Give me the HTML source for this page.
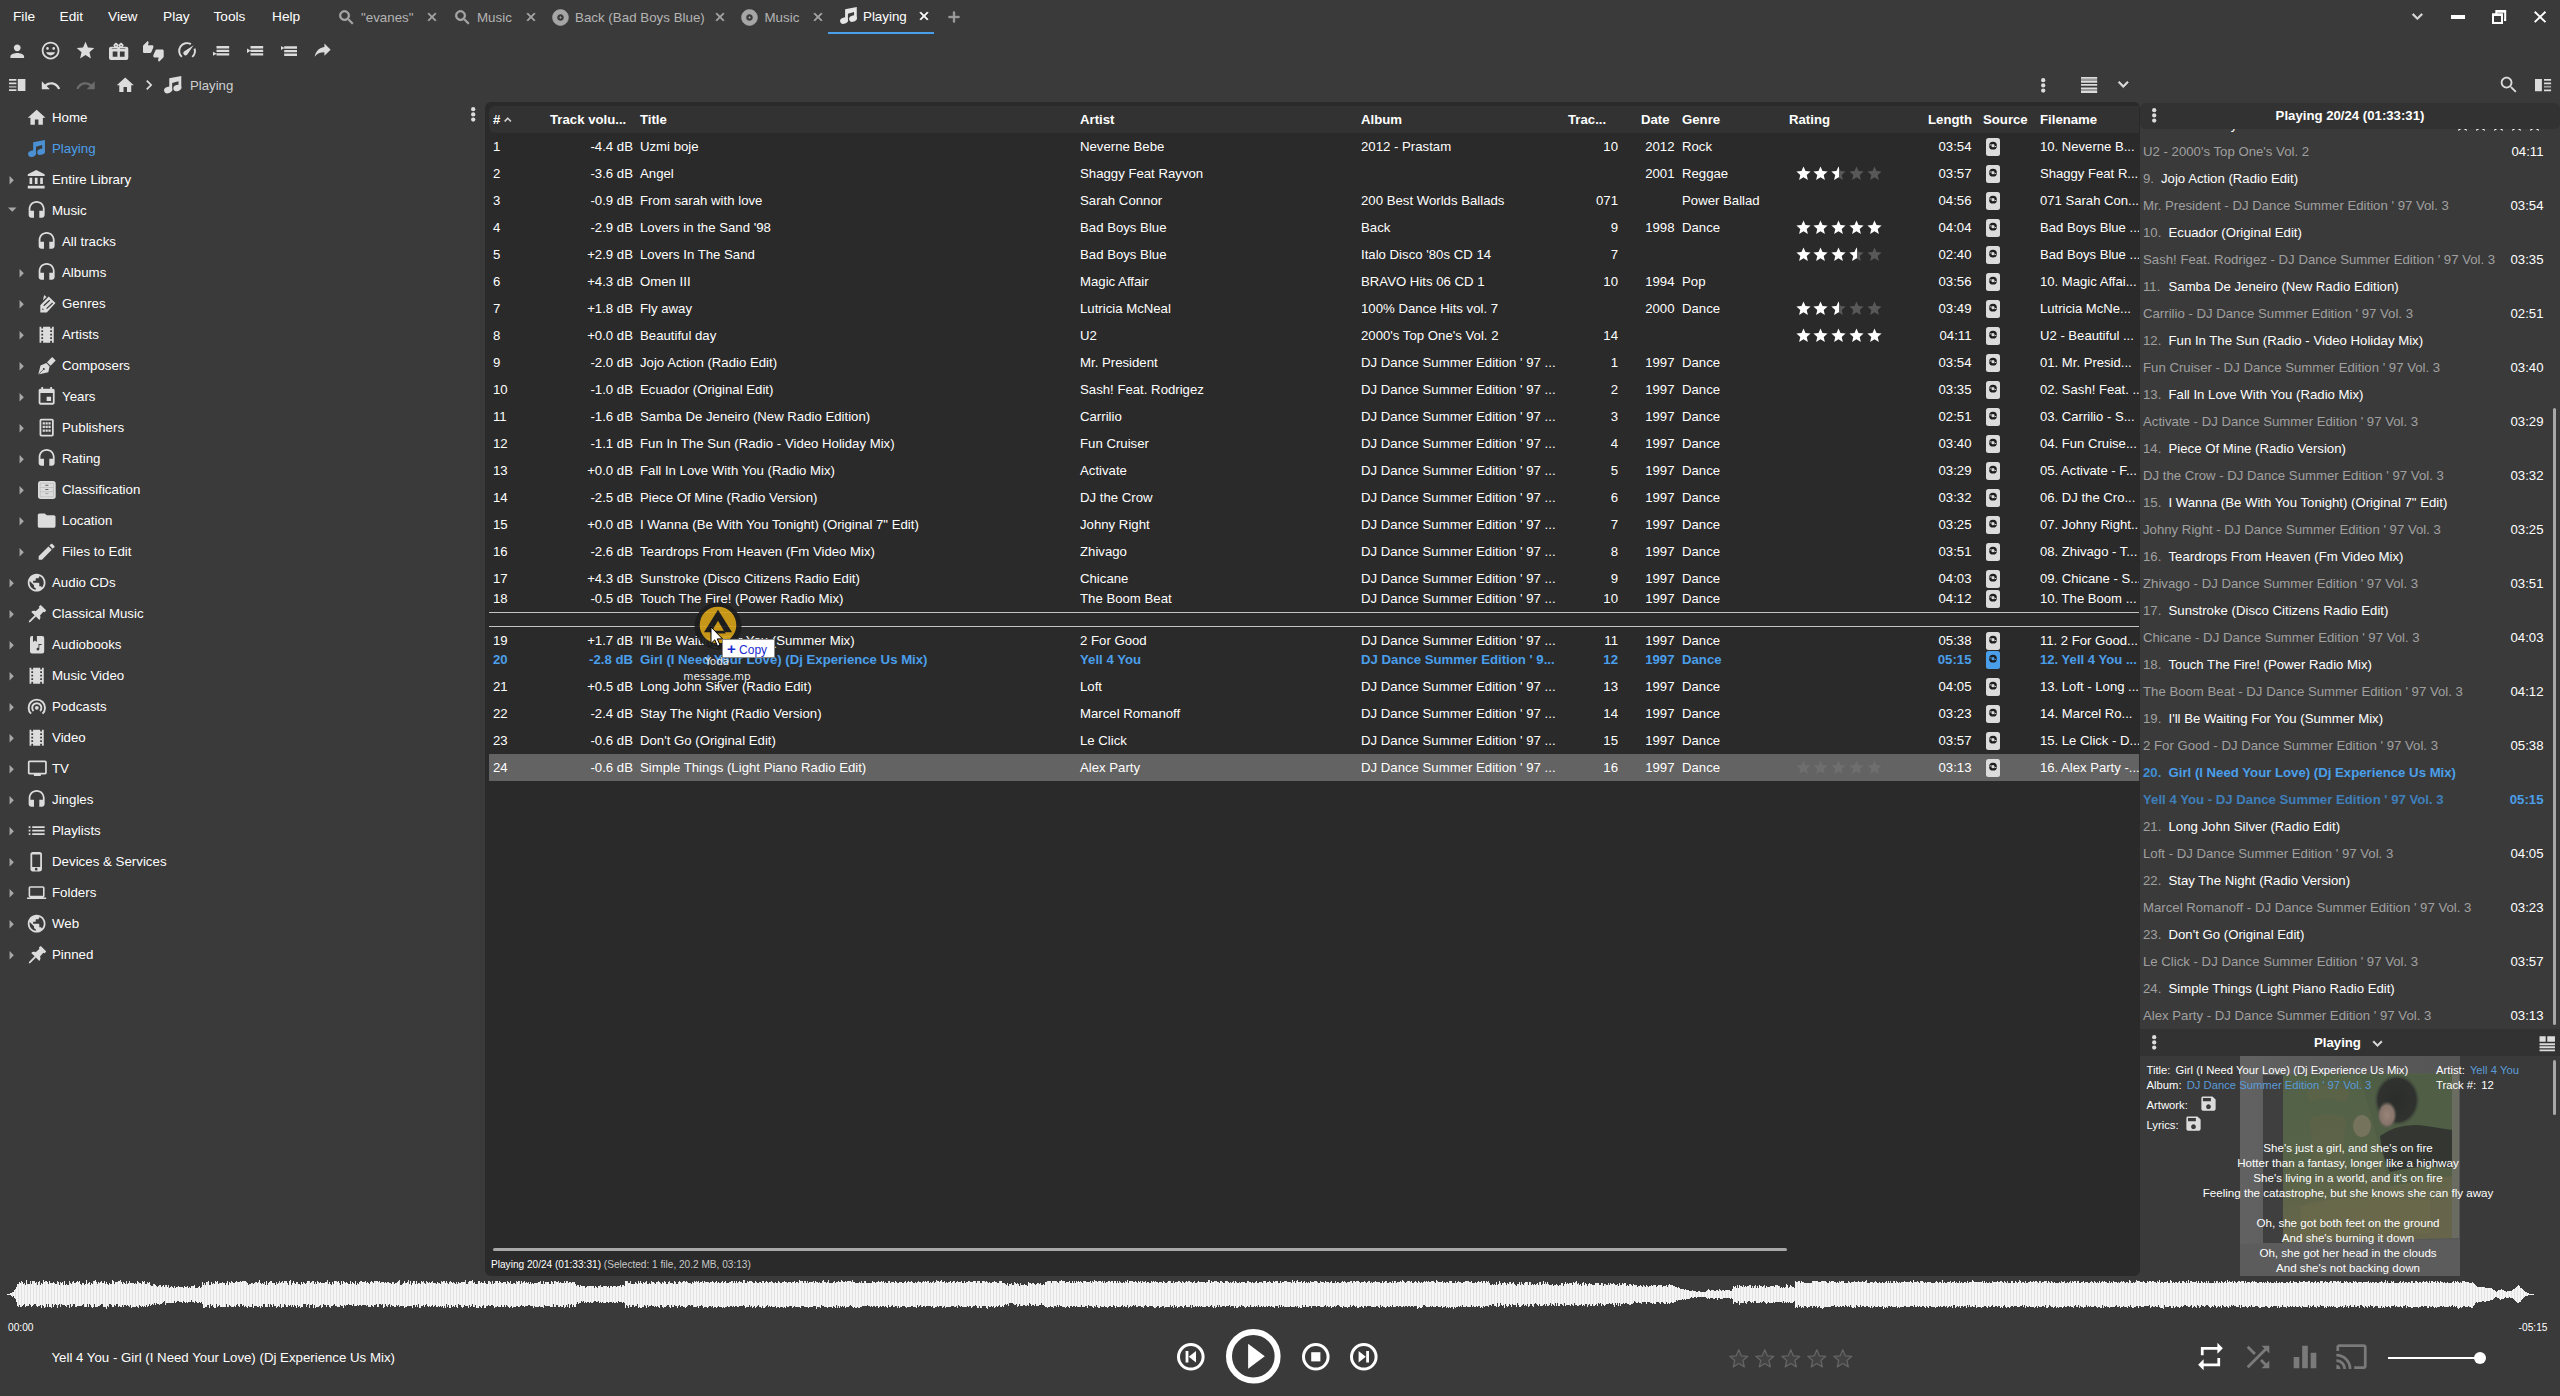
<!DOCTYPE html>
<html lang="en"><head><meta charset="utf-8"><title>MediaMonkey - Playing</title><style>
html,body{margin:0;padding:0;background:#3a3a3a;}
body{width:2560px;height:1396px;position:relative;overflow:hidden;font-family:"Liberation Sans",sans-serif;font-size:13.200px;color:#fff;}
.t{position:absolute;white-space:nowrap;}
.b{position:absolute;}
.i{position:absolute;display:block;overflow:visible;}
.menu{font-size:13.700px;color:#fff}
.tab{font-size:13.350px}
.side{font-size:13.300px}
.hd{font-weight:bold;font-size:13.200px;color:#fff}
.row{font-size:13.200px}
.act{font-weight:bold}
.rp{font-size:13.200px}
.rp.b{font-weight:bold}
.status{font-size:10.100px}
.det{font-size:11.250px}
.lyr{font-size:11.600px}
.time{font-size:10.200px}
.now{font-size:13.250px}
.ghost{font-family:"DejaVu Sans",sans-serif;font-size:10.500px;color:#e8e8e8}
.copy{font-size:12px;color:#1a2bd0}
</style></head><body>
<div class="t menu" style="left:13px;top:6.800000000000001px;height:20px;line-height:20px;">File</div>
<div class="t menu" style="left:59.5px;top:6.800000000000001px;height:20px;line-height:20px;">Edit</div>
<div class="t menu" style="left:108px;top:6.800000000000001px;height:20px;line-height:20px;">View</div>
<div class="t menu" style="left:163px;top:6.800000000000001px;height:20px;line-height:20px;">Play</div>
<div class="t menu" style="left:213.5px;top:6.800000000000001px;height:20px;line-height:20px;">Tools</div>
<div class="t menu" style="left:272px;top:6.800000000000001px;height:20px;line-height:20px;">Help</div>
<svg class="i" style="left:336.50px;top:7.50px;color:#a6a6a6;" width="19.00" height="19.00" viewBox="0 0 24 24" fill="currentColor"><path stroke="currentColor" stroke-width="0.9" d="M15.5 14h-.79l-.28-.27C15.41 12.59 16 11.11 16 9.5 16 5.91 13.09 3 9.5 3S3 5.91 3 9.5 5.91 16 9.5 16c1.61 0 3.09-.59 4.23-1.57l.27.28v.79l5 4.99L20.49 19l-4.99-5zm-6 0C7.01 14 5 11.99 5 9.5S7.01 5 9.5 5 14 7.01 14 9.5 11.99 14 9.5 14z" /></svg>
<div class="t tab" style="left:361px;top:7.5px;height:20px;line-height:20px;color:#b4b4b4">"evanes"</div>
<svg class="i" style="left:424.50px;top:10.00px;color:#a6a6a6;" width="14.00" height="14.00" viewBox="0 0 24 24" fill="currentColor"><path stroke="currentColor" stroke-width="1.3" d="M19 6.41L17.59 5 12 10.59 6.41 5 5 6.41 10.59 12 5 17.59 6.41 19 12 13.41 17.59 19 19 17.59 13.41 12z" /></svg>
<svg class="i" style="left:452.50px;top:7.50px;color:#a6a6a6;" width="19.00" height="19.00" viewBox="0 0 24 24" fill="currentColor"><path stroke="currentColor" stroke-width="0.9" d="M15.5 14h-.79l-.28-.27C15.41 12.59 16 11.11 16 9.5 16 5.91 13.09 3 9.5 3S3 5.91 3 9.5 5.91 16 9.5 16c1.61 0 3.09-.59 4.23-1.57l.27.28v.79l5 4.99L20.49 19l-4.99-5zm-6 0C7.01 14 5 11.99 5 9.5S7.01 5 9.5 5 14 7.01 14 9.5 11.99 14 9.5 14z" /></svg>
<div class="t tab" style="left:477px;top:7.5px;height:20px;line-height:20px;color:#b4b4b4">Music</div>
<svg class="i" style="left:523.50px;top:10.00px;color:#a6a6a6;" width="14.00" height="14.00" viewBox="0 0 24 24" fill="currentColor"><path stroke="currentColor" stroke-width="1.3" d="M19 6.41L17.59 5 12 10.59 6.41 5 5 6.41 10.59 12 5 17.59 6.41 19 12 13.41 17.59 19 19 17.59 13.41 12z" /></svg>
<svg class="i" style="left:551.00px;top:8.00px;color:#a6a6a6;" width="19.00" height="19.00" viewBox="0 0 24 24" fill="currentColor"><path stroke="currentColor" stroke-width="0.8" d="M12 2C6.480 2 2 6.480 2 12s4.480 10 10 10 10-4.480 10-10S17.520 2 12 2zm0 14.500c-2.490 0-4.500-2.010-4.500-4.500S9.510 7.500 12 7.500s4.500 2.010 4.500 4.500-2.010 4.500-4.500 4.500zm0-5.500c-.55 0-1 .45-1 1s.45 1 1 1 1-.45 1-1-.45-1-1-1z" /></svg>
<div class="t tab" style="left:575px;top:7.5px;height:20px;line-height:20px;color:#b4b4b4">Back (Bad Boys Blue)</div>
<svg class="i" style="left:713.00px;top:10.00px;color:#a6a6a6;" width="14.00" height="14.00" viewBox="0 0 24 24" fill="currentColor"><path stroke="currentColor" stroke-width="1.3" d="M19 6.41L17.59 5 12 10.59 6.41 5 5 6.41 10.59 12 5 17.59 6.41 19 12 13.41 17.59 19 19 17.59 13.41 12z" /></svg>
<svg class="i" style="left:740.00px;top:8.00px;color:#a6a6a6;" width="19.00" height="19.00" viewBox="0 0 24 24" fill="currentColor"><path stroke="currentColor" stroke-width="0.8" d="M12 2C6.480 2 2 6.480 2 12s4.480 10 10 10 10-4.480 10-10S17.520 2 12 2zm0 14.500c-2.490 0-4.500-2.010-4.500-4.500S9.510 7.500 12 7.500s4.500 2.010 4.500 4.500-2.010 4.500-4.500 4.500zm0-5.500c-.55 0-1 .45-1 1s.45 1 1 1 1-.45 1-1-.45-1-1-1z" /></svg>
<div class="t tab" style="left:764.5px;top:7.5px;height:20px;line-height:20px;color:#b4b4b4">Music</div>
<svg class="i" style="left:810.50px;top:10.00px;color:#a6a6a6;" width="14.00" height="14.00" viewBox="0 0 24 24" fill="currentColor"><path stroke="currentColor" stroke-width="1.3" d="M19 6.41L17.59 5 12 10.59 6.41 5 5 6.41 10.59 12 5 17.59 6.41 19 12 13.41 17.59 19 19 17.59 13.41 12z" /></svg>
<svg class="i" style="left:840.00px;top:6.60px;color:#e6e6e6" width="16.88" height="16.88" viewBox="0 0 17.4 17.4" fill="currentColor"><path d="M5.270 2.370L17.300 0V12.300H14.500V5.200L8.170 6.900V14.200H5.270Z"/><ellipse cx="4.200" cy="14" rx="4.200" ry="3.200" transform="rotate(-20 4.200 14)"/><ellipse cx="13.400" cy="12" rx="4.100" ry="3.100" transform="rotate(-20 13.400 12)"/></svg>
<div class="t tab" style="left:863px;top:6.5px;height:20px;line-height:20px;color:#fff">Playing</div>
<svg class="i" style="left:917.00px;top:9.00px;color:#fff;" width="14.00" height="14.00" viewBox="0 0 24 24" fill="currentColor"><path stroke="currentColor" stroke-width="1.3" d="M19 6.41L17.59 5 12 10.59 6.41 5 5 6.41 10.59 12 5 17.59 6.41 19 12 13.41 17.59 19 19 17.59 13.41 12z" /></svg>
<svg class="i" style="left:944.50px;top:8.00px;color:#a6a6a6;" width="18.00" height="18.00" viewBox="0 0 24 24" fill="currentColor"><path stroke="currentColor" stroke-width="0.9" d="M19 13h-6v6h-2v-6H5v-2h6V5h2v6h6v2z" /></svg>
<div class="b" style="left:828px;top:32px;width:106px;height:2px;background:#4a9fea"></div>
<svg class="i" style="left:2406.60px;top:5.80px;color:#dcdcdc;" width="20.80" height="20.80" viewBox="0 0 24 24" fill="currentColor"><path stroke="currentColor" stroke-width="0.7" d="M16.59 8.59L12 13.17 7.41 8.59 6 10l6 6 6-6z" /></svg>
<div class="b" style="left:2450.9px;top:14.7px;width:14.3px;height:4.5px;background:#fff"></div>
<svg class="i" style="left:2492.00px;top:10.00px;color:#fff" width="14.20" height="14.00" viewBox="0 0 14.2 14" fill="currentColor"><path fill-rule="evenodd" d="M0 3.300h11v10.700H0zM2 6v6h7V6zM3.300 0h10.900v11.100H12v-2h.200V2.700H5.300v.600h-2z"/></svg>
<svg class="i" style="left:2534.00px;top:11.10px;color:#fff" width="12.20" height="11.80" viewBox="0 0 12.2 11.8" fill="currentColor"><path d="M0.700 0.700L11.500 11.100M11.500 0.700L0.700 11.100" stroke="currentColor" stroke-width="1.900" fill="none"/></svg>
<svg class="i" style="left:6.75px;top:40.75px;color:#dcdcdc;" width="20.50" height="20.50" viewBox="0 0 24 24" fill="currentColor"><path d="M12 12c2.21 0 4-1.79 4-4s-1.79-4-4-4-4 1.79-4 4 1.79 4 4 4zm0 2c-2.67 0-8 1.34-8 4v2h16v-2c0-2.66-5.33-4-8-4z" /></svg>
<svg class="i" style="left:40.40px;top:40.40px;color:#dcdcdc;" width="21.20" height="21.20" viewBox="0 0 24 24" fill="currentColor"><path d="M11.99 2C6.47 2 2 6.48 2 12s4.47 10 9.99 10C17.52 22 22 17.52 22 12S17.52 2 11.99 2zM12 20c-4.42 0-8-3.58-8-8s3.58-8 8-8 8 3.58 8 8-3.58 8-8 8zm3.5-9c.83 0 1.5-.67 1.5-1.5S16.330 8 15.5 8 14 8.670 14 9.5s.67 1.5 1.5 1.5zm-7 0c.83 0 1.5-.67 1.5-1.5S9.330 8 8.5 8 7 8.670 7 9.5 7.670 11 8.500 11zm3.500 6.500c2.330 0 4.310-1.460 5.110-3.500H6.890c.8 2.040 2.780 3.500 5.110 3.500z" /></svg>
<svg class="i" style="left:74.80px;top:40.10px;color:#dcdcdc;" width="21.00" height="21.00" viewBox="0 0 24 24" fill="currentColor"><path d="M12 17.27L18.18 21l-1.64-7.03L22 9.24l-7.19-.61L12 2 9.19 8.63 2 9.24l5.46 4.73L5.82 21z" /></svg>
<svg class="i" style="left:109.40px;top:41.90px;color:#dcdcdc" width="19.30" height="18.00" viewBox="0 0 19.3 18" fill="currentColor"><path fill-rule="evenodd" d="M2 4.700h15.300a2 2 0 0 1 2 2v9.300a2 2 0 0 1-2 2H2a2 2 0 0 1-2-2V6.700a2 2 0 0 1 2-2zM2.700 6.400v.7h5.500v-.7zM10.900 6.400v.7h5.500v-.7zM3.700 9.400v5.400h4.700V9.400zM10.900 9.400v5.400h4.700V9.400z"/><path fill-rule="evenodd" d="M7 .6l1.200 1a2.300 2.300 0 1 1-2.400 0zM7 2.900a.65.65 0 1 0 0 1.300a.65.65 0 1 0 0-1.300zM12.100 .6l1.200 1a2.300 2.300 0 1 1-2.400 0zM12.100 2.900a.65.65 0 1 0 0 1.300a.65.65 0 1 0 0-1.300z"/></svg>
<svg class="i" style="left:142.65px;top:40.65px;color:#dcdcdc;" width="20.70" height="20.70" viewBox="0 0 24 24" fill="currentColor"><path d="M12 6c0-.55-.45-1-1-1H5.820l.66-3.180.02-.23c0-.31-.13-.59-.33-.8L5.380 0 .44 4.940C.17 5.210 0 5.590 0 6v6.500c0 .83.67 1.500 1.500 1.500h6.750c.62 0 1.150-.38 1.380-.91l2.260-5.290c.07-.17.11-.36.11-.55V6zm10.500 4h-6.750c-.62 0-1.150.38-1.380.91l-2.260 5.290c-.07.17-.11.36-.11.55V18c0 .55.45 1 1 1h5.180l-.66 3.180-.02.24c0 .31.13.59.33.8l.79.78 4.940-4.940c.27-.27.44-.65.44-1.060v-6.500c0-.83-.67-1.500-1.500-1.500z" /></svg>
<svg class="i" style="left:178.10px;top:42.20px;color:#dcdcdc;" width="18.00" height="18.00" viewBox="0 0 18 18" fill="currentColor"><g transform="translate(9,9)"><path d="M-5.200 5.900A7.900 7.900 0 0 1 3.900 -6.900M7.550 -2.400A7.900 7.900 0 0 1 5.200 5.900" fill="none" stroke="currentColor" stroke-width="1.900"/><path d="M6.600 -5.700L0.500 3.300A2.300 2.300 0 0 1 -3.300 0.700Z"/></g></svg>
<svg class="i" style="left:212.80px;top:46.30px;color:#dcdcdc" width="16.20" height="9.70" viewBox="0 0 16.2 9.7" fill="currentColor"><path d="M3.500 0h12.700v2.400H3.500zM3.500 3.700h12.700v2.300H3.500zM3.500 7.200h12.700v2.400H3.500zM0 5.700L3.700 7.700L0 9.700z"/></svg>
<svg class="i" style="left:246.90px;top:46.30px;color:#dcdcdc" width="16.20" height="9.70" viewBox="0 0 16.2 9.7" fill="currentColor"><path d="M3.500 0h12.700v2.400H3.500zM3.500 3.700h12.700v2.300H3.500zM3.500 7.200h12.700v2.400H3.500zM0 2.600L3.700 4.750L0 6.900z"/></svg>
<svg class="i" style="left:281.00px;top:46.00px;color:#dcdcdc" width="16.20" height="9.90" viewBox="0 0 16.2 9.9" fill="currentColor"><path d="M3.200 0.300h12.800v2.400H3.200zM3.200 4h12.800v2.300H3.200zM3.200 7.500h12.800v2.400H3.200zM0 0L3.500 2L0 4z"/></svg>
<svg class="i" style="left:312.35px;top:39.41px;color:#dcdcdc;" width="21.30" height="21.30" viewBox="0 0 24 24" fill="currentColor"><g transform="translate(24,0) scale(-1,1)"><path d="M10 9V5l-7 7 7 7v-4.100c5 0 8.500 1.600 11 5.100-1-5-4-10-11-11z" /></g></svg>
<svg class="i" style="left:8.80px;top:79.00px;color:#dcdcdc" width="16.40" height="12.10" viewBox="0 0 16.4 12.1" fill="currentColor"><path d="M0 0h7.400v1.800H0zM0 3.500h7.400v1.800H0zM0 10.300h7.400v1.800H0zM8.800 0h7.600v12.100H8.800z"/><path d="M0 6.900h7.400v1.800H0z" fill="#a0a0a0"/></svg>
<svg class="i" style="left:39.75px;top:74.50px;color:#dcdcdc;" width="21.50" height="21.50" viewBox="0 0 24 24" fill="currentColor"><path d="M12.5 8c-2.65 0-5.05.99-6.9 2.6L2 7v9h9l-3.62-3.62c1.39-1.16 3.16-1.88 5.12-1.88 3.54 0 6.55 2.31 7.6 5.5l2.37-.78C21.08 11.03 17.15 8 12.5 8z" /></svg>
<svg class="i" style="left:74.55px;top:74.50px;color:#6c6c6c;" width="21.50" height="21.50" viewBox="0 0 24 24" fill="currentColor"><path d="M18.4 10.6C16.55 8.99 14.15 8 11.5 8c-4.65 0-8.58 3.03-9.96 7.22L3.9 16c1.05-3.19 4.05-5.5 7.6-5.5 1.95 0 3.73.72 5.12 1.88L13 16h9V7l-3.6 3.6z" /></svg>
<svg class="i" style="left:114.75px;top:74.65px;color:#dcdcdc;" width="20.50" height="20.50" viewBox="0 0 24 24" fill="currentColor"><path d="M10 20v-6h4v6h5v-8h3L12 3 2 12h3v8z" /></svg>
<svg class="i" style="left:139.30px;top:75.15px;color:#dcdcdc;" width="20.00" height="20.00" viewBox="0 0 24 24" fill="currentColor"><path d="M10 6L8.59 7.41 13.17 12l-4.58 4.59L10 18l6-6z" /></svg>
<svg class="i" style="left:163.80px;top:75.80px;color:#dcdcdc" width="17.40" height="17.40" viewBox="0 0 17.4 17.4" fill="currentColor"><path d="M5.270 2.370L17.300 0V12.300H14.500V5.200L8.170 6.900V14.200H5.270Z"/><ellipse cx="4.200" cy="14" rx="4.200" ry="3.200" transform="rotate(-20 4.200 14)"/><ellipse cx="13.400" cy="12" rx="4.100" ry="3.100" transform="rotate(-20 13.400 12)"/></svg>
<div class="t " style="left:190px;top:75.5px;height:20px;line-height:20px;color:#cfcfcf">Playing</div>
<svg class="i" style="left:2040.80px;top:77.80px;color:#dcdcdc" width="4.40" height="14.80" viewBox="0 0 4.4 14.8" fill="currentColor"><circle cx="2.200" cy="2.200" r="2.150"/><circle cx="2.200" cy="7.400" r="2.150"/><circle cx="2.200" cy="12.600" r="2.150"/></svg>
<svg class="i" style="left:2081.00px;top:76.90px;color:#dcdcdc" width="16.20" height="16.00" viewBox="0 0 16.2 16" fill="currentColor"><path d="M0 1.800h16.200v2.200H0zM0 12h16.200v2.200H0z" fill="#999"/><path d="M0 0h16.200v1.800H0zM0 4h16.200v1.700H0zM0 7.100h16.200v1.750H0zM0 10.400h16.200v1.650H0zM0 14h16.200v2H0z"/></svg>
<svg class="i" style="left:2112.70px;top:73.80px;color:#dcdcdc;" width="20.60" height="20.60" viewBox="0 0 24 24" fill="currentColor"><path stroke="currentColor" stroke-width="0.7" d="M16.59 8.59L12 13.17 7.41 8.59 6 10l6 6 6-6z" /></svg>
<svg class="i" style="left:2497.85px;top:73.85px;color:#dcdcdc;" width="21.70" height="21.70" viewBox="0 0 24 24" fill="currentColor"><path d="M15.5 14h-.79l-.28-.27C15.41 12.59 16 11.11 16 9.5 16 5.91 13.09 3 9.5 3S3 5.91 3 9.5 5.91 16 9.5 16c1.61 0 3.09-.59 4.23-1.57l.27.28v.79l5 4.99L20.49 19l-4.99-5zm-6 0C7.01 14 5 11.99 5 9.5S7.01 5 9.5 5 14 7.01 14 9.5 11.99 14 9.5 14z" /></svg>
<svg class="i" style="left:2535.00px;top:78.80px;color:#dcdcdc" width="16.10" height="12.30" viewBox="0 0 16.1 12.3" fill="currentColor"><path d="M0 0h6.900v12.300H0zM9 0h7.100v1.800H9zM9 3.600h7.100v1.700H9zM9 10.400h7.100v1.900H9z"/><path d="M9 6.800h7.100v1.800H9z" fill="#a0a0a0"/></svg>
<svg class="i" style="left:26.35px;top:106.85px;color:#dcdcdc;" width="21.30" height="21.30" viewBox="0 0 24 24" fill="currentColor"><path d="M10 20v-6h4v6h5v-8h3L12 3 2 12h3v8z" /></svg>
<div class="t side" style="left:52px;top:108.0px;height:20px;line-height:20px;color:#fff">Home</div>
<svg class="i" style="left:28.00px;top:139.80px;color:#4a90d2" width="17.05" height="17.05" viewBox="0 0 17.4 17.4" fill="currentColor"><path d="M5.270 2.370L17.300 0V12.300H14.500V5.200L8.170 6.900V14.200H5.270Z"/><ellipse cx="4.200" cy="14" rx="4.200" ry="3.200" transform="rotate(-20 4.200 14)"/><ellipse cx="13.400" cy="12" rx="4.100" ry="3.100" transform="rotate(-20 13.400 12)"/></svg>
<div class="t side" style="left:52px;top:139.0px;height:20px;line-height:20px;color:#4a9fea">Playing</div>
<svg class="i" style="left:1.15px;top:169.55px;color:#a8a8a8;" width="20.50" height="20.50" viewBox="0 0 24 24" fill="currentColor"><path d="M10 17l5-5-5-5v10z" /></svg>
<svg class="i" style="left:26.35px;top:168.85px;color:#dcdcdc;" width="21.30" height="21.30" viewBox="0 0 24 24" fill="currentColor"><path d="M4 10v7h3v-7H4zm6 0v7h3v-7h-3zM2 22h19v-3H2v3zm14-12v7h3v-7h-3zm-4.5-9L2 6v2h19V6l-9.500-5z" /></svg>
<div class="t side" style="left:52px;top:170.0px;height:20px;line-height:20px;color:#fff">Entire Library</div>
<svg class="i" style="left:1.55px;top:199.25px;color:#a8a8a8;" width="20.50" height="20.50" viewBox="0 0 24 24" fill="currentColor"><path d="M7 10l5 5 5-5z" /></svg>
<svg class="i" style="left:26.35px;top:199.85px;color:#dcdcdc;" width="21.30" height="21.30" viewBox="0 0 24 24" fill="currentColor"><path d="M12 1c-4.97 0-9 4.03-9 9v7c0 1.66 1.34 3 3 3h3v-8H5v-2c0-3.87 3.13-7 7-7s7 3.13 7 7v2h-4v8h3c1.66 0 3-1.34 3-3v-7c0-4.97-4.03-9-9-9z" /></svg>
<div class="t side" style="left:52px;top:201.0px;height:20px;line-height:20px;color:#fff">Music</div>
<svg class="i" style="left:36.35px;top:230.85px;color:#dcdcdc;" width="21.30" height="21.30" viewBox="0 0 24 24" fill="currentColor"><path d="M12 1c-4.97 0-9 4.03-9 9v7c0 1.66 1.34 3 3 3h3v-8H5v-2c0-3.87 3.13-7 7-7s7 3.13 7 7v2h-4v8h3c1.66 0 3-1.34 3-3v-7c0-4.97-4.03-9-9-9z" /></svg>
<div class="t side" style="left:62px;top:232.0px;height:20px;line-height:20px;color:#fff">All tracks</div>
<svg class="i" style="left:11.15px;top:262.55px;color:#a8a8a8;" width="20.50" height="20.50" viewBox="0 0 24 24" fill="currentColor"><path d="M10 17l5-5-5-5v10z" /></svg>
<svg class="i" style="left:36.35px;top:261.85px;color:#dcdcdc;" width="21.30" height="21.30" viewBox="0 0 24 24" fill="currentColor"><path d="M12 1c-4.97 0-9 4.03-9 9v7c0 1.66 1.34 3 3 3h3v-8H5v-2c0-3.87 3.13-7 7-7s7 3.13 7 7v2h-4v8h3c1.66 0 3-1.34 3-3v-7c0-4.97-4.03-9-9-9z" /></svg>
<div class="t side" style="left:62px;top:263.0px;height:20px;line-height:20px;color:#fff">Albums</div>
<svg class="i" style="left:11.15px;top:293.55px;color:#a8a8a8;" width="20.50" height="20.50" viewBox="0 0 24 24" fill="currentColor"><path d="M10 17l5-5-5-5v10z" /></svg>
<svg class="i" style="left:39.70px;top:295.20px;color:#dcdcdc" width="15.50" height="17.70" viewBox="0 0 15.5 17.7" fill="currentColor"><path fill-rule="evenodd" d="M8.700 1.600L15.500 8.100L6.800 17.400H0.300V10.300ZM2.900 13.500a.75.75 0 1 0 0 1.500a.75.75 0 1 0 0-1.500z"/><path d="M4.200 0L6.500 1.900L2.900 5.200Z"/><path d="M3.700 10.700L9.700 5.300M6.600 13.600L12.600 8" stroke="#3a3a3a" stroke-width="1.250" fill="none"/></svg>
<div class="t side" style="left:62px;top:294.0px;height:20px;line-height:20px;color:#fff">Genres</div>
<svg class="i" style="left:11.15px;top:324.55px;color:#a8a8a8;" width="20.50" height="20.50" viewBox="0 0 24 24" fill="currentColor"><path d="M10 17l5-5-5-5v10z" /></svg>
<svg class="i" style="left:36.35px;top:323.85px;color:#dcdcdc;" width="21.30" height="21.30" viewBox="0 0 24 24" fill="currentColor"><path d="M18 3v2h-2V3H8v2H6V3H4v18h2v-2h2v2h8v-2h2v2h2V3h-2zM8 17H6v-2h2v2zm0-4H6v-2h2v2zm0-4H6V7h2v2zm10 8h-2v-2h2v2zm0-4h-2v-2h2v2zm0-4h-2V7h2v2z" /></svg>
<div class="t side" style="left:62px;top:325.0px;height:20px;line-height:20px;color:#fff">Artists</div>
<svg class="i" style="left:11.15px;top:355.55px;color:#a8a8a8;" width="20.50" height="20.50" viewBox="0 0 24 24" fill="currentColor"><path d="M10 17l5-5-5-5v10z" /></svg>
<svg class="i" style="left:38.00px;top:357.00px;color:#dcdcdc" width="17.80" height="18.20" viewBox="0 0 17.8 18.2" fill="currentColor"><path d="M14.200 0L17.700 3.500L12.600 8.700L9 5.200Z"/><path fill-rule="evenodd" d="M8.400 6.100L11.600 9.400L10.300 15.300L0.300 17.600L2.500 8.500ZM5.800 10.900a1 1 0 1 0 0 2a1 1 0 1 0 0-2z"/><path d="M0 18.200L5.300 12.500" stroke="#3a3a3a" stroke-width="0.700" fill="none"/></svg>
<div class="t side" style="left:62px;top:356.0px;height:20px;line-height:20px;color:#fff">Composers</div>
<svg class="i" style="left:11.15px;top:386.55px;color:#a8a8a8;" width="20.50" height="20.50" viewBox="0 0 24 24" fill="currentColor"><path d="M10 17l5-5-5-5v10z" /></svg>
<svg class="i" style="left:36.35px;top:385.85px;color:#dcdcdc;" width="21.30" height="21.30" viewBox="0 0 24 24" fill="currentColor"><path d="M17 12h-5v5h5v-5zM16 1v2H8V1H6v2H5c-1.11 0-1.99.9-1.99 2L3 19c0 1.1.89 2 2 2h14c1.1 0 2-.9 2-2V5c0-1.1-.9-2-2-2h-1V1h-2zm3 18H5V8h14v11z" /></svg>
<div class="t side" style="left:62px;top:387.0px;height:20px;line-height:20px;color:#fff">Years</div>
<svg class="i" style="left:11.15px;top:417.55px;color:#a8a8a8;" width="20.50" height="20.50" viewBox="0 0 24 24" fill="currentColor"><path d="M10 17l5-5-5-5v10z" /></svg>
<svg class="i" style="left:36.35px;top:416.85px;color:#dcdcdc;" width="21.30" height="21.30" viewBox="0 0 24 24" fill="currentColor"><path d="M6 2h12a2 2 0 0 1 2 2v16a2 2 0 0 1-2 2H6a2 2 0 0 1-2-2V4a2 2 0 0 1 2-2zm0 2v16h12V4zM7.500 6h2.500v2.500H7.500zM10.750 6h2.500v2.500h-2.500zM14 6h2.500v2.500H14zM7.500 10h2.500v2.500H7.500zM10.750 10h2.500v2.500h-2.500zM14 10h2.500v2.500H14zM7.500 14h2.500v2.500H7.500zM10.750 14h2.500v2.500h-2.500zM14 14h2.500v2.500H14z" fill-rule="evenodd"/></svg>
<div class="t side" style="left:62px;top:418.0px;height:20px;line-height:20px;color:#fff">Publishers</div>
<svg class="i" style="left:11.15px;top:448.55px;color:#a8a8a8;" width="20.50" height="20.50" viewBox="0 0 24 24" fill="currentColor"><path d="M10 17l5-5-5-5v10z" /></svg>
<svg class="i" style="left:36.35px;top:447.85px;color:#dcdcdc;" width="21.30" height="21.30" viewBox="0 0 24 24" fill="currentColor"><path d="M12 1c-4.97 0-9 4.03-9 9v7c0 1.66 1.34 3 3 3h3v-8H5v-2c0-3.87 3.13-7 7-7s7 3.13 7 7v2h-4v8h3c1.66 0 3-1.34 3-3v-7c0-4.97-4.03-9-9-9z" /></svg>
<div class="t side" style="left:62px;top:449.0px;height:20px;line-height:20px;color:#fff">Rating</div>
<svg class="i" style="left:11.15px;top:479.55px;color:#a8a8a8;" width="20.50" height="20.50" viewBox="0 0 24 24" fill="currentColor"><path d="M10 17l5-5-5-5v10z" /></svg>
<svg class="i" style="left:38.10px;top:481.00px;color:#dcdcdc" width="17.70" height="18.00" viewBox="0 0 17.7 18" fill="currentColor"><rect x="0" y="0" width="17.700" height="18" rx="2.800"/><path d="M2.200 2.200h13.300v13.600H2.200zM2.200 6.500h13.300M2.200 10.800h13.300" fill="none" stroke="#bcbcbc" stroke-width="0.800"/><path d="M7.300 4.300h3.100M7.300 8.500h3.100" stroke="#555" stroke-width="0.900" fill="none"/><path d="M7.300 12.600h3.100" stroke="#999" stroke-width="0.800" fill="none"/></svg>
<div class="t side" style="left:62px;top:480.0px;height:20px;line-height:20px;color:#fff">Classification</div>
<svg class="i" style="left:11.15px;top:510.55px;color:#a8a8a8;" width="20.50" height="20.50" viewBox="0 0 24 24" fill="currentColor"><path d="M10 17l5-5-5-5v10z" /></svg>
<svg class="i" style="left:36.35px;top:509.85px;color:#dcdcdc;" width="21.30" height="21.30" viewBox="0 0 24 24" fill="currentColor"><path d="M10 4H4c-1.1 0-1.99.9-1.99 2L2 18c0 1.1.9 2 2 2h16c1.1 0 2-.9 2-2V8c0-1.1-.9-2-2-2h-8l-2-2z" /></svg>
<div class="t side" style="left:62px;top:511.0px;height:20px;line-height:20px;color:#fff">Location</div>
<svg class="i" style="left:11.15px;top:541.55px;color:#a8a8a8;" width="20.50" height="20.50" viewBox="0 0 24 24" fill="currentColor"><path d="M10 17l5-5-5-5v10z" /></svg>
<svg class="i" style="left:36.35px;top:540.85px;color:#dcdcdc;" width="21.30" height="21.30" viewBox="0 0 24 24" fill="currentColor"><path d="M3 17.25V21h3.75L17.81 9.94l-3.75-3.75L3 17.25zM20.71 7.04c.39-.39.39-1.02 0-1.41l-2.34-2.34c-.39-.39-1.02-.39-1.41 0l-1.83 1.83 3.75 3.75 1.83-1.83z" /></svg>
<div class="t side" style="left:62px;top:542.0px;height:20px;line-height:20px;color:#fff">Files to Edit</div>
<svg class="i" style="left:1.15px;top:572.55px;color:#a8a8a8;" width="20.50" height="20.50" viewBox="0 0 24 24" fill="currentColor"><path d="M10 17l5-5-5-5v10z" /></svg>
<svg class="i" style="left:26.35px;top:571.85px;color:#dcdcdc;" width="21.30" height="21.30" viewBox="0 0 24 24" fill="currentColor"><path d="M12 2C6.48 2 2 6.48 2 12s4.48 10 10 10 10-4.48 10-10S17.52 2 12 2zm-1 17.93c-3.95-.49-7-3.85-7-7.93 0-.62.08-1.21.21-1.79L9 15v1c0 1.1.9 2 2 2v1.93zm6.9-2.54c-.26-.81-1-1.39-1.9-1.39h-1v-3c0-.55-.45-1-1-1H8v-2h2c.55 0 1-.45 1-1V7h2c1.1 0 2-.9 2-2v-.41c2.93 1.19 5 4.06 5 7.41 0 2.08-.8 3.97-2.1 5.39z" /></svg>
<div class="t side" style="left:52px;top:573.0px;height:20px;line-height:20px;color:#fff">Audio CDs</div>
<svg class="i" style="left:1.15px;top:603.55px;color:#a8a8a8;" width="20.50" height="20.50" viewBox="0 0 24 24" fill="currentColor"><path d="M10 17l5-5-5-5v10z" /></svg>
<svg class="i" style="left:27.70px;top:605.20px;color:#dcdcdc" width="18.00" height="18.00" viewBox="0 0 18 18" fill="currentColor"><g transform="translate(15.2,3.000) rotate(45)"><path d="M-4 0.300a.8.800 0 0 1 .8-.8h6.400a.8.800 0 0 1 .8.800v1.400a.8.800 0 0 1-.8.800H2.700L3.100 7.600C5 8.300 5.700 9.700 5.700 11.200H0.900V19L0 20.500L-0.900 19V11.200H-5.700C-5.700 9.700-5 8.300-3.100 7.600L-2.700 2.500h-.5a.8.800 0 0 1-.8-.8Z"/></g></svg>
<div class="t side" style="left:52px;top:604.0px;height:20px;line-height:20px;color:#fff">Classical Music</div>
<svg class="i" style="left:1.15px;top:634.55px;color:#a8a8a8;" width="20.50" height="20.50" viewBox="0 0 24 24" fill="currentColor"><path d="M10 17l5-5-5-5v10z" /></svg>
<svg class="i" style="left:29.90px;top:636.10px;color:#dcdcdc" width="14.20" height="17.60" viewBox="0 0 14.2 17.6" fill="currentColor"><path fill-rule="evenodd" d="M2 0h1v6l1.950-1.400L6.900 6V0H12.200a2 2 0 0 1 2 2v13.600a2 2 0 0 1-2 2H2a2 2 0 0 1-2-2V2a2 2 0 0 1 2-2zM8.500 7.900v4a1.400 1.300 0 1 0 .85 1.100V8.900h2.300V7.900z"/></svg>
<div class="t side" style="left:52px;top:635.0px;height:20px;line-height:20px;color:#fff">Audiobooks</div>
<svg class="i" style="left:1.15px;top:665.55px;color:#a8a8a8;" width="20.50" height="20.50" viewBox="0 0 24 24" fill="currentColor"><path d="M10 17l5-5-5-5v10z" /></svg>
<svg class="i" style="left:26.35px;top:664.85px;color:#dcdcdc;" width="21.30" height="21.30" viewBox="0 0 24 24" fill="currentColor"><path d="M18 3v2h-2V3H8v2H6V3H4v18h2v-2h2v2h8v-2h2v2h2V3h-2zM8 17H6v-2h2v2zm0-4H6v-2h2v2zm0-4H6V7h2v2zm10 8h-2v-2h2v2zm0-4h-2v-2h2v2zm0-4h-2V7h2v2z" /></svg>
<div class="t side" style="left:52px;top:666.0px;height:20px;line-height:20px;color:#fff">Music Video</div>
<svg class="i" style="left:1.15px;top:696.55px;color:#a8a8a8;" width="20.50" height="20.50" viewBox="0 0 24 24" fill="currentColor"><path d="M10 17l5-5-5-5v10z" /></svg>
<svg class="i" style="left:28.20px;top:698.50px;color:#dcdcdc" width="17.60" height="16.40" viewBox="0 0 17.6 16.4" fill="currentColor"><g transform="translate(8.800,8.800)"><circle r="1.900"/><path d="M-3.250 3.250A4.600 4.600 0 1 1 3.250 3.250M-5.700 5.900A8.200 8.200 0 1 1 5.700 5.900" fill="none" stroke="currentColor" stroke-width="1.900"/></g></svg>
<div class="t side" style="left:52px;top:697.0px;height:20px;line-height:20px;color:#fff">Podcasts</div>
<svg class="i" style="left:1.15px;top:727.55px;color:#a8a8a8;" width="20.50" height="20.50" viewBox="0 0 24 24" fill="currentColor"><path d="M10 17l5-5-5-5v10z" /></svg>
<svg class="i" style="left:26.35px;top:726.85px;color:#dcdcdc;" width="21.30" height="21.30" viewBox="0 0 24 24" fill="currentColor"><path d="M18 3v2h-2V3H8v2H6V3H4v18h2v-2h2v2h8v-2h2v2h2V3h-2zM8 17H6v-2h2v2zm0-4H6v-2h2v2zm0-4H6V7h2v2zm10 8h-2v-2h2v2zm0-4h-2v-2h2v2zm0-4h-2V7h2v2z" /></svg>
<div class="t side" style="left:52px;top:728.0px;height:20px;line-height:20px;color:#fff">Video</div>
<svg class="i" style="left:1.15px;top:758.55px;color:#a8a8a8;" width="20.50" height="20.50" viewBox="0 0 24 24" fill="currentColor"><path d="M10 17l5-5-5-5v10z" /></svg>
<svg class="i" style="left:26.65px;top:758.15px;color:#dcdcdc;" width="20.70" height="20.70" viewBox="0 0 24 24" fill="currentColor"><path d="M21 3H3c-1.1 0-2 .9-2 2v12c0 1.1.9 2 2 2h5v2h8v-2h5c1.1 0 1.99-.9 1.99-2L23 5c0-1.1-.9-2-2-2zm0 14H3V5h18v12z" /></svg>
<div class="t side" style="left:52px;top:759.0px;height:20px;line-height:20px;color:#fff">TV</div>
<svg class="i" style="left:1.15px;top:789.55px;color:#a8a8a8;" width="20.50" height="20.50" viewBox="0 0 24 24" fill="currentColor"><path d="M10 17l5-5-5-5v10z" /></svg>
<svg class="i" style="left:26.35px;top:788.85px;color:#dcdcdc;" width="21.30" height="21.30" viewBox="0 0 24 24" fill="currentColor"><path d="M12 1c-4.97 0-9 4.03-9 9v7c0 1.66 1.34 3 3 3h3v-8H5v-2c0-3.87 3.13-7 7-7s7 3.13 7 7v2h-4v8h3c1.66 0 3-1.34 3-3v-7c0-4.97-4.03-9-9-9z" /></svg>
<div class="t side" style="left:52px;top:790.0px;height:20px;line-height:20px;color:#fff">Jingles</div>
<svg class="i" style="left:1.15px;top:820.55px;color:#a8a8a8;" width="20.50" height="20.50" viewBox="0 0 24 24" fill="currentColor"><path d="M10 17l5-5-5-5v10z" /></svg>
<svg class="i" style="left:26.35px;top:819.85px;color:#dcdcdc;" width="21.30" height="21.30" viewBox="0 0 24 24" fill="currentColor"><path d="M3 13h2v-2H3v2zm0 4h2v-2H3v2zm0-8h2V7H3v2zm4 4h14v-2H7v2zm0 4h14v-2H7v2zM7 7v2h14V7H7z" /></svg>
<div class="t side" style="left:52px;top:821.0px;height:20px;line-height:20px;color:#fff">Playlists</div>
<svg class="i" style="left:1.15px;top:851.55px;color:#a8a8a8;" width="20.50" height="20.50" viewBox="0 0 24 24" fill="currentColor"><path d="M10 17l5-5-5-5v10z" /></svg>
<svg class="i" style="left:26.35px;top:850.85px;color:#dcdcdc;" width="21.30" height="21.30" viewBox="0 0 24 24" fill="currentColor"><path d="M15.5 1h-8C6.12 1 5 2.12 5 3.5v17C5 21.88 6.12 23 7.5 23h8c1.38 0 2.5-1.12 2.5-2.5v-17C18 2.12 16.88 1 15.5 1zm-4 21c-.83 0-1.5-.67-1.5-1.5s.67-1.5 1.5-1.5 1.5.67 1.5 1.5-.67 1.5-1.5 1.5zm4.500-4H7V4h9v14z" /></svg>
<div class="t side" style="left:52px;top:852.0px;height:20px;line-height:20px;color:#fff">Devices &amp; Services</div>
<svg class="i" style="left:1.15px;top:882.55px;color:#a8a8a8;" width="20.50" height="20.50" viewBox="0 0 24 24" fill="currentColor"><path d="M10 17l5-5-5-5v10z" /></svg>
<svg class="i" style="left:27.40px;top:882.90px;color:#dcdcdc;" width="19.20" height="19.20" viewBox="0 0 24 24" fill="currentColor"><path d="M20 18c1.1 0 1.99-.9 1.99-2L22 6c0-1.1-.9-2-2-2H4c-1.1 0-2 .9-2 2v10c0 1.1.9 2 2 2H0v2h24v-2h-4zM4 6h16v10H4V6z" /></svg>
<div class="t side" style="left:52px;top:883.0px;height:20px;line-height:20px;color:#fff">Folders</div>
<svg class="i" style="left:1.15px;top:913.55px;color:#a8a8a8;" width="20.50" height="20.50" viewBox="0 0 24 24" fill="currentColor"><path d="M10 17l5-5-5-5v10z" /></svg>
<svg class="i" style="left:26.35px;top:912.85px;color:#dcdcdc;" width="21.30" height="21.30" viewBox="0 0 24 24" fill="currentColor"><path d="M12 2C6.48 2 2 6.48 2 12s4.48 10 10 10 10-4.48 10-10S17.52 2 12 2zm-1 17.93c-3.95-.49-7-3.85-7-7.93 0-.62.08-1.21.21-1.79L9 15v1c0 1.1.9 2 2 2v1.93zm6.9-2.54c-.26-.81-1-1.39-1.9-1.39h-1v-3c0-.55-.45-1-1-1H8v-2h2c.55 0 1-.45 1-1V7h2c1.1 0 2-.9 2-2v-.41c2.93 1.19 5 4.06 5 7.41 0 2.08-.8 3.97-2.1 5.39z" /></svg>
<div class="t side" style="left:52px;top:914.0px;height:20px;line-height:20px;color:#fff">Web</div>
<svg class="i" style="left:1.15px;top:944.55px;color:#a8a8a8;" width="20.50" height="20.50" viewBox="0 0 24 24" fill="currentColor"><path d="M10 17l5-5-5-5v10z" /></svg>
<svg class="i" style="left:27.70px;top:946.20px;color:#dcdcdc" width="18.00" height="18.00" viewBox="0 0 18 18" fill="currentColor"><g transform="translate(15.2,3.000) rotate(45)"><path d="M-4 0.300a.8.800 0 0 1 .8-.8h6.400a.8.800 0 0 1 .8.800v1.400a.8.800 0 0 1-.8.800H2.700L3.100 7.600C5 8.300 5.700 9.700 5.700 11.200H0.900V19L0 20.500L-0.900 19V11.200H-5.700C-5.700 9.700-5 8.300-3.100 7.600L-2.700 2.500h-.5a.8.800 0 0 1-.8-.8Z"/></g></svg>
<div class="t side" style="left:52px;top:945.0px;height:20px;line-height:20px;color:#fff">Pinned</div>
<svg class="i" style="left:470.80px;top:106.80px;color:#dcdcdc" width="4.40" height="14.80" viewBox="0 0 4.4 14.8" fill="currentColor"><circle cx="2.200" cy="2.200" r="2.150"/><circle cx="2.200" cy="7.400" r="2.150"/><circle cx="2.200" cy="12.600" r="2.150"/></svg>
<div class="b" style="left:485px;top:102px;width:1654.7px;height:1174px;background:#2a2a2a;border-radius:6px"></div>
<div class="b" style="left:489px;top:106px;width:1650px;height:27px;background:#323232;border-radius:6px 0 0 6px"></div>
<div class="t hd" style="left:493px;top:109.5px;height:20px;line-height:20px;">#</div>
<div class="t hd" style="left:550px;top:109.5px;height:20px;line-height:20px;">Track volu...</div>
<div class="t hd" style="left:640px;top:109.5px;height:20px;line-height:20px;">Title</div>
<div class="t hd" style="left:1080px;top:109.5px;height:20px;line-height:20px;">Artist</div>
<div class="t hd" style="left:1361px;top:109.5px;height:20px;line-height:20px;">Album</div>
<div class="t hd" style="left:1568px;top:109.5px;height:20px;line-height:20px;">Trac...</div>
<div class="t hd" style="left:1641px;top:109.5px;height:20px;line-height:20px;">Date</div>
<div class="t hd" style="left:1682px;top:109.5px;height:20px;line-height:20px;">Genre</div>
<div class="t hd" style="left:1789px;top:109.5px;height:20px;line-height:20px;">Rating</div>
<div class="t hd" style="left:1928px;top:109.5px;height:20px;line-height:20px;">Length</div>
<div class="t hd" style="left:1983px;top:109.5px;height:20px;line-height:20px;">Source</div>
<div class="t hd" style="left:2040px;top:109.5px;height:20px;line-height:20px;">Filename</div>
<svg class="i" style="left:500.75px;top:112.55px;color:#ddd;" width="13.50" height="13.50" viewBox="0 0 24 24" fill="currentColor"><path stroke="currentColor" stroke-width="1.0" d="M12 8l-6 6 1.41 1.41L12 10.83l4.59 4.58L18 14z" /></svg>
<div class="t row" style="left:493px;top:136.5px;height:20px;line-height:20px;color:#fff">1</div>
<div class="t row" style="right:1927px;top:136.5px;height:20px;line-height:20px;color:#fff">-4.4 dB</div>
<div class="t row" style="left:640px;top:136.5px;height:20px;line-height:20px;color:#fff">Uzmi boje</div>
<div class="t row" style="left:1080px;top:136.5px;height:20px;line-height:20px;color:#fff">Neverne Bebe</div>
<div class="t row" style="left:1361px;top:136.5px;height:20px;line-height:20px;color:#fff">2012 - Prastam</div>
<div class="t row" style="right:942px;top:136.5px;height:20px;line-height:20px;color:#fff">10</div>
<div class="t row" style="right:885.5px;top:136.5px;height:20px;line-height:20px;color:#fff">2012</div>
<div class="t row" style="left:1682px;top:136.5px;height:20px;line-height:20px;color:#fff">Rock</div>
<div class="t row" style="right:588.5px;top:136.5px;height:20px;line-height:20px;color:#fff">03:54</div>
<svg class="i" style="left:1985.5px;top:137.5px" width="14" height="18" viewBox="0 0 14 18"><rect x="0" y="0" width="14" height="18" rx="2.5" fill="#dcdcdc"/><circle cx="7" cy="7.700" r="2.750" fill="none" stroke="#1e1e1e" stroke-width="2.300"/><path d="M3.600 7.200 L5.400 6.600 M8.600 8.800 L10.400 8.200" stroke="#dcdcdc" stroke-width="0.900"/></svg>
<div class="t row" style="left:2040px;top:136.5px;height:20px;line-height:20px;width:99px;overflow:hidden;font-size:13.100px;color:#fff">10. Neverne B...</div>
<div class="t row" style="left:493px;top:163.5px;height:20px;line-height:20px;color:#fff">2</div>
<div class="t row" style="right:1927px;top:163.5px;height:20px;line-height:20px;color:#fff">-3.6 dB</div>
<div class="t row" style="left:640px;top:163.5px;height:20px;line-height:20px;color:#fff">Angel</div>
<div class="t row" style="left:1080px;top:163.5px;height:20px;line-height:20px;color:#fff">Shaggy Feat Rayvon</div>
<div class="t row" style="left:1361px;top:163.5px;height:20px;line-height:20px;color:#fff"></div>
<div class="t row" style="right:942px;top:163.5px;height:20px;line-height:20px;color:#fff"></div>
<div class="t row" style="right:885.5px;top:163.5px;height:20px;line-height:20px;color:#fff">2001</div>
<div class="t row" style="left:1682px;top:163.5px;height:20px;line-height:20px;color:#fff">Reggae</div>
<svg class="i" style="left:1794.50px;top:164.80px;color:#fff;" width="17.00" height="17.00" viewBox="0 0 24 24" fill="currentColor"><path d="M12 17.27L18.18 21l-1.64-7.03L22 9.24l-7.19-.61L12 2 9.19 8.63 2 9.24l5.46 4.73L5.82 21z" /></svg>
<svg class="i" style="left:1812.40px;top:164.80px;color:#fff;" width="17.00" height="17.00" viewBox="0 0 24 24" fill="currentColor"><path d="M12 17.27L18.18 21l-1.64-7.03L22 9.24l-7.19-.61L12 2 9.19 8.63 2 9.24l5.46 4.73L5.82 21z" /></svg>
<svg class="i" style="left:1830.30px;top:164.80px;color:#585858;" width="17.00" height="17.00" viewBox="0 0 24 24" fill="currentColor"><path d="M12 17.27L18.18 21l-1.64-7.03L22 9.24l-7.19-.61L12 2 9.19 8.63 2 9.24l5.46 4.73L5.82 21z" /></svg>
<svg class="i" style="left:1830.30px;top:164.80px;color:#fff;overflow:hidden" width="8.5" height="17" viewBox="0 0 12 24" fill="currentColor"><path d="M12 17.27L18.18 21l-1.64-7.03L22 9.24l-7.19-.61L12 2 9.19 8.63 2 9.24l5.46 4.73L5.82 21z" /></svg>
<svg class="i" style="left:1848.20px;top:164.80px;color:#585858;" width="17.00" height="17.00" viewBox="0 0 24 24" fill="currentColor"><path d="M12 17.27L18.18 21l-1.64-7.03L22 9.24l-7.19-.61L12 2 9.19 8.63 2 9.24l5.46 4.73L5.82 21z" /></svg>
<svg class="i" style="left:1866.10px;top:164.80px;color:#585858;" width="17.00" height="17.00" viewBox="0 0 24 24" fill="currentColor"><path d="M12 17.27L18.18 21l-1.64-7.03L22 9.24l-7.19-.61L12 2 9.19 8.63 2 9.24l5.46 4.73L5.82 21z" /></svg>
<div class="t row" style="right:588.5px;top:163.5px;height:20px;line-height:20px;color:#fff">03:57</div>
<svg class="i" style="left:1985.5px;top:164.5px" width="14" height="18" viewBox="0 0 14 18"><rect x="0" y="0" width="14" height="18" rx="2.5" fill="#dcdcdc"/><circle cx="7" cy="7.700" r="2.750" fill="none" stroke="#1e1e1e" stroke-width="2.300"/><path d="M3.600 7.200 L5.400 6.600 M8.600 8.800 L10.400 8.200" stroke="#dcdcdc" stroke-width="0.900"/></svg>
<div class="t row" style="left:2040px;top:163.5px;height:20px;line-height:20px;width:99px;overflow:hidden;font-size:13.100px;color:#fff">Shaggy Feat R...</div>
<div class="t row" style="left:493px;top:190.5px;height:20px;line-height:20px;color:#fff">3</div>
<div class="t row" style="right:1927px;top:190.5px;height:20px;line-height:20px;color:#fff">-0.9 dB</div>
<div class="t row" style="left:640px;top:190.5px;height:20px;line-height:20px;color:#fff">From sarah with love</div>
<div class="t row" style="left:1080px;top:190.5px;height:20px;line-height:20px;color:#fff">Sarah Connor</div>
<div class="t row" style="left:1361px;top:190.5px;height:20px;line-height:20px;color:#fff">200 Best Worlds Ballads</div>
<div class="t row" style="right:942px;top:190.5px;height:20px;line-height:20px;color:#fff">071</div>
<div class="t row" style="right:885.5px;top:190.5px;height:20px;line-height:20px;color:#fff"></div>
<div class="t row" style="left:1682px;top:190.5px;height:20px;line-height:20px;color:#fff">Power Ballad</div>
<div class="t row" style="right:588.5px;top:190.5px;height:20px;line-height:20px;color:#fff">04:56</div>
<svg class="i" style="left:1985.5px;top:191.5px" width="14" height="18" viewBox="0 0 14 18"><rect x="0" y="0" width="14" height="18" rx="2.5" fill="#dcdcdc"/><circle cx="7" cy="7.700" r="2.750" fill="none" stroke="#1e1e1e" stroke-width="2.300"/><path d="M3.600 7.200 L5.400 6.600 M8.600 8.800 L10.400 8.200" stroke="#dcdcdc" stroke-width="0.900"/></svg>
<div class="t row" style="left:2040px;top:190.5px;height:20px;line-height:20px;width:99px;overflow:hidden;font-size:13.100px;color:#fff">071 Sarah Con...</div>
<div class="t row" style="left:493px;top:217.5px;height:20px;line-height:20px;color:#fff">4</div>
<div class="t row" style="right:1927px;top:217.5px;height:20px;line-height:20px;color:#fff">-2.9 dB</div>
<div class="t row" style="left:640px;top:217.5px;height:20px;line-height:20px;color:#fff">Lovers in the Sand '98</div>
<div class="t row" style="left:1080px;top:217.5px;height:20px;line-height:20px;color:#fff">Bad Boys Blue</div>
<div class="t row" style="left:1361px;top:217.5px;height:20px;line-height:20px;color:#fff">Back</div>
<div class="t row" style="right:942px;top:217.5px;height:20px;line-height:20px;color:#fff">9</div>
<div class="t row" style="right:885.5px;top:217.5px;height:20px;line-height:20px;color:#fff">1998</div>
<div class="t row" style="left:1682px;top:217.5px;height:20px;line-height:20px;color:#fff">Dance</div>
<svg class="i" style="left:1794.50px;top:218.80px;color:#fff;" width="17.00" height="17.00" viewBox="0 0 24 24" fill="currentColor"><path d="M12 17.27L18.18 21l-1.64-7.03L22 9.24l-7.19-.61L12 2 9.19 8.63 2 9.24l5.46 4.73L5.82 21z" /></svg>
<svg class="i" style="left:1812.40px;top:218.80px;color:#fff;" width="17.00" height="17.00" viewBox="0 0 24 24" fill="currentColor"><path d="M12 17.27L18.18 21l-1.64-7.03L22 9.24l-7.19-.61L12 2 9.19 8.63 2 9.24l5.46 4.73L5.82 21z" /></svg>
<svg class="i" style="left:1830.30px;top:218.80px;color:#fff;" width="17.00" height="17.00" viewBox="0 0 24 24" fill="currentColor"><path d="M12 17.27L18.18 21l-1.64-7.03L22 9.24l-7.19-.61L12 2 9.19 8.63 2 9.24l5.46 4.73L5.82 21z" /></svg>
<svg class="i" style="left:1848.20px;top:218.80px;color:#fff;" width="17.00" height="17.00" viewBox="0 0 24 24" fill="currentColor"><path d="M12 17.27L18.18 21l-1.64-7.03L22 9.24l-7.19-.61L12 2 9.19 8.63 2 9.24l5.46 4.73L5.82 21z" /></svg>
<svg class="i" style="left:1866.10px;top:218.80px;color:#fff;" width="17.00" height="17.00" viewBox="0 0 24 24" fill="currentColor"><path d="M12 17.27L18.18 21l-1.64-7.03L22 9.24l-7.19-.61L12 2 9.19 8.63 2 9.24l5.46 4.73L5.82 21z" /></svg>
<div class="t row" style="right:588.5px;top:217.5px;height:20px;line-height:20px;color:#fff">04:04</div>
<svg class="i" style="left:1985.5px;top:218.5px" width="14" height="18" viewBox="0 0 14 18"><rect x="0" y="0" width="14" height="18" rx="2.5" fill="#dcdcdc"/><circle cx="7" cy="7.700" r="2.750" fill="none" stroke="#1e1e1e" stroke-width="2.300"/><path d="M3.600 7.200 L5.400 6.600 M8.600 8.800 L10.400 8.200" stroke="#dcdcdc" stroke-width="0.900"/></svg>
<div class="t row" style="left:2040px;top:217.5px;height:20px;line-height:20px;width:99px;overflow:hidden;font-size:13.100px;color:#fff">Bad Boys Blue ...</div>
<div class="t row" style="left:493px;top:244.5px;height:20px;line-height:20px;color:#fff">5</div>
<div class="t row" style="right:1927px;top:244.5px;height:20px;line-height:20px;color:#fff">+2.9 dB</div>
<div class="t row" style="left:640px;top:244.5px;height:20px;line-height:20px;color:#fff">Lovers In The Sand</div>
<div class="t row" style="left:1080px;top:244.5px;height:20px;line-height:20px;color:#fff">Bad Boys Blue</div>
<div class="t row" style="left:1361px;top:244.5px;height:20px;line-height:20px;color:#fff">Italo Disco '80s CD 14</div>
<div class="t row" style="right:942px;top:244.5px;height:20px;line-height:20px;color:#fff">7</div>
<div class="t row" style="right:885.5px;top:244.5px;height:20px;line-height:20px;color:#fff"></div>
<div class="t row" style="left:1682px;top:244.5px;height:20px;line-height:20px;color:#fff"></div>
<svg class="i" style="left:1794.50px;top:245.80px;color:#fff;" width="17.00" height="17.00" viewBox="0 0 24 24" fill="currentColor"><path d="M12 17.27L18.18 21l-1.64-7.03L22 9.24l-7.19-.61L12 2 9.19 8.63 2 9.24l5.46 4.73L5.82 21z" /></svg>
<svg class="i" style="left:1812.40px;top:245.80px;color:#fff;" width="17.00" height="17.00" viewBox="0 0 24 24" fill="currentColor"><path d="M12 17.27L18.18 21l-1.64-7.03L22 9.24l-7.19-.61L12 2 9.19 8.63 2 9.24l5.46 4.73L5.82 21z" /></svg>
<svg class="i" style="left:1830.30px;top:245.80px;color:#fff;" width="17.00" height="17.00" viewBox="0 0 24 24" fill="currentColor"><path d="M12 17.27L18.18 21l-1.64-7.03L22 9.24l-7.19-.61L12 2 9.19 8.63 2 9.24l5.46 4.73L5.82 21z" /></svg>
<svg class="i" style="left:1848.20px;top:245.80px;color:#585858;" width="17.00" height="17.00" viewBox="0 0 24 24" fill="currentColor"><path d="M12 17.27L18.18 21l-1.64-7.03L22 9.24l-7.19-.61L12 2 9.19 8.63 2 9.24l5.46 4.73L5.82 21z" /></svg>
<svg class="i" style="left:1848.20px;top:245.80px;color:#fff;overflow:hidden" width="8.5" height="17" viewBox="0 0 12 24" fill="currentColor"><path d="M12 17.27L18.18 21l-1.64-7.03L22 9.24l-7.19-.61L12 2 9.19 8.63 2 9.24l5.46 4.73L5.82 21z" /></svg>
<svg class="i" style="left:1866.10px;top:245.80px;color:#585858;" width="17.00" height="17.00" viewBox="0 0 24 24" fill="currentColor"><path d="M12 17.27L18.18 21l-1.64-7.03L22 9.24l-7.19-.61L12 2 9.19 8.63 2 9.24l5.46 4.73L5.82 21z" /></svg>
<div class="t row" style="right:588.5px;top:244.5px;height:20px;line-height:20px;color:#fff">02:40</div>
<svg class="i" style="left:1985.5px;top:245.5px" width="14" height="18" viewBox="0 0 14 18"><rect x="0" y="0" width="14" height="18" rx="2.5" fill="#dcdcdc"/><circle cx="7" cy="7.700" r="2.750" fill="none" stroke="#1e1e1e" stroke-width="2.300"/><path d="M3.600 7.200 L5.400 6.600 M8.600 8.800 L10.400 8.200" stroke="#dcdcdc" stroke-width="0.900"/></svg>
<div class="t row" style="left:2040px;top:244.5px;height:20px;line-height:20px;width:99px;overflow:hidden;font-size:13.100px;color:#fff">Bad Boys Blue ...</div>
<div class="t row" style="left:493px;top:271.5px;height:20px;line-height:20px;color:#fff">6</div>
<div class="t row" style="right:1927px;top:271.5px;height:20px;line-height:20px;color:#fff">+4.3 dB</div>
<div class="t row" style="left:640px;top:271.5px;height:20px;line-height:20px;color:#fff">Omen III</div>
<div class="t row" style="left:1080px;top:271.5px;height:20px;line-height:20px;color:#fff">Magic Affair</div>
<div class="t row" style="left:1361px;top:271.5px;height:20px;line-height:20px;color:#fff">BRAVO Hits 06 CD 1</div>
<div class="t row" style="right:942px;top:271.5px;height:20px;line-height:20px;color:#fff">10</div>
<div class="t row" style="right:885.5px;top:271.5px;height:20px;line-height:20px;color:#fff">1994</div>
<div class="t row" style="left:1682px;top:271.5px;height:20px;line-height:20px;color:#fff">Pop</div>
<div class="t row" style="right:588.5px;top:271.5px;height:20px;line-height:20px;color:#fff">03:56</div>
<svg class="i" style="left:1985.5px;top:272.5px" width="14" height="18" viewBox="0 0 14 18"><rect x="0" y="0" width="14" height="18" rx="2.5" fill="#dcdcdc"/><circle cx="7" cy="7.700" r="2.750" fill="none" stroke="#1e1e1e" stroke-width="2.300"/><path d="M3.600 7.200 L5.400 6.600 M8.600 8.800 L10.400 8.200" stroke="#dcdcdc" stroke-width="0.900"/></svg>
<div class="t row" style="left:2040px;top:271.5px;height:20px;line-height:20px;width:99px;overflow:hidden;font-size:13.100px;color:#fff">10. Magic Affai...</div>
<div class="t row" style="left:493px;top:298.5px;height:20px;line-height:20px;color:#fff">7</div>
<div class="t row" style="right:1927px;top:298.5px;height:20px;line-height:20px;color:#fff">+1.8 dB</div>
<div class="t row" style="left:640px;top:298.5px;height:20px;line-height:20px;color:#fff">Fly away</div>
<div class="t row" style="left:1080px;top:298.5px;height:20px;line-height:20px;color:#fff">Lutricia McNeal</div>
<div class="t row" style="left:1361px;top:298.5px;height:20px;line-height:20px;color:#fff">100% Dance Hits vol. 7</div>
<div class="t row" style="right:942px;top:298.5px;height:20px;line-height:20px;color:#fff"></div>
<div class="t row" style="right:885.5px;top:298.5px;height:20px;line-height:20px;color:#fff">2000</div>
<div class="t row" style="left:1682px;top:298.5px;height:20px;line-height:20px;color:#fff">Dance</div>
<svg class="i" style="left:1794.50px;top:299.80px;color:#fff;" width="17.00" height="17.00" viewBox="0 0 24 24" fill="currentColor"><path d="M12 17.27L18.18 21l-1.64-7.03L22 9.24l-7.19-.61L12 2 9.19 8.63 2 9.24l5.46 4.73L5.82 21z" /></svg>
<svg class="i" style="left:1812.40px;top:299.80px;color:#fff;" width="17.00" height="17.00" viewBox="0 0 24 24" fill="currentColor"><path d="M12 17.27L18.18 21l-1.64-7.03L22 9.24l-7.19-.61L12 2 9.19 8.63 2 9.24l5.46 4.73L5.82 21z" /></svg>
<svg class="i" style="left:1830.30px;top:299.80px;color:#585858;" width="17.00" height="17.00" viewBox="0 0 24 24" fill="currentColor"><path d="M12 17.27L18.18 21l-1.64-7.03L22 9.24l-7.19-.61L12 2 9.19 8.63 2 9.24l5.46 4.73L5.82 21z" /></svg>
<svg class="i" style="left:1830.30px;top:299.80px;color:#fff;overflow:hidden" width="8.5" height="17" viewBox="0 0 12 24" fill="currentColor"><path d="M12 17.27L18.18 21l-1.64-7.03L22 9.24l-7.19-.61L12 2 9.19 8.63 2 9.24l5.46 4.73L5.82 21z" /></svg>
<svg class="i" style="left:1848.20px;top:299.80px;color:#585858;" width="17.00" height="17.00" viewBox="0 0 24 24" fill="currentColor"><path d="M12 17.27L18.18 21l-1.64-7.03L22 9.24l-7.19-.61L12 2 9.19 8.63 2 9.24l5.46 4.73L5.82 21z" /></svg>
<svg class="i" style="left:1866.10px;top:299.80px;color:#585858;" width="17.00" height="17.00" viewBox="0 0 24 24" fill="currentColor"><path d="M12 17.27L18.18 21l-1.64-7.03L22 9.24l-7.19-.61L12 2 9.19 8.63 2 9.24l5.46 4.73L5.82 21z" /></svg>
<div class="t row" style="right:588.5px;top:298.5px;height:20px;line-height:20px;color:#fff">03:49</div>
<svg class="i" style="left:1985.5px;top:299.5px" width="14" height="18" viewBox="0 0 14 18"><rect x="0" y="0" width="14" height="18" rx="2.5" fill="#dcdcdc"/><circle cx="7" cy="7.700" r="2.750" fill="none" stroke="#1e1e1e" stroke-width="2.300"/><path d="M3.600 7.200 L5.400 6.600 M8.600 8.800 L10.400 8.200" stroke="#dcdcdc" stroke-width="0.900"/></svg>
<div class="t row" style="left:2040px;top:298.5px;height:20px;line-height:20px;width:99px;overflow:hidden;font-size:13.100px;color:#fff">Lutricia McNe...</div>
<div class="t row" style="left:493px;top:325.5px;height:20px;line-height:20px;color:#fff">8</div>
<div class="t row" style="right:1927px;top:325.5px;height:20px;line-height:20px;color:#fff">+0.0 dB</div>
<div class="t row" style="left:640px;top:325.5px;height:20px;line-height:20px;color:#fff">Beautiful day</div>
<div class="t row" style="left:1080px;top:325.5px;height:20px;line-height:20px;color:#fff">U2</div>
<div class="t row" style="left:1361px;top:325.5px;height:20px;line-height:20px;color:#fff">2000's Top One's Vol. 2</div>
<div class="t row" style="right:942px;top:325.5px;height:20px;line-height:20px;color:#fff">14</div>
<div class="t row" style="right:885.5px;top:325.5px;height:20px;line-height:20px;color:#fff"></div>
<div class="t row" style="left:1682px;top:325.5px;height:20px;line-height:20px;color:#fff"></div>
<svg class="i" style="left:1794.50px;top:326.80px;color:#fff;" width="17.00" height="17.00" viewBox="0 0 24 24" fill="currentColor"><path d="M12 17.27L18.18 21l-1.64-7.03L22 9.24l-7.19-.61L12 2 9.19 8.63 2 9.24l5.46 4.73L5.82 21z" /></svg>
<svg class="i" style="left:1812.40px;top:326.80px;color:#fff;" width="17.00" height="17.00" viewBox="0 0 24 24" fill="currentColor"><path d="M12 17.27L18.18 21l-1.64-7.03L22 9.24l-7.19-.61L12 2 9.19 8.63 2 9.24l5.46 4.73L5.82 21z" /></svg>
<svg class="i" style="left:1830.30px;top:326.80px;color:#fff;" width="17.00" height="17.00" viewBox="0 0 24 24" fill="currentColor"><path d="M12 17.27L18.18 21l-1.64-7.03L22 9.24l-7.19-.61L12 2 9.19 8.63 2 9.24l5.46 4.73L5.82 21z" /></svg>
<svg class="i" style="left:1848.20px;top:326.80px;color:#fff;" width="17.00" height="17.00" viewBox="0 0 24 24" fill="currentColor"><path d="M12 17.27L18.18 21l-1.64-7.03L22 9.24l-7.19-.61L12 2 9.19 8.63 2 9.24l5.46 4.73L5.82 21z" /></svg>
<svg class="i" style="left:1866.10px;top:326.80px;color:#fff;" width="17.00" height="17.00" viewBox="0 0 24 24" fill="currentColor"><path d="M12 17.27L18.18 21l-1.64-7.03L22 9.24l-7.19-.61L12 2 9.19 8.63 2 9.24l5.46 4.73L5.82 21z" /></svg>
<div class="t row" style="right:588.5px;top:325.5px;height:20px;line-height:20px;color:#fff">04:11</div>
<svg class="i" style="left:1985.5px;top:326.5px" width="14" height="18" viewBox="0 0 14 18"><rect x="0" y="0" width="14" height="18" rx="2.5" fill="#dcdcdc"/><circle cx="7" cy="7.700" r="2.750" fill="none" stroke="#1e1e1e" stroke-width="2.300"/><path d="M3.600 7.200 L5.400 6.600 M8.600 8.800 L10.400 8.200" stroke="#dcdcdc" stroke-width="0.900"/></svg>
<div class="t row" style="left:2040px;top:325.5px;height:20px;line-height:20px;width:99px;overflow:hidden;font-size:13.100px;color:#fff">U2 - Beautiful ...</div>
<div class="t row" style="left:493px;top:352.5px;height:20px;line-height:20px;color:#fff">9</div>
<div class="t row" style="right:1927px;top:352.5px;height:20px;line-height:20px;color:#fff">-2.0 dB</div>
<div class="t row" style="left:640px;top:352.5px;height:20px;line-height:20px;color:#fff">Jojo Action (Radio Edit)</div>
<div class="t row" style="left:1080px;top:352.5px;height:20px;line-height:20px;color:#fff">Mr. President</div>
<div class="t row" style="left:1361px;top:352.5px;height:20px;line-height:20px;color:#fff">DJ Dance Summer Edition ' 97 ...</div>
<div class="t row" style="right:942px;top:352.5px;height:20px;line-height:20px;color:#fff">1</div>
<div class="t row" style="right:885.5px;top:352.5px;height:20px;line-height:20px;color:#fff">1997</div>
<div class="t row" style="left:1682px;top:352.5px;height:20px;line-height:20px;color:#fff">Dance</div>
<div class="t row" style="right:588.5px;top:352.5px;height:20px;line-height:20px;color:#fff">03:54</div>
<svg class="i" style="left:1985.5px;top:353.5px" width="14" height="18" viewBox="0 0 14 18"><rect x="0" y="0" width="14" height="18" rx="2.5" fill="#dcdcdc"/><circle cx="7" cy="7.700" r="2.750" fill="none" stroke="#1e1e1e" stroke-width="2.300"/><path d="M3.600 7.200 L5.400 6.600 M8.600 8.800 L10.400 8.200" stroke="#dcdcdc" stroke-width="0.900"/></svg>
<div class="t row" style="left:2040px;top:352.5px;height:20px;line-height:20px;width:99px;overflow:hidden;font-size:13.100px;color:#fff">01. Mr. Presid...</div>
<div class="t row" style="left:493px;top:379.5px;height:20px;line-height:20px;color:#fff">10</div>
<div class="t row" style="right:1927px;top:379.5px;height:20px;line-height:20px;color:#fff">-1.0 dB</div>
<div class="t row" style="left:640px;top:379.5px;height:20px;line-height:20px;color:#fff">Ecuador (Original Edit)</div>
<div class="t row" style="left:1080px;top:379.5px;height:20px;line-height:20px;color:#fff">Sash! Feat. Rodrigez</div>
<div class="t row" style="left:1361px;top:379.5px;height:20px;line-height:20px;color:#fff">DJ Dance Summer Edition ' 97 ...</div>
<div class="t row" style="right:942px;top:379.5px;height:20px;line-height:20px;color:#fff">2</div>
<div class="t row" style="right:885.5px;top:379.5px;height:20px;line-height:20px;color:#fff">1997</div>
<div class="t row" style="left:1682px;top:379.5px;height:20px;line-height:20px;color:#fff">Dance</div>
<div class="t row" style="right:588.5px;top:379.5px;height:20px;line-height:20px;color:#fff">03:35</div>
<svg class="i" style="left:1985.5px;top:380.5px" width="14" height="18" viewBox="0 0 14 18"><rect x="0" y="0" width="14" height="18" rx="2.5" fill="#dcdcdc"/><circle cx="7" cy="7.700" r="2.750" fill="none" stroke="#1e1e1e" stroke-width="2.300"/><path d="M3.600 7.200 L5.400 6.600 M8.600 8.800 L10.400 8.200" stroke="#dcdcdc" stroke-width="0.900"/></svg>
<div class="t row" style="left:2040px;top:379.5px;height:20px;line-height:20px;width:99px;overflow:hidden;font-size:13.100px;color:#fff">02. Sash! Feat. ...</div>
<div class="t row" style="left:493px;top:406.5px;height:20px;line-height:20px;color:#fff">11</div>
<div class="t row" style="right:1927px;top:406.5px;height:20px;line-height:20px;color:#fff">-1.6 dB</div>
<div class="t row" style="left:640px;top:406.5px;height:20px;line-height:20px;color:#fff">Samba De Jeneiro (New Radio Edition)</div>
<div class="t row" style="left:1080px;top:406.5px;height:20px;line-height:20px;color:#fff">Carrilio</div>
<div class="t row" style="left:1361px;top:406.5px;height:20px;line-height:20px;color:#fff">DJ Dance Summer Edition ' 97 ...</div>
<div class="t row" style="right:942px;top:406.5px;height:20px;line-height:20px;color:#fff">3</div>
<div class="t row" style="right:885.5px;top:406.5px;height:20px;line-height:20px;color:#fff">1997</div>
<div class="t row" style="left:1682px;top:406.5px;height:20px;line-height:20px;color:#fff">Dance</div>
<div class="t row" style="right:588.5px;top:406.5px;height:20px;line-height:20px;color:#fff">02:51</div>
<svg class="i" style="left:1985.5px;top:407.5px" width="14" height="18" viewBox="0 0 14 18"><rect x="0" y="0" width="14" height="18" rx="2.5" fill="#dcdcdc"/><circle cx="7" cy="7.700" r="2.750" fill="none" stroke="#1e1e1e" stroke-width="2.300"/><path d="M3.600 7.200 L5.400 6.600 M8.600 8.800 L10.400 8.200" stroke="#dcdcdc" stroke-width="0.900"/></svg>
<div class="t row" style="left:2040px;top:406.5px;height:20px;line-height:20px;width:99px;overflow:hidden;font-size:13.100px;color:#fff">03. Carrilio - S...</div>
<div class="t row" style="left:493px;top:433.5px;height:20px;line-height:20px;color:#fff">12</div>
<div class="t row" style="right:1927px;top:433.5px;height:20px;line-height:20px;color:#fff">-1.1 dB</div>
<div class="t row" style="left:640px;top:433.5px;height:20px;line-height:20px;color:#fff">Fun In The Sun (Radio - Video Holiday Mix)</div>
<div class="t row" style="left:1080px;top:433.5px;height:20px;line-height:20px;color:#fff">Fun Cruiser</div>
<div class="t row" style="left:1361px;top:433.5px;height:20px;line-height:20px;color:#fff">DJ Dance Summer Edition ' 97 ...</div>
<div class="t row" style="right:942px;top:433.5px;height:20px;line-height:20px;color:#fff">4</div>
<div class="t row" style="right:885.5px;top:433.5px;height:20px;line-height:20px;color:#fff">1997</div>
<div class="t row" style="left:1682px;top:433.5px;height:20px;line-height:20px;color:#fff">Dance</div>
<div class="t row" style="right:588.5px;top:433.5px;height:20px;line-height:20px;color:#fff">03:40</div>
<svg class="i" style="left:1985.5px;top:434.5px" width="14" height="18" viewBox="0 0 14 18"><rect x="0" y="0" width="14" height="18" rx="2.5" fill="#dcdcdc"/><circle cx="7" cy="7.700" r="2.750" fill="none" stroke="#1e1e1e" stroke-width="2.300"/><path d="M3.600 7.200 L5.400 6.600 M8.600 8.800 L10.400 8.200" stroke="#dcdcdc" stroke-width="0.900"/></svg>
<div class="t row" style="left:2040px;top:433.5px;height:20px;line-height:20px;width:99px;overflow:hidden;font-size:13.100px;color:#fff">04. Fun Cruise...</div>
<div class="t row" style="left:493px;top:460.5px;height:20px;line-height:20px;color:#fff">13</div>
<div class="t row" style="right:1927px;top:460.5px;height:20px;line-height:20px;color:#fff">+0.0 dB</div>
<div class="t row" style="left:640px;top:460.5px;height:20px;line-height:20px;color:#fff">Fall In Love With You (Radio Mix)</div>
<div class="t row" style="left:1080px;top:460.5px;height:20px;line-height:20px;color:#fff">Activate</div>
<div class="t row" style="left:1361px;top:460.5px;height:20px;line-height:20px;color:#fff">DJ Dance Summer Edition ' 97 ...</div>
<div class="t row" style="right:942px;top:460.5px;height:20px;line-height:20px;color:#fff">5</div>
<div class="t row" style="right:885.5px;top:460.5px;height:20px;line-height:20px;color:#fff">1997</div>
<div class="t row" style="left:1682px;top:460.5px;height:20px;line-height:20px;color:#fff">Dance</div>
<div class="t row" style="right:588.5px;top:460.5px;height:20px;line-height:20px;color:#fff">03:29</div>
<svg class="i" style="left:1985.5px;top:461.5px" width="14" height="18" viewBox="0 0 14 18"><rect x="0" y="0" width="14" height="18" rx="2.5" fill="#dcdcdc"/><circle cx="7" cy="7.700" r="2.750" fill="none" stroke="#1e1e1e" stroke-width="2.300"/><path d="M3.600 7.200 L5.400 6.600 M8.600 8.800 L10.400 8.200" stroke="#dcdcdc" stroke-width="0.900"/></svg>
<div class="t row" style="left:2040px;top:460.5px;height:20px;line-height:20px;width:99px;overflow:hidden;font-size:13.100px;color:#fff">05. Activate - F...</div>
<div class="t row" style="left:493px;top:487.5px;height:20px;line-height:20px;color:#fff">14</div>
<div class="t row" style="right:1927px;top:487.5px;height:20px;line-height:20px;color:#fff">-2.5 dB</div>
<div class="t row" style="left:640px;top:487.5px;height:20px;line-height:20px;color:#fff">Piece Of Mine (Radio Version)</div>
<div class="t row" style="left:1080px;top:487.5px;height:20px;line-height:20px;color:#fff">DJ the Crow</div>
<div class="t row" style="left:1361px;top:487.5px;height:20px;line-height:20px;color:#fff">DJ Dance Summer Edition ' 97 ...</div>
<div class="t row" style="right:942px;top:487.5px;height:20px;line-height:20px;color:#fff">6</div>
<div class="t row" style="right:885.5px;top:487.5px;height:20px;line-height:20px;color:#fff">1997</div>
<div class="t row" style="left:1682px;top:487.5px;height:20px;line-height:20px;color:#fff">Dance</div>
<div class="t row" style="right:588.5px;top:487.5px;height:20px;line-height:20px;color:#fff">03:32</div>
<svg class="i" style="left:1985.5px;top:488.5px" width="14" height="18" viewBox="0 0 14 18"><rect x="0" y="0" width="14" height="18" rx="2.5" fill="#dcdcdc"/><circle cx="7" cy="7.700" r="2.750" fill="none" stroke="#1e1e1e" stroke-width="2.300"/><path d="M3.600 7.200 L5.400 6.600 M8.600 8.800 L10.400 8.200" stroke="#dcdcdc" stroke-width="0.900"/></svg>
<div class="t row" style="left:2040px;top:487.5px;height:20px;line-height:20px;width:99px;overflow:hidden;font-size:13.100px;color:#fff">06. DJ the Cro...</div>
<div class="t row" style="left:493px;top:514.5px;height:20px;line-height:20px;color:#fff">15</div>
<div class="t row" style="right:1927px;top:514.5px;height:20px;line-height:20px;color:#fff">+0.0 dB</div>
<div class="t row" style="left:640px;top:514.5px;height:20px;line-height:20px;color:#fff">I Wanna (Be With You Tonight) (Original 7" Edit)</div>
<div class="t row" style="left:1080px;top:514.5px;height:20px;line-height:20px;color:#fff">Johny Right</div>
<div class="t row" style="left:1361px;top:514.5px;height:20px;line-height:20px;color:#fff">DJ Dance Summer Edition ' 97 ...</div>
<div class="t row" style="right:942px;top:514.5px;height:20px;line-height:20px;color:#fff">7</div>
<div class="t row" style="right:885.5px;top:514.5px;height:20px;line-height:20px;color:#fff">1997</div>
<div class="t row" style="left:1682px;top:514.5px;height:20px;line-height:20px;color:#fff">Dance</div>
<div class="t row" style="right:588.5px;top:514.5px;height:20px;line-height:20px;color:#fff">03:25</div>
<svg class="i" style="left:1985.5px;top:515.5px" width="14" height="18" viewBox="0 0 14 18"><rect x="0" y="0" width="14" height="18" rx="2.5" fill="#dcdcdc"/><circle cx="7" cy="7.700" r="2.750" fill="none" stroke="#1e1e1e" stroke-width="2.300"/><path d="M3.600 7.200 L5.400 6.600 M8.600 8.800 L10.400 8.200" stroke="#dcdcdc" stroke-width="0.900"/></svg>
<div class="t row" style="left:2040px;top:514.5px;height:20px;line-height:20px;width:99px;overflow:hidden;font-size:13.100px;color:#fff">07. Johny Right...</div>
<div class="t row" style="left:493px;top:541.5px;height:20px;line-height:20px;color:#fff">16</div>
<div class="t row" style="right:1927px;top:541.5px;height:20px;line-height:20px;color:#fff">-2.6 dB</div>
<div class="t row" style="left:640px;top:541.5px;height:20px;line-height:20px;color:#fff">Teardrops From Heaven (Fm Video Mix)</div>
<div class="t row" style="left:1080px;top:541.5px;height:20px;line-height:20px;color:#fff">Zhivago</div>
<div class="t row" style="left:1361px;top:541.5px;height:20px;line-height:20px;color:#fff">DJ Dance Summer Edition ' 97 ...</div>
<div class="t row" style="right:942px;top:541.5px;height:20px;line-height:20px;color:#fff">8</div>
<div class="t row" style="right:885.5px;top:541.5px;height:20px;line-height:20px;color:#fff">1997</div>
<div class="t row" style="left:1682px;top:541.5px;height:20px;line-height:20px;color:#fff">Dance</div>
<div class="t row" style="right:588.5px;top:541.5px;height:20px;line-height:20px;color:#fff">03:51</div>
<svg class="i" style="left:1985.5px;top:542.5px" width="14" height="18" viewBox="0 0 14 18"><rect x="0" y="0" width="14" height="18" rx="2.5" fill="#dcdcdc"/><circle cx="7" cy="7.700" r="2.750" fill="none" stroke="#1e1e1e" stroke-width="2.300"/><path d="M3.600 7.200 L5.400 6.600 M8.600 8.800 L10.400 8.200" stroke="#dcdcdc" stroke-width="0.900"/></svg>
<div class="t row" style="left:2040px;top:541.5px;height:20px;line-height:20px;width:99px;overflow:hidden;font-size:13.100px;color:#fff">08. Zhivago - T...</div>
<div class="t row" style="left:493px;top:568.5px;height:20px;line-height:20px;color:#fff">17</div>
<div class="t row" style="right:1927px;top:568.5px;height:20px;line-height:20px;color:#fff">+4.3 dB</div>
<div class="t row" style="left:640px;top:568.5px;height:20px;line-height:20px;color:#fff">Sunstroke (Disco Citizens Radio Edit)</div>
<div class="t row" style="left:1080px;top:568.5px;height:20px;line-height:20px;color:#fff">Chicane</div>
<div class="t row" style="left:1361px;top:568.5px;height:20px;line-height:20px;color:#fff">DJ Dance Summer Edition ' 97 ...</div>
<div class="t row" style="right:942px;top:568.5px;height:20px;line-height:20px;color:#fff">9</div>
<div class="t row" style="right:885.5px;top:568.5px;height:20px;line-height:20px;color:#fff">1997</div>
<div class="t row" style="left:1682px;top:568.5px;height:20px;line-height:20px;color:#fff">Dance</div>
<div class="t row" style="right:588.5px;top:568.5px;height:20px;line-height:20px;color:#fff">04:03</div>
<svg class="i" style="left:1985.5px;top:569.5px" width="14" height="18" viewBox="0 0 14 18"><rect x="0" y="0" width="14" height="18" rx="2.5" fill="#dcdcdc"/><circle cx="7" cy="7.700" r="2.750" fill="none" stroke="#1e1e1e" stroke-width="2.300"/><path d="M3.600 7.200 L5.400 6.600 M8.600 8.800 L10.400 8.200" stroke="#dcdcdc" stroke-width="0.900"/></svg>
<div class="t row" style="left:2040px;top:568.5px;height:20px;line-height:20px;width:99px;overflow:hidden;font-size:13.100px;color:#fff">09. Chicane - S...</div>
<div class="t row" style="left:493px;top:588.5px;height:20px;line-height:20px;color:#fff">18</div>
<div class="t row" style="right:1927px;top:588.5px;height:20px;line-height:20px;color:#fff">-0.5 dB</div>
<div class="t row" style="left:640px;top:588.5px;height:20px;line-height:20px;color:#fff">Touch The Fire! (Power Radio Mix)</div>
<div class="t row" style="left:1080px;top:588.5px;height:20px;line-height:20px;color:#fff">The Boom Beat</div>
<div class="t row" style="left:1361px;top:588.5px;height:20px;line-height:20px;color:#fff">DJ Dance Summer Edition ' 97 ...</div>
<div class="t row" style="right:942px;top:588.5px;height:20px;line-height:20px;color:#fff">10</div>
<div class="t row" style="right:885.5px;top:588.5px;height:20px;line-height:20px;color:#fff">1997</div>
<div class="t row" style="left:1682px;top:588.5px;height:20px;line-height:20px;color:#fff">Dance</div>
<div class="t row" style="right:588.5px;top:588.5px;height:20px;line-height:20px;color:#fff">04:12</div>
<svg class="i" style="left:1985.5px;top:589.5px" width="14" height="18" viewBox="0 0 14 18"><rect x="0" y="0" width="14" height="18" rx="2.5" fill="#dcdcdc"/><circle cx="7" cy="7.700" r="2.750" fill="none" stroke="#1e1e1e" stroke-width="2.300"/><path d="M3.600 7.200 L5.400 6.600 M8.600 8.800 L10.400 8.200" stroke="#dcdcdc" stroke-width="0.900"/></svg>
<div class="t row" style="left:2040px;top:588.5px;height:20px;line-height:20px;width:99px;overflow:hidden;font-size:13.100px;color:#fff">10. The Boom ...</div>
<div class="t row" style="left:493px;top:630.5px;height:20px;line-height:20px;color:#fff">19</div>
<div class="t row" style="right:1927px;top:630.5px;height:20px;line-height:20px;color:#fff">+1.7 dB</div>
<div class="t row" style="left:640px;top:630.5px;height:20px;line-height:20px;color:#fff">I'll Be Waiting For You (Summer Mix)</div>
<div class="t row" style="left:1080px;top:630.5px;height:20px;line-height:20px;color:#fff">2 For Good</div>
<div class="t row" style="left:1361px;top:630.5px;height:20px;line-height:20px;color:#fff">DJ Dance Summer Edition ' 97 ...</div>
<div class="t row" style="right:942px;top:630.5px;height:20px;line-height:20px;color:#fff">11</div>
<div class="t row" style="right:885.5px;top:630.5px;height:20px;line-height:20px;color:#fff">1997</div>
<div class="t row" style="left:1682px;top:630.5px;height:20px;line-height:20px;color:#fff">Dance</div>
<div class="t row" style="right:588.5px;top:630.5px;height:20px;line-height:20px;color:#fff">05:38</div>
<svg class="i" style="left:1985.5px;top:631.5px" width="14" height="18" viewBox="0 0 14 18"><rect x="0" y="0" width="14" height="18" rx="2.5" fill="#dcdcdc"/><circle cx="7" cy="7.700" r="2.750" fill="none" stroke="#1e1e1e" stroke-width="2.300"/><path d="M3.600 7.200 L5.400 6.600 M8.600 8.800 L10.400 8.200" stroke="#dcdcdc" stroke-width="0.900"/></svg>
<div class="t row" style="left:2040px;top:630.5px;height:20px;line-height:20px;width:99px;overflow:hidden;font-size:13.100px;color:#fff">11. 2 For Good...</div>
<div class="t row act" style="left:493px;top:649.5px;height:20px;line-height:20px;color:#4a9fea">20</div>
<div class="t row act" style="right:1927px;top:649.5px;height:20px;line-height:20px;color:#4a9fea">-2.8 dB</div>
<div class="t row act" style="left:640px;top:649.5px;height:20px;line-height:20px;color:#4a9fea">Girl (I Need Your Love) (Dj Experience Us Mix)</div>
<div class="t row act" style="left:1080px;top:649.5px;height:20px;line-height:20px;color:#4a9fea">Yell 4 You</div>
<div class="t row act" style="left:1361px;top:649.5px;height:20px;line-height:20px;color:#4a9fea">DJ Dance Summer Edition ' 9...</div>
<div class="t row act" style="right:942px;top:649.5px;height:20px;line-height:20px;color:#4a9fea">12</div>
<div class="t row act" style="right:885.5px;top:649.5px;height:20px;line-height:20px;color:#4a9fea">1997</div>
<div class="t row act" style="left:1682px;top:649.5px;height:20px;line-height:20px;color:#4a9fea">Dance</div>
<div class="t row act" style="right:588.5px;top:649.5px;height:20px;line-height:20px;color:#4a9fea">05:15</div>
<svg class="i" style="left:1985.5px;top:650.5px" width="14" height="18" viewBox="0 0 14 18"><rect x="0" y="0" width="14" height="18" rx="2.5" fill="#4a9fea"/><circle cx="7" cy="7.700" r="2.750" fill="none" stroke="#1e1e1e" stroke-width="2.300"/><path d="M3.600 7.200 L5.400 6.600 M8.600 8.800 L10.400 8.200" stroke="#4a9fea" stroke-width="0.900"/></svg>
<div class="t row act" style="left:2040px;top:649.5px;height:20px;line-height:20px;width:99px;overflow:hidden;font-size:13.100px;color:#4a9fea">12. Yell 4 You ...</div>
<div class="t row" style="left:493px;top:676.5px;height:20px;line-height:20px;color:#fff">21</div>
<div class="t row" style="right:1927px;top:676.5px;height:20px;line-height:20px;color:#fff">+0.5 dB</div>
<div class="t row" style="left:640px;top:676.5px;height:20px;line-height:20px;color:#fff">Long John Silver (Radio Edit)</div>
<div class="t row" style="left:1080px;top:676.5px;height:20px;line-height:20px;color:#fff">Loft</div>
<div class="t row" style="left:1361px;top:676.5px;height:20px;line-height:20px;color:#fff">DJ Dance Summer Edition ' 97 ...</div>
<div class="t row" style="right:942px;top:676.5px;height:20px;line-height:20px;color:#fff">13</div>
<div class="t row" style="right:885.5px;top:676.5px;height:20px;line-height:20px;color:#fff">1997</div>
<div class="t row" style="left:1682px;top:676.5px;height:20px;line-height:20px;color:#fff">Dance</div>
<div class="t row" style="right:588.5px;top:676.5px;height:20px;line-height:20px;color:#fff">04:05</div>
<svg class="i" style="left:1985.5px;top:677.5px" width="14" height="18" viewBox="0 0 14 18"><rect x="0" y="0" width="14" height="18" rx="2.5" fill="#dcdcdc"/><circle cx="7" cy="7.700" r="2.750" fill="none" stroke="#1e1e1e" stroke-width="2.300"/><path d="M3.600 7.200 L5.400 6.600 M8.600 8.800 L10.400 8.200" stroke="#dcdcdc" stroke-width="0.900"/></svg>
<div class="t row" style="left:2040px;top:676.5px;height:20px;line-height:20px;width:99px;overflow:hidden;font-size:13.100px;color:#fff">13. Loft - Long ...</div>
<div class="t row" style="left:493px;top:703.5px;height:20px;line-height:20px;color:#fff">22</div>
<div class="t row" style="right:1927px;top:703.5px;height:20px;line-height:20px;color:#fff">-2.4 dB</div>
<div class="t row" style="left:640px;top:703.5px;height:20px;line-height:20px;color:#fff">Stay The Night (Radio Version)</div>
<div class="t row" style="left:1080px;top:703.5px;height:20px;line-height:20px;color:#fff">Marcel Romanoff</div>
<div class="t row" style="left:1361px;top:703.5px;height:20px;line-height:20px;color:#fff">DJ Dance Summer Edition ' 97 ...</div>
<div class="t row" style="right:942px;top:703.5px;height:20px;line-height:20px;color:#fff">14</div>
<div class="t row" style="right:885.5px;top:703.5px;height:20px;line-height:20px;color:#fff">1997</div>
<div class="t row" style="left:1682px;top:703.5px;height:20px;line-height:20px;color:#fff">Dance</div>
<div class="t row" style="right:588.5px;top:703.5px;height:20px;line-height:20px;color:#fff">03:23</div>
<svg class="i" style="left:1985.5px;top:704.5px" width="14" height="18" viewBox="0 0 14 18"><rect x="0" y="0" width="14" height="18" rx="2.5" fill="#dcdcdc"/><circle cx="7" cy="7.700" r="2.750" fill="none" stroke="#1e1e1e" stroke-width="2.300"/><path d="M3.600 7.200 L5.400 6.600 M8.600 8.800 L10.400 8.200" stroke="#dcdcdc" stroke-width="0.900"/></svg>
<div class="t row" style="left:2040px;top:703.5px;height:20px;line-height:20px;width:99px;overflow:hidden;font-size:13.100px;color:#fff">14. Marcel Ro...</div>
<div class="t row" style="left:493px;top:730.5px;height:20px;line-height:20px;color:#fff">23</div>
<div class="t row" style="right:1927px;top:730.5px;height:20px;line-height:20px;color:#fff">-0.6 dB</div>
<div class="t row" style="left:640px;top:730.5px;height:20px;line-height:20px;color:#fff">Don't Go (Original Edit)</div>
<div class="t row" style="left:1080px;top:730.5px;height:20px;line-height:20px;color:#fff">Le Click</div>
<div class="t row" style="left:1361px;top:730.5px;height:20px;line-height:20px;color:#fff">DJ Dance Summer Edition ' 97 ...</div>
<div class="t row" style="right:942px;top:730.5px;height:20px;line-height:20px;color:#fff">15</div>
<div class="t row" style="right:885.5px;top:730.5px;height:20px;line-height:20px;color:#fff">1997</div>
<div class="t row" style="left:1682px;top:730.5px;height:20px;line-height:20px;color:#fff">Dance</div>
<div class="t row" style="right:588.5px;top:730.5px;height:20px;line-height:20px;color:#fff">03:57</div>
<svg class="i" style="left:1985.5px;top:731.5px" width="14" height="18" viewBox="0 0 14 18"><rect x="0" y="0" width="14" height="18" rx="2.5" fill="#dcdcdc"/><circle cx="7" cy="7.700" r="2.750" fill="none" stroke="#1e1e1e" stroke-width="2.300"/><path d="M3.600 7.200 L5.400 6.600 M8.600 8.800 L10.400 8.200" stroke="#dcdcdc" stroke-width="0.900"/></svg>
<div class="t row" style="left:2040px;top:730.5px;height:20px;line-height:20px;width:99px;overflow:hidden;font-size:13.100px;color:#fff">15. Le Click - D...</div>
<div class="b" style="left:489px;top:754px;width:1650px;height:27px;background:#636363"></div>
<div class="t row" style="left:493px;top:757.5px;height:20px;line-height:20px;color:#fff">24</div>
<div class="t row" style="right:1927px;top:757.5px;height:20px;line-height:20px;color:#fff">-0.6 dB</div>
<div class="t row" style="left:640px;top:757.5px;height:20px;line-height:20px;color:#fff">Simple Things (Light Piano Radio Edit)</div>
<div class="t row" style="left:1080px;top:757.5px;height:20px;line-height:20px;color:#fff">Alex Party</div>
<div class="t row" style="left:1361px;top:757.5px;height:20px;line-height:20px;color:#fff">DJ Dance Summer Edition ' 97 ...</div>
<div class="t row" style="right:942px;top:757.5px;height:20px;line-height:20px;color:#fff">16</div>
<div class="t row" style="right:885.5px;top:757.5px;height:20px;line-height:20px;color:#fff">1997</div>
<div class="t row" style="left:1682px;top:757.5px;height:20px;line-height:20px;color:#fff">Dance</div>
<svg class="i" style="left:1794.50px;top:758.80px;color:#6e6e6e;" width="17.00" height="17.00" viewBox="0 0 24 24" fill="currentColor"><path d="M12 17.27L18.18 21l-1.64-7.03L22 9.24l-7.19-.61L12 2 9.19 8.63 2 9.24l5.46 4.73L5.82 21z" /></svg>
<svg class="i" style="left:1812.40px;top:758.80px;color:#6e6e6e;" width="17.00" height="17.00" viewBox="0 0 24 24" fill="currentColor"><path d="M12 17.27L18.18 21l-1.64-7.03L22 9.24l-7.19-.61L12 2 9.19 8.63 2 9.24l5.46 4.73L5.82 21z" /></svg>
<svg class="i" style="left:1830.30px;top:758.80px;color:#6e6e6e;" width="17.00" height="17.00" viewBox="0 0 24 24" fill="currentColor"><path d="M12 17.27L18.18 21l-1.64-7.03L22 9.24l-7.19-.61L12 2 9.19 8.63 2 9.24l5.46 4.73L5.82 21z" /></svg>
<svg class="i" style="left:1848.20px;top:758.80px;color:#6e6e6e;" width="17.00" height="17.00" viewBox="0 0 24 24" fill="currentColor"><path d="M12 17.27L18.18 21l-1.64-7.03L22 9.24l-7.19-.61L12 2 9.19 8.63 2 9.24l5.46 4.73L5.82 21z" /></svg>
<svg class="i" style="left:1866.10px;top:758.80px;color:#6e6e6e;" width="17.00" height="17.00" viewBox="0 0 24 24" fill="currentColor"><path d="M12 17.27L18.18 21l-1.64-7.03L22 9.24l-7.19-.61L12 2 9.19 8.63 2 9.24l5.46 4.73L5.82 21z" /></svg>
<div class="t row" style="right:588.5px;top:757.5px;height:20px;line-height:20px;color:#fff">03:13</div>
<svg class="i" style="left:1985.5px;top:758.5px" width="14" height="18" viewBox="0 0 14 18"><rect x="0" y="0" width="14" height="18" rx="2.5" fill="#dcdcdc"/><circle cx="7" cy="7.700" r="2.750" fill="none" stroke="#1e1e1e" stroke-width="2.300"/><path d="M3.600 7.200 L5.400 6.600 M8.600 8.800 L10.400 8.200" stroke="#dcdcdc" stroke-width="0.900"/></svg>
<div class="t row" style="left:2040px;top:757.5px;height:20px;line-height:20px;width:99px;overflow:hidden;font-size:13.100px;color:#fff">16. Alex Party -...</div>
<div class="b" style="left:489px;top:612px;width:1650px;height:1px;background:#c4c4c4"></div>
<div class="b" style="left:489px;top:626px;width:1650px;height:1px;background:#c4c4c4"></div>
<div class="b" style="left:493px;top:1247.5px;width:1294px;height:3.5px;background:#a8a8a8;border-radius:2px"></div>
<div class="t status" style="left:491px;top:1257.5px;height:14px;line-height:14px;"><span style="color:#fff">Playing 20/24 (01:33:31)</span> <span style="color:#c8c8c8">(Selected: 1 file, 20.2 MB, 03:13)</span></div>
<svg class="i" style="left:694px;top:602px;opacity:0.920" width="48" height="48" viewBox="0 0 48 48">
<circle cx="24" cy="24" r="23.500" fill="#1d1d1d"/>
<circle cx="24" cy="23" r="18.300" fill="#d4a017"/>
<path d="M24 7.800 L38 30.200 H30.800 L24 18.800 L17.200 30.200 H10 Z" fill="#1c1c1c"/>
<path d="M16.200 31.600 H31.800 L30.200 28.800 H17.800 Z" fill="#1c1c1c"/>
</svg>
<div class="t ghost" style="left:317px;width:800px;text-align:center;top:653.5px;height:14px;line-height:14px;">Yoda</div>
<div class="t ghost" style="left:317px;width:800px;text-align:center;top:668.5px;height:14px;line-height:14px;">message.mp</div>
<div class="t ghost" style="left:317px;width:800px;text-align:center;top:682.0px;height:14px;line-height:14px;height:7px;overflow:hidden;line-height:14px">3</div>
<svg class="i" style="left:710px;top:626px" width="14" height="22" viewBox="0 0 14 22">
<path d="M1 1 L1 17.500 L4.800 13.800 L7.500 20.200 L10 19.100 L7.300 12.900 L12.500 12.900 Z" fill="#fff" stroke="#000" stroke-width="1"/></svg>
<div class="b" style="left:722px;top:639px;width:53px;height:19px;background:#fff;border:1px solid #8a8a8a;box-sizing:border-box"></div>
<div class="t copy" style="left:727px;top:639.5px;height:18px;line-height:18px;"><span style="font-weight:bold;font-size:15px;position:relative;top:0.500px">+</span> Copy</div>
<div class="b" style="left:2140px;top:102.5px;width:420px;height:26px;background:#323232;border-radius:6px"></div>
<svg class="i" style="left:2151.80px;top:108.10px;color:#dcdcdc" width="4.40" height="14.80" viewBox="0 0 4.4 14.8" fill="currentColor"><circle cx="2.200" cy="2.200" r="2.150"/><circle cx="2.200" cy="7.400" r="2.150"/><circle cx="2.200" cy="12.600" r="2.150"/></svg>
<div class="t hd" style="left:1950px;width:800px;text-align:center;top:105.5px;height:20px;line-height:20px;">Playing 20/24 (01:33:31)</div>
<div class="b" style="left:2140px;top:128.500px;width:420px;height:899.500px;overflow:hidden">
<div class="t rp" style="left:3px;top:-14.0px;height:20px;line-height:20px;color:#a0a0a0">8.</div>
<div class="t rp" style="left:21px;top:-14.0px;height:20px;line-height:20px;color:#fff">Beautiful day</div>
<div class="t rp" style="left:3px;top:13.0px;height:20px;line-height:20px;color:#a0a0a0">U2 - 2000's Top One's Vol. 2</div>
<div class="t rp" style="right:16.500px;top:13.0px;height:20px;line-height:20px;color:#fff">04:11</div>
<div class="t rp" style="left:3px;top:40.0px;height:20px;line-height:20px;color:#a0a0a0">9.</div>
<div class="t rp" style="left:21px;top:40.0px;height:20px;line-height:20px;color:#fff">Jojo Action (Radio Edit)</div>
<div class="t rp" style="left:3px;top:67.0px;height:20px;line-height:20px;color:#a0a0a0">Mr. President - DJ Dance Summer Edition ' 97 Vol. 3</div>
<div class="t rp" style="right:16.500px;top:67.0px;height:20px;line-height:20px;color:#fff">03:54</div>
<div class="t rp" style="left:3px;top:94.0px;height:20px;line-height:20px;color:#a0a0a0">10.</div>
<div class="t rp" style="left:28.5px;top:94.0px;height:20px;line-height:20px;color:#fff">Ecuador (Original Edit)</div>
<div class="t rp" style="left:3px;top:121.0px;height:20px;line-height:20px;color:#a0a0a0">Sash! Feat. Rodrigez - DJ Dance Summer Edition ' 97 Vol. 3</div>
<div class="t rp" style="right:16.500px;top:121.0px;height:20px;line-height:20px;color:#fff">03:35</div>
<div class="t rp" style="left:3px;top:148.0px;height:20px;line-height:20px;color:#a0a0a0">11.</div>
<div class="t rp" style="left:28.5px;top:148.0px;height:20px;line-height:20px;color:#fff">Samba De Jeneiro (New Radio Edition)</div>
<div class="t rp" style="left:3px;top:175.0px;height:20px;line-height:20px;color:#a0a0a0">Carrilio - DJ Dance Summer Edition ' 97 Vol. 3</div>
<div class="t rp" style="right:16.500px;top:175.0px;height:20px;line-height:20px;color:#fff">02:51</div>
<div class="t rp" style="left:3px;top:202.0px;height:20px;line-height:20px;color:#a0a0a0">12.</div>
<div class="t rp" style="left:28.5px;top:202.0px;height:20px;line-height:20px;color:#fff">Fun In The Sun (Radio - Video Holiday Mix)</div>
<div class="t rp" style="left:3px;top:229.0px;height:20px;line-height:20px;color:#a0a0a0">Fun Cruiser - DJ Dance Summer Edition ' 97 Vol. 3</div>
<div class="t rp" style="right:16.500px;top:229.0px;height:20px;line-height:20px;color:#fff">03:40</div>
<div class="t rp" style="left:3px;top:256.0px;height:20px;line-height:20px;color:#a0a0a0">13.</div>
<div class="t rp" style="left:28.5px;top:256.0px;height:20px;line-height:20px;color:#fff">Fall In Love With You (Radio Mix)</div>
<div class="t rp" style="left:3px;top:283.0px;height:20px;line-height:20px;color:#a0a0a0">Activate - DJ Dance Summer Edition ' 97 Vol. 3</div>
<div class="t rp" style="right:16.500px;top:283.0px;height:20px;line-height:20px;color:#fff">03:29</div>
<div class="t rp" style="left:3px;top:310.0px;height:20px;line-height:20px;color:#a0a0a0">14.</div>
<div class="t rp" style="left:28.5px;top:310.0px;height:20px;line-height:20px;color:#fff">Piece Of Mine (Radio Version)</div>
<div class="t rp" style="left:3px;top:337.0px;height:20px;line-height:20px;color:#a0a0a0">DJ the Crow - DJ Dance Summer Edition ' 97 Vol. 3</div>
<div class="t rp" style="right:16.500px;top:337.0px;height:20px;line-height:20px;color:#fff">03:32</div>
<div class="t rp" style="left:3px;top:364.0px;height:20px;line-height:20px;color:#a0a0a0">15.</div>
<div class="t rp" style="left:28.5px;top:364.0px;height:20px;line-height:20px;color:#fff">I Wanna (Be With You Tonight) (Original 7" Edit)</div>
<div class="t rp" style="left:3px;top:391.0px;height:20px;line-height:20px;color:#a0a0a0">Johny Right - DJ Dance Summer Edition ' 97 Vol. 3</div>
<div class="t rp" style="right:16.500px;top:391.0px;height:20px;line-height:20px;color:#fff">03:25</div>
<div class="t rp" style="left:3px;top:418.0px;height:20px;line-height:20px;color:#a0a0a0">16.</div>
<div class="t rp" style="left:28.5px;top:418.0px;height:20px;line-height:20px;color:#fff">Teardrops From Heaven (Fm Video Mix)</div>
<div class="t rp" style="left:3px;top:445.0px;height:20px;line-height:20px;color:#a0a0a0">Zhivago - DJ Dance Summer Edition ' 97 Vol. 3</div>
<div class="t rp" style="right:16.500px;top:445.0px;height:20px;line-height:20px;color:#fff">03:51</div>
<div class="t rp" style="left:3px;top:472.0px;height:20px;line-height:20px;color:#a0a0a0">17.</div>
<div class="t rp" style="left:28.5px;top:472.0px;height:20px;line-height:20px;color:#fff">Sunstroke (Disco Citizens Radio Edit)</div>
<div class="t rp" style="left:3px;top:499.0px;height:20px;line-height:20px;color:#a0a0a0">Chicane - DJ Dance Summer Edition ' 97 Vol. 3</div>
<div class="t rp" style="right:16.500px;top:499.0px;height:20px;line-height:20px;color:#fff">04:03</div>
<div class="t rp" style="left:3px;top:526.0px;height:20px;line-height:20px;color:#a0a0a0">18.</div>
<div class="t rp" style="left:28.5px;top:526.0px;height:20px;line-height:20px;color:#fff">Touch The Fire! (Power Radio Mix)</div>
<div class="t rp" style="left:3px;top:553.0px;height:20px;line-height:20px;color:#a0a0a0">The Boom Beat - DJ Dance Summer Edition ' 97 Vol. 3</div>
<div class="t rp" style="right:16.500px;top:553.0px;height:20px;line-height:20px;color:#fff">04:12</div>
<div class="t rp" style="left:3px;top:580.0px;height:20px;line-height:20px;color:#a0a0a0">19.</div>
<div class="t rp" style="left:28.5px;top:580.0px;height:20px;line-height:20px;color:#fff">I'll Be Waiting For You (Summer Mix)</div>
<div class="t rp" style="left:3px;top:607.0px;height:20px;line-height:20px;color:#a0a0a0">2 For Good - DJ Dance Summer Edition ' 97 Vol. 3</div>
<div class="t rp" style="right:16.500px;top:607.0px;height:20px;line-height:20px;color:#fff">05:38</div>
<div class="t rp b" style="left:3px;top:634.0px;height:20px;line-height:20px;color:#3f8fd6">20.</div>
<div class="t rp b" style="left:28.5px;top:634.0px;height:20px;line-height:20px;color:#4a9fea">Girl (I Need Your Love) (Dj Experience Us Mix)</div>
<div class="t rp b" style="left:3px;top:661.0px;height:20px;line-height:20px;color:#3f7fba">Yell 4 You - DJ Dance Summer Edition ' 97 Vol. 3</div>
<div class="t rp b" style="right:16.500px;top:661.0px;height:20px;line-height:20px;color:#4a9fea">05:15</div>
<div class="t rp" style="left:3px;top:688.0px;height:20px;line-height:20px;color:#a0a0a0">21.</div>
<div class="t rp" style="left:28.5px;top:688.0px;height:20px;line-height:20px;color:#fff">Long John Silver (Radio Edit)</div>
<div class="t rp" style="left:3px;top:715.0px;height:20px;line-height:20px;color:#a0a0a0">Loft - DJ Dance Summer Edition ' 97 Vol. 3</div>
<div class="t rp" style="right:16.500px;top:715.0px;height:20px;line-height:20px;color:#fff">04:05</div>
<div class="t rp" style="left:3px;top:742.0px;height:20px;line-height:20px;color:#a0a0a0">22.</div>
<div class="t rp" style="left:28.5px;top:742.0px;height:20px;line-height:20px;color:#fff">Stay The Night (Radio Version)</div>
<div class="t rp" style="left:3px;top:769.0px;height:20px;line-height:20px;color:#a0a0a0">Marcel Romanoff - DJ Dance Summer Edition ' 97 Vol. 3</div>
<div class="t rp" style="right:16.500px;top:769.0px;height:20px;line-height:20px;color:#fff">03:23</div>
<div class="t rp" style="left:3px;top:796.0px;height:20px;line-height:20px;color:#a0a0a0">23.</div>
<div class="t rp" style="left:28.5px;top:796.0px;height:20px;line-height:20px;color:#fff">Don't Go (Original Edit)</div>
<div class="t rp" style="left:3px;top:823.0px;height:20px;line-height:20px;color:#a0a0a0">Le Click - DJ Dance Summer Edition ' 97 Vol. 3</div>
<div class="t rp" style="right:16.500px;top:823.0px;height:20px;line-height:20px;color:#fff">03:57</div>
<div class="t rp" style="left:3px;top:850.0px;height:20px;line-height:20px;color:#a0a0a0">24.</div>
<div class="t rp" style="left:28.5px;top:850.0px;height:20px;line-height:20px;color:#fff">Simple Things (Light Piano Radio Edit)</div>
<div class="t rp" style="left:3px;top:877.0px;height:20px;line-height:20px;color:#a0a0a0">Alex Party - DJ Dance Summer Edition ' 97 Vol. 3</div>
<div class="t rp" style="right:16.500px;top:877.0px;height:20px;line-height:20px;color:#fff">03:13</div>
<svg class="i" style="left:314.30px;top:-12.70px;color:#fff" width="17" height="17" viewBox="0 0 24 24" fill="currentColor"><path d="M12 17.27L18.18 21l-1.64-7.03L22 9.24l-7.19-.61L12 2 9.19 8.63 2 9.24l5.46 4.73L5.82 21z" /></svg>
<svg class="i" style="left:332.30px;top:-12.70px;color:#fff" width="17" height="17" viewBox="0 0 24 24" fill="currentColor"><path d="M12 17.27L18.18 21l-1.64-7.03L22 9.24l-7.19-.61L12 2 9.19 8.63 2 9.24l5.46 4.73L5.82 21z" /></svg>
<svg class="i" style="left:350.30px;top:-12.70px;color:#fff" width="17" height="17" viewBox="0 0 24 24" fill="currentColor"><path d="M12 17.27L18.18 21l-1.64-7.03L22 9.24l-7.19-.61L12 2 9.19 8.63 2 9.24l5.46 4.73L5.82 21z" /></svg>
<svg class="i" style="left:368.30px;top:-12.70px;color:#fff" width="17" height="17" viewBox="0 0 24 24" fill="currentColor"><path d="M12 17.27L18.18 21l-1.64-7.03L22 9.24l-7.19-.61L12 2 9.19 8.63 2 9.24l5.46 4.73L5.82 21z" /></svg>
<svg class="i" style="left:386.30px;top:-12.70px;color:#fff" width="17" height="17" viewBox="0 0 24 24" fill="currentColor"><path d="M12 17.27L18.18 21l-1.64-7.03L22 9.24l-7.19-.61L12 2 9.19 8.63 2 9.24l5.46 4.73L5.82 21z" /></svg>
</div>
<div class="b" style="left:2552.5px;top:408px;width:3.5px;height:617px;background:#a8a8a8;border-radius:2px"></div>
<div class="b" style="left:2140px;top:1029px;width:420px;height:26.7px;background:#323232"></div>
<svg class="i" style="left:2151.80px;top:1035.10px;color:#dcdcdc" width="4.40" height="14.80" viewBox="0 0 4.4 14.8" fill="currentColor"><circle cx="2.200" cy="2.200" r="2.150"/><circle cx="2.200" cy="7.400" r="2.150"/><circle cx="2.200" cy="12.600" r="2.150"/></svg>
<div class="t hd" style="left:2314px;top:1032.5px;height:20px;line-height:20px;">Playing</div>
<svg class="i" style="left:2367.50px;top:1033.50px;color:#dcdcdc;" width="19.00" height="19.00" viewBox="0 0 24 24" fill="currentColor"><path stroke="currentColor" stroke-width="0.7" d="M16.59 8.59L12 13.17 7.41 8.59 6 10l6 6 6-6z" /></svg>
<svg class="i" style="left:2538.25px;top:1033.75px;color:#dcdcdc;" width="18.50" height="18.50" viewBox="0 0 24 24" fill="currentColor"><path d="M2 3h8v7H2zM12 3h10v7H12zM2 12h20v2.500H2zM2 16h20v2.500H2zM2 20h20v2.500H2z" /></svg>
<svg class="i" style="left:2240px;top:1056px" width="220" height="220" viewBox="0 0 220 220">
<defs>
<linearGradient id="abg" x1="0" y1="0" x2="1" y2="0"><stop offset="0" stop-color="#626262"/><stop offset="0.250" stop-color="#5c5c5c"/><stop offset="1" stop-color="#555555"/></linearGradient>
<linearGradient id="ag" x1="0" y1="0" x2="0.300" y2="1"><stop offset="0" stop-color="#516148"/><stop offset="0.550" stop-color="#576347"/><stop offset="0.800" stop-color="#62654a"/><stop offset="1" stop-color="#66654b"/></linearGradient>
<radialGradient id="hair" cx="0.500" cy="0.500" r="0.500"><stop offset="0" stop-color="#2b2d2b"/><stop offset="0.820" stop-color="#2f322e"/><stop offset="1" stop-color="#464f42" stop-opacity="0"/></radialGradient>
<radialGradient id="face" cx="0.500" cy="0.500" r="0.500"><stop offset="0" stop-color="#9a8478"/><stop offset="0.700" stop-color="#86746a"/><stop offset="1" stop-color="#59594f" stop-opacity="0"/></radialGradient>
</defs>
<rect width="220" height="220" fill="url(#abg)"/>
<path d="M23 19 L219 17 L219 182 L23 187 Z" fill="url(#ag)"/>
<path d="M23 19 L43 19 L43 187 L23 187 Z" fill="#3f3f3f"/>
<path d="M212 17 L219 17 L219 182 L212 182 Z" fill="#6a6c62"/>
<path d="M120 19 L212 18 L212 120 L150 130 Z" fill="#4b5b44" opacity="0.550"/>
<path d="M66 35 q22 -12 44 0 l-4 12 q-18 -8 -36 0 z M70 62 q18 -8 36 0 l-3 44 q-14 6 -30 0 z" fill="#646446" opacity="0.450"/>
<ellipse cx="157" cy="44" rx="23" ry="26" fill="url(#hair)"/>
<ellipse cx="147" cy="59" rx="10" ry="14" fill="url(#face)"/>
<path d="M140 80 Q160 66 186 70 L212 74 L212 112 Q180 108 150 116 Q142 100 140 80 Z" fill="#30322f" opacity="0.900"/>
<ellipse cx="122" cy="70" rx="9" ry="11" fill="#8c7f6c" opacity="0.600"/>
<path d="M60 150 q40 -14 130 -6 l0 34 q-70 -4 -128 8 z" fill="#6e6b4b" opacity="0.500"/>
<path d="M0 188 L220 183 L220 220 L0 220 Z" fill="#5c5c5c"/>
</svg>
<div class="b" style="left:2552.5px;top:1060px;width:3.5px;height:55px;background:#a8a8a8;border-radius:2px"></div>
<div class="t det" style="left:2146.5px;top:1063.3px;height:15px;line-height:15px;">Title: <span style="color:#fff;margin-left:2px">Girl (I Need Your Love) (Dj Experience Us Mix)</span></div>
<div class="t det" style="left:2436px;top:1063.3px;height:15px;line-height:15px;">Artist: <span style="color:#5b9bd8;margin-left:2px">Yell 4 You</span></div>
<div class="t det" style="left:2146.5px;top:1078.3px;height:15px;line-height:15px;">Album: <span style="color:#5b9bd8;margin-left:2px">DJ Dance Summer Edition ' 97 Vol. 3</span></div>
<div class="t det" style="left:2436px;top:1078.3px;height:15px;line-height:15px;">Track #: <span style="color:#fff;margin-left:2px">12</span></div>
<div class="t det" style="left:2146.5px;top:1098.0px;height:15px;line-height:15px;">Artwork:</div>
<svg class="i" style="left:2198.50px;top:1093.50px;color:#dcdcdc;" width="19.00" height="19.00" viewBox="0 0 24 24" fill="currentColor"><path d="M17 3H5c-1.110 0-2 .9-2 2v14c0 1.100.89 2 2 2h14c1.100 0 2-.9 2-2V7l-4-4zm-5 16c-1.660 0-3-1.340-3-3s1.340-3 3-3 3 1.340 3 3-1.340 3-3 3zm3-10H5V5h10v4z" /></svg>
<div class="t det" style="left:2146.5px;top:1118.0px;height:15px;line-height:15px;">Lyrics:</div>
<svg class="i" style="left:2183.50px;top:1113.50px;color:#dcdcdc;" width="19.00" height="19.00" viewBox="0 0 24 24" fill="currentColor"><path d="M17 3H5c-1.110 0-2 .9-2 2v14c0 1.100.89 2 2 2h14c1.100 0 2-.9 2-2V7l-4-4zm-5 16c-1.660 0-3-1.340-3-3s1.340-3 3-3 3 1.340 3 3-1.340 3-3 3zm3-10H5V5h10v4z" /></svg>
<div class="t lyr" style="left:1948px;width:800px;text-align:center;top:1139.7px;height:15px;line-height:15px;">She's just a girl, and she's on fire</div>
<div class="t lyr" style="left:1948px;width:800px;text-align:center;top:1154.7px;height:15px;line-height:15px;">Hotter than a fantasy, longer like a highway</div>
<div class="t lyr" style="left:1948px;width:800px;text-align:center;top:1169.7px;height:15px;line-height:15px;">She's living in a world, and it's on fire</div>
<div class="t lyr" style="left:1948px;width:800px;text-align:center;top:1184.7px;height:15px;line-height:15px;">Feeling the catastrophe, but she knows she can fly away</div>
<div class="t lyr" style="left:1948px;width:800px;text-align:center;top:1214.7px;height:15px;line-height:15px;">Oh, she got both feet on the ground</div>
<div class="t lyr" style="left:1948px;width:800px;text-align:center;top:1229.7px;height:15px;line-height:15px;">And she's burning it down</div>
<div class="t lyr" style="left:1948px;width:800px;text-align:center;top:1244.7px;height:15px;line-height:15px;">Oh, she got her head in the clouds</div>
<div class="t lyr" style="left:1948px;width:800px;text-align:center;top:1259.7px;height:15px;line-height:15px;">And she's not backing down</div>
<svg class="i" style="left:0;top:1270px" width="2560" height="50" viewBox="0 1270 2560 50" shape-rendering="crispEdges"><path d="M7.5 1293.8V1294.8M8.5 1293.8V1294.8M10.5 1293.1V1295.1M11.5 1292.6V1295.7M13.5 1291.8V1296.4M14.5 1290.3V1298.2M16.5 1286.9V1301.8M17.5 1283.6V1305.7M19.5 1281.9V1304.5M20.5 1283.2V1307.4M22.5 1281.9V1305.6M23.5 1284.0V1305.1M25.5 1284.9V1307.4M26.5 1280.4V1306.0M28.5 1283.5V1305.6M29.5 1284.2V1303.9M31.5 1284.1V1306.8M32.5 1281.0V1306.1M34.5 1281.3V1304.3M35.5 1282.8V1304.2M37.5 1284.8V1307.3M38.5 1281.6V1306.0M40.5 1284.7V1305.1M41.5 1283.4V1307.5M43.5 1280.3V1306.3M44.5 1281.5V1308.1M46.5 1281.0V1304.2M47.5 1281.7V1306.6M49.5 1281.2V1307.4M50.5 1283.2V1307.2M52.5 1282.7V1303.7M53.5 1281.7V1306.5M55.5 1284.0V1303.7M56.5 1284.1V1304.9M58.5 1281.7V1305.1M59.5 1284.7V1303.7M61.5 1283.2V1304.1M62.5 1282.4V1304.6M64.5 1281.4V1304.7M65.5 1284.8V1306.4M67.5 1284.5V1304.6M68.5 1284.9V1305.3M70.5 1282.7V1304.0M71.5 1284.1V1307.1M73.5 1281.3V1304.1M74.5 1283.0V1304.1M76.5 1281.5V1307.2M77.5 1281.4V1306.1M79.5 1281.2V1305.7M80.5 1283.9V1305.9M82.5 1282.7V1305.1M83.5 1282.5V1303.9M85.5 1284.2V1307.3M86.5 1280.2V1307.0M88.5 1283.3V1307.3M89.5 1281.6V1303.9M91.5 1282.7V1306.6M92.5 1283.6V1307.6M94.5 1281.1V1303.7M95.5 1280.3V1306.9M97.5 1284.1V1306.9M98.5 1282.0V1306.0M100.5 1282.3V1304.6M101.5 1281.1V1304.3M103.5 1282.7V1307.0M104.5 1281.1V1307.1M106.5 1282.0V1308.5M107.5 1283.7V1305.8M109.5 1282.6V1304.4M110.5 1283.5V1303.7M112.5 1280.2V1307.3M113.5 1280.8V1307.2M115.5 1281.8V1306.1M116.5 1281.7V1303.8M118.5 1281.0V1306.5M119.5 1280.6V1306.0M121.5 1281.8V1307.0M122.5 1283.7V1305.3M124.5 1282.7V1305.4M125.5 1284.4V1305.4M127.5 1284.0V1304.5M128.5 1283.4V1306.0M130.5 1282.9V1305.4M131.5 1282.6V1307.6M133.5 1282.8V1306.9M134.5 1283.6V1307.1M136.5 1283.8V1306.4M137.5 1281.3V1306.9M139.5 1283.4V1305.1M140.5 1282.7V1306.1M142.5 1281.0V1306.2M143.5 1282.4V1306.9M145.5 1283.6V1307.1M146.5 1283.8V1305.4M148.5 1283.2V1305.8M149.5 1282.2V1303.9M151.5 1285.5V1305.1M152.5 1286.0V1304.1M154.5 1283.9V1302.5M155.5 1284.7V1304.8M157.5 1286.6V1304.4M158.5 1285.9V1303.6M160.5 1285.3V1303.7M161.5 1287.2V1303.8M163.5 1284.9V1301.5M164.5 1287.2V1301.1M166.5 1285.3V1303.3M167.5 1286.9V1302.8M169.5 1287.7V1303.4M170.5 1287.4V1303.1M172.5 1286.6V1303.4M173.5 1287.6V1303.2M175.5 1288.0V1302.8M176.5 1286.6V1301.5M178.5 1285.6V1301.1M179.5 1287.1V1302.4M181.5 1286.9V1301.6M182.5 1287.1V1302.8M184.5 1286.3V1302.3M185.5 1286.5V1302.6M187.5 1286.3V1302.6M188.5 1287.5V1302.3M190.5 1287.9V1302.3M191.5 1286.4V1300.3M193.5 1286.1V1302.0M194.5 1285.1V1302.7M196.5 1288.1V1302.2M197.5 1287.5V1302.8M199.5 1286.2V1302.2M200.5 1288.2V1302.5M202.5 1282.1V1304.0M203.5 1284.5V1307.6M205.5 1284.6V1306.9M206.5 1282.0V1306.9M208.5 1281.0V1304.8M209.5 1284.7V1307.6M211.5 1282.3V1306.0M212.5 1284.0V1304.9M214.5 1283.9V1307.5M215.5 1280.7V1307.5M217.5 1280.8V1307.4M218.5 1283.6V1306.2M220.5 1283.3V1307.3M221.5 1282.9V1306.5M223.5 1283.0V1306.7M224.5 1282.7V1307.0M226.5 1283.3V1304.0M227.5 1281.3V1307.1M229.5 1281.7V1304.7M230.5 1283.0V1305.5M232.5 1282.4V1307.1M233.5 1283.4V1307.2M235.5 1282.2V1306.7M236.5 1281.4V1305.1M238.5 1282.0V1306.3M239.5 1282.1V1307.1M241.5 1282.2V1304.2M242.5 1281.0V1305.8M244.5 1281.3V1306.8M245.5 1281.2V1306.0M247.5 1282.5V1307.5M248.5 1284.5V1305.5M250.5 1284.1V1307.2M251.5 1282.7V1306.5M253.5 1283.8V1307.5M254.5 1283.1V1305.8M256.5 1281.5V1306.2M257.5 1282.6V1307.0M259.5 1280.4V1306.3M260.5 1282.7V1308.4M262.5 1282.6V1306.5M263.5 1284.3V1303.6M265.5 1284.6V1307.2M266.5 1281.1V1306.6M268.5 1282.6V1304.0M269.5 1281.7V1306.7M271.5 1281.4V1304.7M272.5 1283.2V1306.5M274.5 1283.2V1306.4M275.5 1284.9V1305.6M277.5 1284.1V1306.9M278.5 1283.0V1306.2M280.5 1282.7V1304.1M281.5 1282.4V1307.6M283.5 1283.0V1307.1M284.5 1281.3V1303.9M286.5 1281.3V1306.9M287.5 1282.9V1306.6M289.5 1281.1V1305.8M290.5 1280.2V1304.7M292.5 1282.6V1305.4M293.5 1281.0V1306.8M295.5 1283.7V1306.1M296.5 1281.6V1308.3M298.5 1283.6V1306.9M299.5 1283.9V1305.9M301.5 1281.7V1307.0M302.5 1283.7V1306.7M304.5 1283.3V1303.7M305.5 1283.5V1304.3M307.5 1281.1V1305.0M308.5 1281.2V1304.0M310.5 1282.6V1304.9M311.5 1282.1V1304.5M313.5 1281.2V1308.0M314.5 1284.2V1304.6M316.5 1283.8V1307.1M317.5 1281.0V1306.9M319.5 1283.3V1305.5M320.5 1282.4V1304.7M322.5 1283.2V1307.2M323.5 1282.9V1303.7M325.5 1282.0V1304.5M326.5 1281.8V1307.1M328.5 1283.5V1304.7M329.5 1282.2V1307.3M331.5 1284.5V1306.0M332.5 1281.6V1306.1M334.5 1281.4V1304.4M335.5 1281.4V1306.2M337.5 1281.5V1306.8M338.5 1281.4V1307.2M340.5 1284.9V1305.0M341.5 1281.2V1306.4M343.5 1281.2V1308.0M344.5 1282.2V1304.7M346.5 1282.2V1304.9M347.5 1282.9V1304.9M349.5 1284.2V1305.2M350.5 1281.0V1305.4M352.5 1282.3V1306.2M353.5 1283.4V1304.0M355.5 1281.1V1305.8M356.5 1284.7V1305.9M358.5 1284.1V1305.9M359.5 1281.5V1305.2M361.5 1280.8V1306.4M362.5 1282.3V1305.1M364.5 1281.6V1304.6M365.5 1281.3V1304.7M367.5 1282.0V1305.4M368.5 1282.5V1306.8M370.5 1282.1V1306.9M371.5 1281.0V1305.0M373.5 1283.3V1306.5M374.5 1281.1V1304.5M376.5 1281.0V1303.9M377.5 1281.2V1307.3M379.5 1281.4V1304.2M380.5 1283.4V1304.2M382.5 1282.4V1304.2M383.5 1281.6V1308.2M385.5 1281.9V1304.3M386.5 1282.5V1305.7M388.5 1282.3V1305.4M389.5 1283.4V1304.0M391.5 1283.6V1305.4M392.5 1282.1V1306.1M394.5 1284.1V1306.8M395.5 1282.6V1306.9M397.5 1281.8V1305.6M398.5 1281.1V1305.0M400.5 1284.6V1305.5M401.5 1284.5V1305.5M403.5 1283.4V1306.2M404.5 1281.4V1307.5M406.5 1282.9V1306.9M407.5 1281.9V1306.3M409.5 1284.0V1305.7M410.5 1281.0V1306.4M412.5 1283.3V1308.0M413.5 1281.0V1305.2M415.5 1283.6V1307.0M416.5 1281.1V1304.7M418.5 1282.5V1304.0M419.5 1282.7V1307.6M421.5 1281.3V1305.7M422.5 1281.9V1305.9M424.5 1282.9V1306.5M425.5 1284.2V1305.1M427.5 1281.8V1305.8M428.5 1282.8V1306.9M430.5 1282.7V1306.9M431.5 1282.1V1305.9M433.5 1282.6V1307.0M434.5 1283.1V1305.5M436.5 1284.1V1307.1M437.5 1282.3V1307.2M439.5 1283.4V1307.1M440.5 1283.9V1306.1M442.5 1281.9V1306.0M443.5 1281.3V1307.5M445.5 1282.7V1307.6M446.5 1281.0V1304.2M448.5 1284.2V1305.2M449.5 1281.6V1307.6M451.5 1282.2V1305.3M452.5 1282.7V1306.6M454.5 1283.0V1306.6M455.5 1284.2V1305.1M457.5 1283.7V1307.5M458.5 1282.0V1304.3M460.5 1282.7V1305.2M461.5 1281.6V1307.4M463.5 1282.3V1307.2M464.5 1281.5V1304.5M466.5 1283.7V1305.7M467.5 1283.6V1306.3M469.5 1281.3V1304.8M470.5 1281.3V1307.0M472.5 1280.3V1304.3M473.5 1283.0V1307.1M475.5 1283.5V1304.5M476.5 1283.9V1307.5M478.5 1281.3V1307.6M479.5 1281.4V1306.4M481.5 1282.3V1308.1M482.5 1282.8V1306.2M484.5 1281.4V1307.5M485.5 1283.2V1307.5M487.5 1284.0V1306.3M488.5 1281.4V1304.9M490.5 1282.2V1306.2M491.5 1283.6V1304.8M493.5 1284.2V1306.2M494.5 1282.5V1307.6M496.5 1281.0V1307.4M497.5 1281.0V1305.9M499.5 1281.1V1307.4M500.5 1281.6V1307.4M502.5 1283.3V1307.3M503.5 1282.0V1306.5M505.5 1281.5V1306.8M506.5 1283.6V1304.6M508.5 1281.6V1306.5M509.5 1282.5V1307.5M511.5 1284.1V1305.7M512.5 1283.9V1307.6M514.5 1282.8V1307.0M515.5 1284.2V1306.9M517.5 1281.6V1306.3M518.5 1281.2V1307.4M520.5 1283.7V1305.8M521.5 1281.4V1305.4M523.5 1281.5V1306.2M524.5 1281.0V1306.7M526.5 1281.7V1306.1M527.5 1282.9V1306.4M529.5 1284.2V1305.3M530.5 1281.9V1305.6M532.5 1283.4V1306.3M533.5 1284.0V1308.3M535.5 1282.6V1306.5M536.5 1282.8V1306.6M538.5 1282.0V1306.8M539.5 1282.4V1306.4M541.5 1284.1V1306.8M542.5 1284.2V1307.2M544.5 1284.1V1305.2M545.5 1282.4V1306.2M547.5 1282.1V1306.1M548.5 1282.0V1306.0M550.5 1284.4V1306.8M551.5 1281.3V1306.8M553.5 1283.6V1304.2M554.5 1281.3V1306.9M556.5 1281.9V1305.1M557.5 1282.1V1305.1M559.5 1283.0V1307.2M560.5 1281.6V1305.7M562.5 1283.4V1307.4M563.5 1282.5V1305.0M565.5 1283.2V1306.7M566.5 1281.2V1304.6M568.5 1282.7V1304.4M569.5 1281.6V1307.5M571.5 1282.8V1304.4M572.5 1281.5V1306.6M574.5 1281.5V1307.3M575.5 1284.3V1306.9M577.5 1285.0V1301.5M578.5 1285.2V1304.1M580.5 1285.1V1303.1M581.5 1286.0V1301.4M583.5 1285.5V1300.9M584.5 1286.1V1303.3M586.5 1286.6V1303.0M587.5 1286.4V1302.1M589.5 1286.1V1303.1M590.5 1286.0V1301.6M592.5 1286.0V1302.7M593.5 1286.0V1302.3M595.5 1285.6V1301.4M596.5 1286.5V1301.5M598.5 1285.9V1300.6M599.5 1285.8V1302.8M601.5 1287.2V1302.6M602.5 1287.4V1302.4M604.5 1286.1V1302.9M605.5 1285.6V1302.6M607.5 1287.2V1302.3M608.5 1286.0V1303.0M610.5 1285.9V1302.3M611.5 1286.2V1302.1M613.5 1285.7V1302.1M614.5 1285.6V1302.9M616.5 1286.9V1301.8M617.5 1286.3V1302.5M619.5 1285.7V1301.5M620.5 1285.2V1302.0M622.5 1284.7V1303.4M623.5 1285.2V1302.0M625.5 1281.1V1307.6M626.5 1281.1V1305.4M628.5 1282.5V1307.6M629.5 1282.9V1304.5M631.5 1283.7V1306.9M632.5 1283.7V1304.5M634.5 1283.6V1306.8M635.5 1281.9V1305.8M637.5 1284.0V1304.4M638.5 1281.3V1307.8M640.5 1281.1V1307.5M641.5 1283.2V1307.6M643.5 1282.4V1306.5M644.5 1283.0V1304.9M646.5 1281.4V1307.5M647.5 1284.3V1304.6M649.5 1283.0V1305.8M650.5 1284.2V1306.3M652.5 1282.2V1306.4M653.5 1281.9V1305.9M655.5 1283.9V1306.0M656.5 1281.6V1307.4M658.5 1281.2V1307.1M659.5 1282.1V1307.5M661.5 1284.4V1305.4M662.5 1282.0V1307.3M664.5 1280.6V1306.7M665.5 1281.5V1306.9M667.5 1284.0V1304.8M668.5 1281.8V1305.2M670.5 1283.2V1308.4M671.5 1282.6V1305.0M673.5 1283.7V1306.8M674.5 1281.2V1305.1M676.5 1283.9V1306.1M677.5 1284.2V1307.6M679.5 1281.4V1305.0M680.5 1282.3V1307.3M682.5 1281.5V1305.6M683.5 1281.3V1306.7M685.5 1281.8V1307.6M686.5 1281.1V1307.3M688.5 1282.5V1305.3M689.5 1282.6V1305.2M691.5 1283.5V1304.8M692.5 1281.7V1305.2M694.5 1281.1V1306.8M695.5 1282.3V1306.7M697.5 1282.2V1306.4M698.5 1281.3V1307.5M700.5 1282.3V1306.4M701.5 1282.2V1305.2M703.5 1283.1V1308.1M704.5 1281.2V1307.2M706.5 1282.4V1307.3M707.5 1282.2V1307.5M709.5 1283.0V1306.3M710.5 1281.6V1306.0M712.5 1281.0V1306.3M713.5 1282.2V1308.1M715.5 1282.3V1306.9M716.5 1281.2V1308.3M718.5 1282.1V1306.2M719.5 1282.6V1307.2M721.5 1281.9V1307.1M722.5 1281.2V1307.6M724.5 1281.8V1307.5M725.5 1281.1V1306.6M727.5 1282.6V1306.3M728.5 1282.7V1307.2M730.5 1281.6V1305.5M731.5 1281.1V1306.2M733.5 1283.2V1306.3M734.5 1281.4V1306.8M736.5 1281.3V1306.4M737.5 1283.0V1307.2M739.5 1281.2V1306.1M740.5 1282.2V1305.6M742.5 1283.0V1306.1M743.5 1280.2V1305.3M745.5 1282.5V1307.5M746.5 1282.6V1306.5M748.5 1282.0V1307.2M749.5 1281.0V1305.2M751.5 1281.3V1306.1M752.5 1282.0V1307.5M754.5 1283.0V1306.0M755.5 1280.5V1307.5M757.5 1282.5V1306.2M758.5 1282.5V1305.3M760.5 1281.7V1306.9M761.5 1283.4V1307.6M763.5 1281.3V1307.5M764.5 1283.1V1307.6M766.5 1281.0V1306.0M767.5 1282.2V1305.2M769.5 1282.0V1306.3M770.5 1282.3V1306.5M772.5 1282.0V1306.7M773.5 1283.2V1306.6M775.5 1281.9V1306.3M776.5 1283.0V1307.6M778.5 1281.1V1307.0M779.5 1281.9V1307.5M781.5 1282.7V1307.4M782.5 1282.0V1307.2M784.5 1281.1V1307.3M785.5 1281.6V1308.1M787.5 1282.8V1307.2M788.5 1281.8V1306.9M790.5 1281.7V1306.4M791.5 1283.3V1306.1M793.5 1282.0V1306.6M794.5 1281.0V1306.4M796.5 1281.8V1306.6M797.5 1282.4V1306.9M799.5 1280.2V1307.3M800.5 1281.1V1307.5M802.5 1281.1V1306.1M803.5 1283.4V1305.8M805.5 1281.4V1307.2M806.5 1283.0V1306.5M808.5 1283.0V1308.1M809.5 1282.1V1306.9M811.5 1282.3V1306.5M812.5 1282.1V1306.8M814.5 1282.8V1306.4M815.5 1280.9V1305.6M817.5 1282.2V1307.3M818.5 1282.8V1306.6M820.5 1283.1V1308.2M821.5 1282.7V1305.4M823.5 1280.2V1306.1M824.5 1281.5V1307.2M826.5 1282.9V1307.4M827.5 1281.7V1307.6M829.5 1282.6V1306.8M830.5 1282.9V1307.4M832.5 1282.7V1307.5M833.5 1281.9V1305.6M835.5 1282.9V1308.2M836.5 1282.2V1305.3M838.5 1281.4V1306.0M839.5 1281.5V1308.4M841.5 1280.1V1306.6M842.5 1281.2V1306.4M844.5 1281.6V1305.7M845.5 1281.2V1307.5M847.5 1281.2V1306.5M848.5 1281.3V1306.9M850.5 1281.0V1305.4M851.5 1282.2V1306.1M853.5 1282.0V1308.0M854.5 1282.2V1307.2M856.5 1283.3V1307.6M857.5 1282.8V1307.0M859.5 1281.7V1307.5M860.5 1282.5V1307.4M862.5 1283.4V1305.8M863.5 1282.7V1305.5M865.5 1281.1V1306.0M866.5 1283.3V1306.2M868.5 1282.9V1305.8M869.5 1282.9V1305.8M871.5 1283.3V1305.8M872.5 1281.4V1307.3M874.5 1281.7V1305.9M875.5 1283.2V1306.6M877.5 1282.0V1305.8M878.5 1281.0V1307.5M880.5 1281.6V1305.7M881.5 1281.1V1307.2M883.5 1281.0V1305.7M884.5 1283.3V1307.0M886.5 1283.3V1306.6M887.5 1282.9V1308.3M889.5 1281.4V1307.0M890.5 1283.0V1306.6M892.5 1281.8V1305.3M893.5 1282.3V1306.9M895.5 1281.1V1305.7M896.5 1281.8V1305.9M898.5 1283.3V1305.5M899.5 1282.2V1307.6M901.5 1282.1V1306.8M902.5 1282.8V1306.2M904.5 1282.2V1305.7M905.5 1281.2V1306.6M907.5 1281.5V1306.9M908.5 1281.3V1307.1M910.5 1281.7V1306.9M911.5 1281.3V1305.5M913.5 1282.7V1306.7M914.5 1282.7V1307.2M916.5 1282.7V1307.6M917.5 1281.6V1305.4M919.5 1281.8V1305.8M920.5 1282.4V1305.3M922.5 1281.6V1306.9M923.5 1281.3V1305.6M925.5 1281.1V1306.8M926.5 1282.4V1306.4M928.5 1281.2V1306.2M929.5 1283.1V1305.5M931.5 1282.5V1307.2M932.5 1282.2V1305.7M934.5 1282.8V1307.9M935.5 1282.0V1307.0M937.5 1281.2V1305.8M938.5 1281.1V1307.3M940.5 1281.3V1305.7M941.5 1280.1V1305.9M943.5 1282.2V1306.9M944.5 1281.3V1305.6M946.5 1281.9V1307.4M947.5 1282.5V1306.7M949.5 1282.0V1306.8M950.5 1281.3V1307.2M952.5 1281.7V1306.0M953.5 1281.0V1305.6M955.5 1282.5V1307.1M956.5 1281.6V1305.5M958.5 1281.9V1305.2M959.5 1281.9V1305.7M961.5 1281.0V1305.5M962.5 1283.3V1306.8M964.5 1281.3V1307.3M965.5 1282.9V1306.7M967.5 1282.3V1305.6M968.5 1281.3V1307.2M970.5 1281.9V1306.4M971.5 1281.8V1308.4M973.5 1281.4V1306.2M974.5 1281.2V1306.4M976.5 1282.8V1305.7M977.5 1281.0V1307.5M979.5 1281.3V1306.2M980.5 1283.2V1308.1M982.5 1281.3V1305.8M983.5 1281.1V1305.8M985.5 1282.0V1306.3M986.5 1281.1V1307.5M988.5 1282.9V1305.8M989.5 1282.4V1307.3M991.5 1282.6V1305.7M992.5 1281.7V1307.1M994.5 1281.1V1307.5M995.5 1282.0V1306.7M997.5 1283.1V1306.6M998.5 1282.5V1305.7M1000.5 1281.4V1307.1M1001.5 1281.1V1306.8M1003.5 1282.7V1307.2M1004.5 1282.8V1305.4M1006.5 1284.9V1304.5M1007.5 1283.4V1304.2M1009.5 1284.1V1303.2M1010.5 1283.7V1303.1M1012.5 1284.6V1303.0M1013.5 1284.5V1304.0M1015.5 1283.2V1305.3M1016.5 1284.2V1304.2M1018.5 1283.6V1305.6M1019.5 1285.5V1304.0M1021.5 1284.6V1305.7M1022.5 1285.4V1306.0M1024.5 1283.6V1305.3M1025.5 1285.3V1305.5M1027.5 1285.6V1305.0M1028.5 1282.3V1305.7M1030.5 1283.0V1303.7M1031.5 1284.0V1305.6M1033.5 1283.1V1305.4M1034.5 1284.4V1305.6M1036.5 1283.8V1305.6M1037.5 1282.9V1305.6M1039.5 1283.6V1304.7M1040.5 1282.9V1305.4M1042.5 1285.4V1304.6M1043.5 1284.3V1305.4M1045.5 1281.9V1307.1M1046.5 1281.6V1307.4M1048.5 1281.0V1306.7M1049.5 1281.4V1306.6M1051.5 1283.0V1306.9M1052.5 1281.3V1307.3M1054.5 1281.3V1306.0M1055.5 1280.8V1306.1M1057.5 1282.0V1305.2M1058.5 1282.9V1307.3M1060.5 1280.7V1306.2M1061.5 1280.3V1305.7M1063.5 1281.2V1307.2M1064.5 1281.2V1307.4M1066.5 1282.2V1306.7M1067.5 1282.4V1305.6M1069.5 1281.1V1307.6M1070.5 1283.3V1305.6M1072.5 1281.1V1307.2M1073.5 1282.8V1305.5M1075.5 1282.5V1307.2M1076.5 1281.1V1306.2M1078.5 1281.0V1306.7M1079.5 1282.4V1307.3M1081.5 1281.8V1305.3M1082.5 1282.6V1307.0M1084.5 1281.0V1307.4M1085.5 1281.1V1306.4M1087.5 1281.9V1307.6M1088.5 1281.7V1305.3M1090.5 1281.3V1305.9M1091.5 1282.9V1306.4M1093.5 1281.7V1308.1M1094.5 1280.3V1306.1M1096.5 1281.1V1305.4M1097.5 1281.6V1306.6M1099.5 1281.2V1307.5M1100.5 1281.4V1305.8M1102.5 1281.1V1307.4M1103.5 1282.6V1307.2M1105.5 1282.8V1306.7M1106.5 1282.4V1306.5M1108.5 1281.4V1306.8M1109.5 1281.0V1306.0M1111.5 1281.3V1307.1M1112.5 1281.2V1307.3M1114.5 1280.6V1306.0M1115.5 1281.1V1307.6M1117.5 1281.2V1306.6M1118.5 1282.6V1306.6M1120.5 1282.4V1307.3M1121.5 1282.5V1305.9M1123.5 1281.9V1307.2M1124.5 1283.3V1305.5M1126.5 1281.8V1306.8M1127.5 1280.2V1305.3M1129.5 1281.2V1306.5M1130.5 1281.2V1305.9M1132.5 1281.4V1306.0M1133.5 1281.9V1305.3M1135.5 1281.3V1305.3M1136.5 1281.6V1307.2M1138.5 1281.2V1306.0M1139.5 1281.8V1305.7M1141.5 1283.3V1307.0M1142.5 1281.4V1307.0M1144.5 1281.8V1306.3M1145.5 1281.4V1305.4M1147.5 1282.4V1306.9M1148.5 1282.1V1307.0M1150.5 1283.2V1306.0M1151.5 1281.0V1305.6M1153.5 1281.3V1307.0M1154.5 1281.6V1307.6M1156.5 1281.9V1306.9M1157.5 1281.5V1306.3M1159.5 1282.2V1307.5M1160.5 1282.0V1306.7M1162.5 1283.3V1306.1M1163.5 1281.0V1306.4M1165.5 1282.8V1307.0M1166.5 1282.8V1307.3M1168.5 1281.3V1307.1M1169.5 1281.3V1306.5M1171.5 1282.8V1307.3M1172.5 1282.7V1305.6M1174.5 1283.1V1305.3M1175.5 1282.1V1307.4M1177.5 1281.8V1307.5M1178.5 1281.0V1307.0M1180.5 1282.2V1305.5M1181.5 1282.6V1306.0M1183.5 1282.3V1307.7M1184.5 1282.8V1306.2M1186.5 1281.4V1307.3M1187.5 1282.3V1307.1M1189.5 1281.3V1306.7M1190.5 1281.9V1305.4M1192.5 1282.5V1305.3M1193.5 1281.8V1307.0M1195.5 1282.9V1306.0M1196.5 1283.2V1306.9M1198.5 1281.2V1307.0M1199.5 1282.2V1306.2M1201.5 1282.2V1305.8M1202.5 1281.9V1306.6M1204.5 1281.9V1307.0M1205.5 1282.8V1307.2M1207.5 1281.6V1305.7M1208.5 1280.1V1307.3M1210.5 1282.6V1306.0M1211.5 1281.2V1305.4M1213.5 1281.7V1307.5M1214.5 1281.3V1306.2M1216.5 1281.1V1307.4M1217.5 1282.4V1305.3M1219.5 1283.3V1305.2M1220.5 1281.3V1307.4M1222.5 1281.8V1305.8M1223.5 1283.0V1306.4M1225.5 1281.2V1307.4M1226.5 1281.0V1305.8M1228.5 1282.2V1306.0M1229.5 1283.3V1305.4M1231.5 1282.8V1305.7M1232.5 1281.5V1305.9M1234.5 1283.2V1307.5M1235.5 1281.2V1305.9M1237.5 1282.7V1307.5M1238.5 1283.0V1306.8M1240.5 1282.6V1307.3M1241.5 1281.7V1305.4M1243.5 1281.9V1305.6M1244.5 1281.9V1307.4M1246.5 1282.6V1307.4M1247.5 1280.5V1305.8M1249.5 1281.9V1306.7M1250.5 1281.6V1305.4M1252.5 1281.6V1307.4M1253.5 1282.8V1307.2M1255.5 1282.3V1306.5M1256.5 1281.1V1305.5M1258.5 1283.3V1305.4M1259.5 1282.1V1306.9M1261.5 1282.1V1305.9M1262.5 1283.1V1306.9M1264.5 1281.2V1307.1M1265.5 1281.2V1307.1M1267.5 1282.3V1306.5M1268.5 1281.6V1306.4M1270.5 1282.1V1307.3M1271.5 1282.9V1306.2M1273.5 1281.0V1306.8M1274.5 1282.2V1307.6M1276.5 1281.3V1305.7M1277.5 1281.4V1305.6M1279.5 1282.9V1305.3M1280.5 1281.4V1307.4M1282.5 1282.4V1307.4M1283.5 1281.6V1305.5M1285.5 1281.2V1306.6M1286.5 1280.9V1307.4M1288.5 1282.0V1307.2M1289.5 1281.7V1307.0M1291.5 1283.2V1307.3M1292.5 1280.2V1307.0M1294.5 1281.4V1307.4M1295.5 1283.1V1306.1M1297.5 1280.3V1306.3M1298.5 1281.6V1307.5M1300.5 1282.4V1308.4M1301.5 1281.3V1307.8M1303.5 1282.4V1307.3M1304.5 1280.9V1307.4M1306.5 1281.9V1307.3M1307.5 1282.8V1307.1M1309.5 1282.5V1306.1M1310.5 1281.0V1306.0M1312.5 1281.6V1306.1M1313.5 1281.5V1306.2M1315.5 1281.2V1305.6M1316.5 1280.8V1307.1M1318.5 1283.1V1305.8M1319.5 1283.3V1306.2M1321.5 1281.7V1306.6M1322.5 1281.5V1306.6M1324.5 1282.7V1306.1M1325.5 1281.4V1305.4M1327.5 1281.9V1306.0M1328.5 1281.6V1307.1M1330.5 1282.4V1306.2M1331.5 1281.4V1308.4M1333.5 1282.8V1307.2M1334.5 1282.8V1306.0M1336.5 1282.9V1305.6M1337.5 1281.5V1305.3M1339.5 1282.9V1305.5M1340.5 1282.7V1306.9M1342.5 1281.0V1307.8M1343.5 1281.7V1305.9M1345.5 1282.3V1307.1M1346.5 1283.1V1307.2M1348.5 1282.2V1306.6M1349.5 1281.5V1306.8M1351.5 1281.4V1307.3M1352.5 1282.8V1305.8M1354.5 1281.4V1306.3M1355.5 1282.1V1306.9M1357.5 1281.1V1307.6M1358.5 1281.1V1307.5M1360.5 1283.3V1307.4M1361.5 1281.7V1305.6M1363.5 1281.5V1307.5M1364.5 1281.1V1306.2M1366.5 1283.3V1307.0M1367.5 1282.4V1306.2M1369.5 1280.8V1306.0M1370.5 1283.3V1306.1M1372.5 1282.5V1307.2M1373.5 1282.3V1307.4M1375.5 1281.2V1307.1M1376.5 1282.3V1305.9M1378.5 1281.6V1306.8M1379.5 1282.4V1308.4M1381.5 1282.9V1307.3M1382.5 1281.0V1305.5M1384.5 1282.2V1307.0M1385.5 1281.1V1307.5M1387.5 1283.1V1305.6M1388.5 1282.8V1307.1M1390.5 1282.1V1306.3M1391.5 1282.5V1306.7M1393.5 1282.9V1307.2M1394.5 1281.3V1307.3M1396.5 1282.6V1305.6M1397.5 1281.6V1306.0M1399.5 1282.0V1305.8M1400.5 1280.7V1305.8M1402.5 1280.4V1306.8M1403.5 1281.4V1305.7M1405.5 1283.0V1305.8M1406.5 1281.8V1306.2M1408.5 1281.3V1305.6M1409.5 1281.3V1306.4M1411.5 1281.0V1306.3M1412.5 1282.7V1306.4M1414.5 1282.2V1306.2M1415.5 1281.1V1306.2M1417.5 1283.0V1308.5M1418.5 1281.4V1307.5M1420.5 1282.6V1308.4M1421.5 1281.6V1307.5M1423.5 1281.8V1305.4M1424.5 1281.1V1305.4M1426.5 1281.3V1306.9M1427.5 1282.4V1306.5M1429.5 1281.7V1306.5M1430.5 1282.3V1306.3M1432.5 1281.3V1306.2M1433.5 1281.0V1306.8M1435.5 1282.8V1307.1M1436.5 1280.2V1306.0M1438.5 1281.7V1306.6M1439.5 1282.0V1307.1M1441.5 1282.4V1305.7M1442.5 1280.6V1307.5M1444.5 1281.5V1307.4M1445.5 1283.2V1305.5M1447.5 1281.5V1307.3M1448.5 1283.2V1307.5M1450.5 1281.0V1308.3M1451.5 1281.1V1307.3M1453.5 1282.9V1308.5M1454.5 1283.2V1306.9M1456.5 1282.6V1307.1M1457.5 1281.8V1307.1M1459.5 1282.0V1307.2M1460.5 1282.0V1306.0M1462.5 1283.4V1305.4M1463.5 1282.3V1307.3M1465.5 1281.2V1307.2M1466.5 1281.0V1306.1M1468.5 1281.0V1307.3M1469.5 1281.8V1306.9M1471.5 1281.3V1305.4M1472.5 1283.4V1306.7M1474.5 1283.0V1307.2M1475.5 1281.5V1306.9M1477.5 1282.2V1307.3M1478.5 1281.2V1306.0M1480.5 1281.7V1307.6M1481.5 1281.0V1306.5M1483.5 1281.1V1306.1M1484.5 1281.4V1307.1M1486.5 1281.0V1306.1M1487.5 1282.1V1305.8M1489.5 1282.9V1304.7M1490.5 1284.7V1304.5M1492.5 1283.8V1303.7M1493.5 1285.0V1304.4M1495.5 1284.6V1306.3M1496.5 1282.0V1306.6M1498.5 1283.8V1306.5M1499.5 1281.0V1305.5M1501.5 1284.5V1305.0M1502.5 1283.2V1305.7M1504.5 1281.8V1307.7M1505.5 1283.0V1303.9M1507.5 1282.8V1307.1M1508.5 1283.5V1305.8M1510.5 1282.0V1304.9M1511.5 1284.4V1306.8M1513.5 1282.4V1305.0M1514.5 1284.4V1304.8M1516.5 1285.5V1306.8M1517.5 1284.3V1303.2M1519.5 1281.8V1306.8M1520.5 1284.6V1306.7M1522.5 1283.5V1304.8M1523.5 1285.4V1304.1M1525.5 1282.2V1305.0M1526.5 1281.9V1306.1M1528.5 1285.2V1306.6M1529.5 1282.1V1306.0M1531.5 1284.8V1303.8M1532.5 1283.8V1306.2M1534.5 1283.9V1303.8M1535.5 1284.8V1303.4M1537.5 1282.5V1305.0M1538.5 1285.1V1306.1M1540.5 1282.1V1306.0M1541.5 1284.8V1306.3M1543.5 1281.2V1304.5M1544.5 1284.1V1303.6M1546.5 1284.3V1304.0M1547.5 1282.2V1305.6M1549.5 1285.0V1304.6M1550.5 1285.3V1303.2M1552.5 1283.5V1304.0M1553.5 1285.6V1305.2M1555.5 1284.5V1303.3M1556.5 1283.5V1305.9M1558.5 1285.5V1306.3M1559.5 1285.1V1306.3M1561.5 1282.5V1304.0M1562.5 1282.5V1304.7M1564.5 1283.8V1303.4M1565.5 1282.2V1306.3M1567.5 1283.0V1305.3M1568.5 1283.9V1304.8M1570.5 1283.0V1306.0M1571.5 1283.1V1303.8M1573.5 1282.2V1306.3M1574.5 1283.2V1303.2M1576.5 1281.4V1305.0M1577.5 1284.2V1305.7M1579.5 1284.6V1305.4M1580.5 1284.3V1305.3M1582.5 1282.5V1305.5M1583.5 1282.3V1305.1M1585.5 1283.1V1303.9M1586.5 1284.1V1303.5M1588.5 1284.0V1305.2M1589.5 1282.8V1303.6M1591.5 1283.7V1306.2M1592.5 1284.9V1304.2M1594.5 1284.8V1305.7M1595.5 1282.6V1305.3M1597.5 1282.8V1306.0M1598.5 1283.1V1303.1M1600.5 1284.9V1302.8M1601.5 1283.3V1305.7M1603.5 1285.6V1305.4M1604.5 1283.5V1305.8M1606.5 1285.1V1303.7M1607.5 1285.2V1304.4M1609.5 1284.9V1303.0M1610.5 1283.2V1304.4M1612.5 1283.8V1302.5M1613.5 1282.7V1305.3M1615.5 1284.6V1303.1M1616.5 1285.1V1304.6M1618.5 1285.7V1305.5M1619.5 1282.9V1303.1M1621.5 1285.3V1303.6M1622.5 1283.0V1303.5M1624.5 1282.6V1304.2M1625.5 1282.9V1303.0M1627.5 1285.3V1304.1M1628.5 1286.4V1304.1M1630.5 1283.9V1304.5M1631.5 1284.5V1304.3M1633.5 1283.6V1303.2M1634.5 1284.9V1301.2M1636.5 1284.9V1302.7M1637.5 1287.1V1303.0M1639.5 1285.9V1302.7M1640.5 1284.6V1303.3M1642.5 1287.1V1302.2M1643.5 1285.2V1302.1M1645.5 1286.8V1301.8M1646.5 1284.9V1303.9M1648.5 1287.2V1302.4M1649.5 1285.7V1302.0M1651.5 1285.3V1303.2M1652.5 1286.4V1304.0M1654.5 1284.9V1304.1M1655.5 1285.0V1303.9M1657.5 1286.3V1302.0M1658.5 1284.9V1302.0M1660.5 1284.6V1304.0M1661.5 1284.5V1302.0M1663.5 1285.9V1303.3M1664.5 1286.3V1304.0M1666.5 1284.7V1302.3M1667.5 1287.1V1303.6M1669.5 1284.3V1304.1M1670.5 1285.2V1302.5M1672.5 1285.4V1303.0M1673.5 1285.7V1302.8M1675.5 1287.0V1301.8M1676.5 1287.1V1300.1M1678.5 1287.4V1299.6M1679.5 1288.4V1300.1M1681.5 1288.5V1299.7M1682.5 1288.7V1298.8M1684.5 1290.0V1298.6M1685.5 1289.0V1299.5M1687.5 1289.9V1299.0M1688.5 1289.9V1299.0M1690.5 1291.1V1298.4M1691.5 1291.1V1297.3M1693.5 1290.5V1297.5M1694.5 1291.0V1297.0M1696.5 1291.8V1297.5M1697.5 1291.6V1297.0M1699.5 1291.3V1297.1M1700.5 1292.0V1297.2M1702.5 1291.7V1297.1M1703.5 1291.5V1297.1M1705.5 1292.1V1297.1M1706.5 1290.5V1298.0M1708.5 1289.4V1298.0M1709.5 1290.0V1299.2M1711.5 1290.4V1298.3M1712.5 1289.5V1298.0M1714.5 1290.7V1298.8M1715.5 1290.7V1298.1M1717.5 1289.6V1299.8M1718.5 1290.6V1298.4M1720.5 1289.6V1298.9M1721.5 1290.7V1299.0M1723.5 1290.2V1298.0M1724.5 1290.9V1298.0M1726.5 1290.0V1298.0M1727.5 1290.1V1297.7M1729.5 1289.7V1297.7M1730.5 1290.9V1298.7M1732.5 1288.9V1298.7M1733.5 1285.5V1304.1M1735.5 1285.5V1302.2M1736.5 1287.6V1302.7M1738.5 1287.7V1301.4M1739.5 1285.3V1304.5M1741.5 1286.4V1303.1M1742.5 1286.8V1302.6M1744.5 1287.3V1301.3M1745.5 1286.1V1303.3M1747.5 1285.7V1302.2M1748.5 1285.7V1301.1M1750.5 1285.1V1302.3M1751.5 1287.6V1303.4M1753.5 1287.6V1303.1M1754.5 1286.4V1301.0M1756.5 1287.6V1303.1M1757.5 1285.5V1302.7M1759.5 1285.3V1303.4M1760.5 1286.1V1301.5M1762.5 1286.9V1301.9M1763.5 1286.4V1301.3M1765.5 1287.6V1302.5M1766.5 1285.6V1303.5M1768.5 1287.4V1302.0M1769.5 1287.0V1303.0M1771.5 1285.5V1303.4M1772.5 1285.5V1302.5M1774.5 1286.9V1302.8M1775.5 1285.3V1301.9M1777.5 1285.4V1302.0M1778.5 1286.2V1301.7M1780.5 1287.9V1302.1M1781.5 1286.7V1301.5M1783.5 1286.8V1301.1M1784.5 1287.9V1303.3M1786.5 1284.3V1303.3M1787.5 1285.3V1302.2M1789.5 1286.7V1302.1M1790.5 1285.3V1302.9M1792.5 1287.3V1303.2M1793.5 1286.5V1302.4M1795.5 1281.2V1307.6M1796.5 1282.3V1307.1M1798.5 1281.1V1305.3M1799.5 1281.0V1306.8M1801.5 1281.0V1307.5M1802.5 1282.0V1307.2M1804.5 1282.7V1305.8M1805.5 1282.7V1306.3M1807.5 1283.4V1307.5M1808.5 1283.4V1306.6M1810.5 1282.5V1305.5M1811.5 1282.6V1306.4M1813.5 1281.0V1306.0M1814.5 1281.3V1306.0M1816.5 1281.2V1305.6M1817.5 1281.2V1308.1M1819.5 1282.2V1306.3M1820.5 1281.7V1307.6M1822.5 1281.2V1308.5M1823.5 1281.4V1307.8M1825.5 1280.7V1307.0M1826.5 1281.7V1306.6M1828.5 1283.1V1307.4M1829.5 1281.1V1307.1M1831.5 1281.0V1305.7M1832.5 1281.1V1305.9M1834.5 1281.7V1305.4M1835.5 1282.4V1307.2M1837.5 1282.3V1306.3M1838.5 1282.7V1307.3M1840.5 1282.2V1306.2M1841.5 1281.3V1307.4M1843.5 1281.4V1306.4M1844.5 1283.2V1306.9M1846.5 1282.6V1306.3M1847.5 1282.7V1307.3M1849.5 1281.9V1306.8M1850.5 1283.4V1305.2M1852.5 1281.6V1307.6M1853.5 1281.5V1308.4M1855.5 1282.1V1307.8M1856.5 1282.1V1305.3M1858.5 1281.0V1307.4M1859.5 1281.7V1306.9M1861.5 1282.0V1307.0M1862.5 1281.2V1306.4M1864.5 1281.7V1307.2M1865.5 1281.4V1306.7M1867.5 1282.7V1306.1M1868.5 1283.1V1307.0M1870.5 1282.0V1307.6M1871.5 1282.2V1305.6M1873.5 1282.6V1306.6M1874.5 1282.4V1306.4M1876.5 1282.2V1306.7M1877.5 1282.6V1306.5M1879.5 1281.7V1306.8M1880.5 1283.1V1307.4M1882.5 1282.0V1305.8M1883.5 1283.4V1308.5M1885.5 1282.1V1308.1M1886.5 1281.1V1306.9M1888.5 1281.1V1306.4M1889.5 1282.9V1306.1M1891.5 1283.3V1305.6M1892.5 1282.7V1306.7M1894.5 1281.4V1306.5M1895.5 1283.3V1307.2M1897.5 1282.3V1307.6M1898.5 1282.7V1306.6M1900.5 1282.8V1306.5M1901.5 1282.2V1307.2M1903.5 1282.3V1307.3M1904.5 1281.0V1306.1M1906.5 1282.3V1307.1M1907.5 1282.1V1307.3M1909.5 1282.3V1307.2M1910.5 1281.0V1305.6M1912.5 1282.8V1306.1M1913.5 1280.4V1307.2M1915.5 1281.9V1306.6M1916.5 1282.3V1306.7M1918.5 1282.3V1306.8M1919.5 1282.5V1306.4M1921.5 1281.0V1307.4M1922.5 1281.2V1306.1M1924.5 1282.8V1307.0M1925.5 1281.6V1307.6M1927.5 1282.2V1307.3M1928.5 1281.9V1307.6M1930.5 1282.1V1306.3M1931.5 1282.5V1307.4M1933.5 1282.5V1306.7M1934.5 1282.6V1307.2M1936.5 1281.4V1306.8M1937.5 1281.9V1306.5M1939.5 1282.0V1307.3M1940.5 1281.5V1305.7M1942.5 1280.1V1307.0M1943.5 1283.1V1306.2M1945.5 1282.6V1307.2M1946.5 1282.7V1305.7M1948.5 1281.9V1307.4M1949.5 1281.6V1306.1M1951.5 1283.2V1305.5M1952.5 1282.0V1308.4M1954.5 1280.6V1305.4M1955.5 1283.0V1307.5M1957.5 1283.0V1306.4M1958.5 1282.7V1307.1M1960.5 1283.3V1308.2M1961.5 1282.1V1306.0M1963.5 1282.6V1306.5M1964.5 1282.3V1306.2M1966.5 1282.5V1307.5M1967.5 1281.1V1305.4M1969.5 1281.9V1305.3M1970.5 1281.9V1307.4M1972.5 1280.3V1305.6M1973.5 1281.2V1307.2M1975.5 1281.5V1305.3M1976.5 1282.1V1307.9M1978.5 1281.8V1307.1M1979.5 1282.4V1306.8M1981.5 1281.8V1307.5M1982.5 1281.3V1307.3M1984.5 1281.2V1306.1M1985.5 1282.8V1306.2M1987.5 1283.2V1307.8M1988.5 1282.7V1305.6M1990.5 1282.5V1306.6M1991.5 1283.0V1306.3M1993.5 1282.3V1306.8M1994.5 1282.1V1307.2M1996.5 1281.5V1305.7M1997.5 1281.2V1307.0M1999.5 1281.5V1305.8M2000.5 1281.0V1307.5M2002.5 1282.1V1307.7M2003.5 1283.0V1306.4M2005.5 1282.2V1307.4M2006.5 1282.6V1308.3M2008.5 1283.4V1307.1M2009.5 1283.3V1307.6M2011.5 1281.1V1306.4M2012.5 1281.2V1306.1M2014.5 1283.1V1305.7M2015.5 1281.4V1305.5M2017.5 1282.8V1306.7M2018.5 1282.4V1307.4M2020.5 1281.1V1305.6M2021.5 1282.7V1306.2M2023.5 1281.9V1306.8M2024.5 1282.5V1305.4M2026.5 1283.0V1305.6M2027.5 1282.8V1306.7M2029.5 1281.5V1305.6M2030.5 1281.3V1306.7M2032.5 1281.5V1306.5M2033.5 1281.1V1307.3M2035.5 1281.2V1307.1M2036.5 1281.4V1306.4M2038.5 1282.6V1306.3M2039.5 1281.3V1307.3M2041.5 1283.0V1306.5M2042.5 1281.5V1306.3M2044.5 1281.2V1307.1M2045.5 1280.8V1305.3M2047.5 1282.7V1307.6M2048.5 1281.1V1306.7M2050.5 1283.1V1305.5M2051.5 1281.2V1307.1M2053.5 1282.9V1307.5M2054.5 1282.3V1307.2M2056.5 1282.7V1307.6M2057.5 1282.6V1307.0M2059.5 1282.2V1307.2M2060.5 1283.1V1307.0M2062.5 1282.3V1307.5M2063.5 1282.4V1307.1M2065.5 1282.5V1306.5M2066.5 1282.9V1307.2M2068.5 1283.3V1306.4M2069.5 1281.7V1306.6M2071.5 1282.5V1306.6M2072.5 1281.0V1306.8M2074.5 1281.0V1305.8M2075.5 1281.4V1305.4M2077.5 1281.0V1307.2M2078.5 1281.4V1305.3M2080.5 1282.9V1305.8M2081.5 1281.6V1307.4M2083.5 1281.0V1307.6M2084.5 1283.1V1307.4M2086.5 1281.7V1305.3M2087.5 1281.5V1306.8M2089.5 1282.6V1306.6M2090.5 1282.2V1305.8M2092.5 1281.7V1306.7M2093.5 1283.1V1307.1M2095.5 1281.6V1305.5M2096.5 1282.5V1307.1M2098.5 1282.5V1307.4M2099.5 1281.1V1307.4M2101.5 1282.4V1308.0M2102.5 1281.0V1305.3M2104.5 1281.2V1306.2M2105.5 1281.9V1307.3M2107.5 1282.7V1306.6M2108.5 1282.7V1306.5M2110.5 1282.6V1307.3M2111.5 1282.2V1306.7M2113.5 1281.2V1307.2M2114.5 1282.0V1307.1M2116.5 1282.3V1305.3M2117.5 1282.8V1307.1M2119.5 1283.1V1305.5M2120.5 1281.7V1307.6M2122.5 1281.8V1307.2M2123.5 1281.0V1305.7M2125.5 1283.3V1307.1M2126.5 1281.5V1306.8M2128.5 1282.8V1306.0M2129.5 1280.1V1306.5M2131.5 1283.3V1307.4M2132.5 1282.8V1307.5M2134.5 1282.6V1306.6M2135.5 1281.5V1307.3M2137.5 1281.4V1305.9M2138.5 1281.3V1307.6M2140.5 1282.0V1306.2M2141.5 1282.0V1306.8M2143.5 1281.3V1307.1M2144.5 1281.9V1305.7M2146.5 1283.3V1306.3M2147.5 1281.1V1306.4M2149.5 1281.2V1305.2M2150.5 1281.3V1307.5M2152.5 1281.4V1305.5M2153.5 1281.0V1307.2M2155.5 1282.0V1305.8M2156.5 1283.2V1307.0M2158.5 1282.1V1305.3M2159.5 1280.1V1306.8M2161.5 1282.0V1307.6M2162.5 1281.7V1307.5M2164.5 1282.1V1305.3M2165.5 1282.1V1307.0M2167.5 1280.8V1306.5M2168.5 1283.4V1306.9M2170.5 1280.4V1306.3M2171.5 1281.2V1307.9M2173.5 1282.3V1305.7M2174.5 1283.0V1307.6M2176.5 1282.3V1306.1M2177.5 1283.3V1307.2M2179.5 1281.2V1307.5M2180.5 1283.1V1307.0M2182.5 1281.4V1306.5M2183.5 1281.0V1306.3M2185.5 1283.3V1305.3M2186.5 1281.3V1305.8M2188.5 1280.3V1306.7M2189.5 1283.3V1306.9M2191.5 1281.4V1305.4M2192.5 1282.2V1307.6M2194.5 1281.6V1305.7M2195.5 1282.0V1306.6M2197.5 1283.3V1305.4M2198.5 1281.1V1305.9M2200.5 1283.4V1307.4M2201.5 1280.7V1305.4M2203.5 1283.1V1306.2M2204.5 1281.9V1307.3M2206.5 1281.1V1305.4M2207.5 1283.3V1305.3M2209.5 1282.7V1306.5M2210.5 1283.2V1307.6M2212.5 1283.3V1306.4M2213.5 1282.8V1307.0M2215.5 1283.2V1306.3M2216.5 1281.3V1307.5M2218.5 1283.0V1306.3M2219.5 1281.8V1306.7M2221.5 1281.3V1307.6M2222.5 1281.6V1305.2M2224.5 1281.8V1307.2M2225.5 1281.1V1307.1M2227.5 1280.1V1307.4M2228.5 1282.0V1308.1M2230.5 1282.4V1306.6M2231.5 1282.3V1305.4M2233.5 1282.8V1305.3M2234.5 1281.1V1305.9M2236.5 1282.6V1306.9M2237.5 1281.7V1306.6M2239.5 1281.2V1305.3M2240.5 1281.8V1307.6M2242.5 1281.0V1307.2M2243.5 1281.2V1306.7M2245.5 1281.1V1306.2M2246.5 1283.2V1307.0M2248.5 1281.9V1306.6M2249.5 1281.6V1306.3M2251.5 1281.7V1305.4M2252.5 1281.3V1307.4M2254.5 1281.1V1307.1M2255.5 1281.6V1306.0M2257.5 1283.0V1305.6M2258.5 1283.1V1307.0M2260.5 1281.6V1307.6M2261.5 1282.3V1307.0M2263.5 1281.8V1306.8M2264.5 1283.3V1306.7M2266.5 1282.5V1305.7M2267.5 1281.2V1306.9M2269.5 1283.2V1307.6M2270.5 1282.4V1307.1M2272.5 1282.8V1306.6M2273.5 1282.6V1306.0M2275.5 1283.2V1305.9M2276.5 1280.9V1306.4M2278.5 1283.4V1306.0M2279.5 1281.8V1307.5M2281.5 1281.6V1306.7M2282.5 1282.3V1305.3M2284.5 1282.6V1307.1M2285.5 1282.7V1306.6M2287.5 1282.4V1305.7M2288.5 1283.4V1306.9M2290.5 1280.9V1305.7M2291.5 1282.8V1306.5M2293.5 1281.3V1307.2M2294.5 1281.8V1307.2M2296.5 1281.6V1307.2M2297.5 1282.6V1306.9M2299.5 1281.2V1305.5M2300.5 1282.3V1306.9M2302.5 1282.2V1305.7M2303.5 1280.6V1307.2M2305.5 1281.5V1306.9M2306.5 1281.5V1307.4M2308.5 1281.1V1305.4M2309.5 1280.9V1307.5M2311.5 1282.2V1306.6M2312.5 1281.7V1305.7M2314.5 1281.7V1307.3M2315.5 1281.3V1306.7M2317.5 1282.4V1306.2M2318.5 1281.5V1307.0M2320.5 1281.0V1305.4M2321.5 1281.3V1305.7M2323.5 1282.6V1306.0M2324.5 1282.2V1307.6M2326.5 1281.8V1307.5M2327.5 1281.9V1305.8M2329.5 1281.9V1305.8M2330.5 1281.4V1306.6M2332.5 1283.0V1306.5M2333.5 1281.4V1305.5M2335.5 1281.2V1307.4M2336.5 1281.9V1307.6M2338.5 1281.2V1306.7M2339.5 1282.1V1307.0M2341.5 1283.1V1307.4M2342.5 1283.1V1305.7M2344.5 1281.3V1307.4M2345.5 1281.6V1305.3M2347.5 1281.8V1306.2M2348.5 1283.1V1307.5M2350.5 1282.1V1305.4M2351.5 1282.5V1306.9M2353.5 1281.1V1306.5M2354.5 1281.8V1305.2M2356.5 1282.2V1307.0M2357.5 1282.5V1306.2M2359.5 1282.4V1307.5M2360.5 1281.5V1305.4M2362.5 1282.6V1306.4M2363.5 1281.7V1306.5M2365.5 1281.7V1305.7M2366.5 1281.8V1306.5M2368.5 1281.1V1306.2M2369.5 1282.5V1307.4M2371.5 1282.9V1306.3M2372.5 1281.7V1306.1M2374.5 1282.6V1307.3M2375.5 1282.3V1306.2M2377.5 1282.9V1306.3M2378.5 1283.0V1307.5M2380.5 1281.9V1308.0M2381.5 1281.1V1305.7M2383.5 1282.7V1306.6M2384.5 1282.1V1307.6M2386.5 1283.4V1306.9M2387.5 1281.1V1307.0M2389.5 1283.1V1307.4M2390.5 1283.4V1307.6M2392.5 1281.5V1305.9M2393.5 1281.2V1305.9M2395.5 1282.8V1307.2M2396.5 1283.3V1306.4M2398.5 1282.8V1306.8M2399.5 1282.0V1307.4M2401.5 1282.8V1307.4M2402.5 1281.6V1307.6M2404.5 1283.0V1305.7M2405.5 1281.7V1305.2M2407.5 1283.1V1306.2M2408.5 1281.7V1306.9M2410.5 1283.2V1307.3M2411.5 1281.3V1307.6M2413.5 1282.7V1307.2M2414.5 1282.5V1307.1M2416.5 1281.1V1307.0M2417.5 1281.7V1306.5M2419.5 1282.1V1306.5M2420.5 1282.1V1307.1M2422.5 1281.6V1306.1M2423.5 1281.2V1307.0M2425.5 1281.6V1306.1M2426.5 1281.4V1306.0M2428.5 1282.6V1307.6M2429.5 1281.3V1306.0M2431.5 1280.8V1306.5M2432.5 1281.2V1306.4M2434.5 1282.3V1307.5M2435.5 1281.3V1307.1M2437.5 1281.4V1307.0M2438.5 1281.8V1306.7M2440.5 1281.0V1306.2M2441.5 1281.8V1305.6M2443.5 1283.2V1306.1M2444.5 1281.9V1307.0M2446.5 1283.1V1306.9M2447.5 1281.6V1306.5M2449.5 1282.9V1306.3M2450.5 1282.7V1306.6M2452.5 1281.7V1305.3M2453.5 1280.9V1306.6M2455.5 1281.0V1306.9M2456.5 1281.6V1306.3M2458.5 1281.8V1308.5M2459.5 1283.1V1307.6M2461.5 1283.4V1307.5M2462.5 1280.6V1307.3M2464.5 1281.0V1306.4M2465.5 1282.2V1306.8M2467.5 1282.4V1306.6M2468.5 1281.7V1305.9M2470.5 1282.5V1307.4M2471.5 1282.6V1307.5M2473.5 1282.8V1306.1M2474.5 1284.0V1304.6M2476.5 1286.3V1302.3M2477.5 1286.6V1302.5M2479.5 1287.0V1302.2M2480.5 1286.5V1301.7M2482.5 1286.8V1301.4M2483.5 1287.4V1301.3M2485.5 1287.5V1301.5M2486.5 1287.7V1301.0M2488.5 1287.9V1300.5M2489.5 1288.0V1300.8M2491.5 1288.3V1300.3M2492.5 1288.9V1299.7M2494.5 1290.0V1297.9M2495.5 1291.2V1297.3M2497.5 1290.8V1297.5M2498.5 1290.4V1298.2M2500.5 1289.6V1299.6M2501.5 1289.4V1298.8M2503.5 1290.0V1298.5M2504.5 1290.5V1298.3M2506.5 1291.5V1297.7M2507.5 1290.7V1297.5M2509.5 1291.3V1297.3M2510.5 1291.0V1298.0M2512.5 1290.2V1298.1M2513.5 1289.3V1299.4M2515.5 1287.8V1301.2M2516.5 1286.8V1302.0M2518.5 1285.2V1303.1M2519.5 1286.0V1302.4M2521.5 1288.2V1300.3M2522.5 1289.0V1299.3M2524.5 1291.2V1297.3M2525.5 1292.2V1296.3M2527.5 1292.7V1295.9M2528.5 1292.8V1295.2M2530.5 1293.8V1295.2M2531.5 1293.7V1294.8M2533.5 1293.8V1294.8" stroke="#f5f5f5" stroke-width="1" fill="none"/><path d="M9.5 1293.8V1294.8M12.5 1292.1V1296.5M15.5 1289.4V1298.9M18.5 1284.3V1306.8M21.5 1281.1V1307.1M24.5 1282.7V1304.2M27.5 1283.8V1305.7M30.5 1281.1V1305.1M33.5 1281.1V1304.8M36.5 1281.8V1306.3M39.5 1281.0V1306.3M42.5 1284.4V1304.6M45.5 1281.0V1307.3M48.5 1284.2V1303.6M51.5 1282.7V1308.2M54.5 1282.8V1304.7M57.5 1281.1V1307.6M60.5 1281.6V1307.0M63.5 1284.5V1304.7M66.5 1283.6V1307.2M69.5 1281.3V1307.6M72.5 1281.6V1305.6M75.5 1282.6V1306.7M78.5 1281.9V1305.9M81.5 1284.5V1306.2M84.5 1284.7V1306.9M87.5 1283.9V1304.1M90.5 1284.9V1304.5M93.5 1281.0V1306.7M96.5 1281.7V1307.3M99.5 1282.6V1306.3M102.5 1282.8V1304.0M105.5 1283.8V1306.8M108.5 1284.7V1307.4M111.5 1283.5V1305.4M114.5 1284.3V1305.2M117.5 1281.6V1303.8M120.5 1280.3V1307.3M123.5 1282.2V1306.7M126.5 1281.3V1305.9M129.5 1281.3V1306.5M132.5 1282.6V1306.7M135.5 1282.6V1306.5M138.5 1282.0V1307.6M141.5 1284.4V1307.1M144.5 1281.3V1306.4M147.5 1282.0V1306.7M150.5 1285.1V1305.6M153.5 1283.8V1305.3M156.5 1286.2V1302.7M159.5 1284.6V1304.5M162.5 1285.8V1303.3M165.5 1285.1V1304.6M168.5 1284.9V1302.9M171.5 1286.0V1302.5M174.5 1286.1V1300.8M177.5 1287.0V1301.2M180.5 1287.1V1302.2M183.5 1288.3V1301.3M186.5 1286.8V1302.2M189.5 1287.0V1302.4M192.5 1286.2V1301.9M195.5 1288.0V1300.6M198.5 1286.5V1303.1M201.5 1286.8V1302.0M204.5 1282.9V1308.4M207.5 1281.7V1305.0M210.5 1284.8V1303.8M213.5 1283.1V1306.7M216.5 1281.9V1303.7M219.5 1283.1V1305.2M222.5 1281.6V1307.0M225.5 1284.9V1307.4M228.5 1284.6V1306.5M231.5 1281.3V1307.1M234.5 1283.1V1305.8M237.5 1281.9V1303.9M240.5 1281.0V1304.1M243.5 1281.2V1305.4M246.5 1281.5V1307.3M249.5 1283.9V1307.0M252.5 1282.7V1304.1M255.5 1282.3V1305.6M258.5 1282.4V1307.2M261.5 1283.7V1305.6M264.5 1281.5V1303.7M267.5 1284.5V1306.9M270.5 1281.4V1303.9M273.5 1283.0V1304.2M276.5 1282.4V1308.1M279.5 1281.0V1307.3M282.5 1281.2V1306.6M285.5 1281.2V1305.4M288.5 1284.7V1304.9M291.5 1284.7V1307.3M294.5 1283.0V1305.0M297.5 1282.0V1304.9M300.5 1284.8V1308.0M303.5 1281.6V1304.1M306.5 1282.9V1306.7M309.5 1281.0V1307.5M312.5 1281.1V1304.3M315.5 1282.3V1307.7M318.5 1282.1V1306.7M321.5 1282.8V1308.0M324.5 1282.6V1304.6M327.5 1280.3V1305.4M330.5 1284.4V1307.6M333.5 1283.8V1305.3M336.5 1281.3V1306.1M339.5 1282.7V1307.2M342.5 1283.7V1306.2M345.5 1283.2V1306.1M348.5 1283.6V1304.2M351.5 1283.9V1305.0M354.5 1283.9V1306.4M357.5 1282.8V1305.0M360.5 1281.3V1304.6M363.5 1281.6V1304.9M366.5 1282.5V1305.7M369.5 1284.2V1306.6M372.5 1281.8V1306.1M375.5 1281.3V1305.4M378.5 1282.0V1307.3M381.5 1281.5V1305.1M384.5 1282.5V1307.3M387.5 1282.1V1307.2M390.5 1282.7V1306.9M393.5 1281.5V1306.2M396.5 1283.3V1304.7M399.5 1280.2V1306.8M402.5 1283.5V1305.6M405.5 1283.3V1306.5M408.5 1280.2V1305.7M411.5 1284.9V1306.1M414.5 1281.2V1305.2M417.5 1283.6V1307.4M420.5 1283.6V1307.5M423.5 1281.3V1305.1M426.5 1281.1V1304.3M429.5 1282.0V1305.5M432.5 1281.1V1304.9M435.5 1282.6V1305.1M438.5 1282.6V1306.4M441.5 1281.4V1307.2M444.5 1281.2V1305.7M447.5 1282.6V1307.0M450.5 1281.1V1307.5M453.5 1281.6V1306.0M456.5 1281.6V1306.7M459.5 1283.4V1304.5M462.5 1281.5V1308.2M465.5 1280.4V1306.4M468.5 1281.5V1307.5M471.5 1281.3V1306.3M474.5 1281.6V1307.2M477.5 1284.3V1307.6M480.5 1282.6V1307.3M483.5 1282.8V1305.4M486.5 1283.7V1305.7M489.5 1281.0V1305.9M492.5 1281.1V1305.3M495.5 1281.4V1307.4M498.5 1283.1V1307.4M501.5 1282.7V1304.8M504.5 1282.0V1304.5M507.5 1281.1V1306.2M510.5 1281.0V1307.3M513.5 1283.1V1307.0M516.5 1281.2V1305.9M519.5 1280.8V1307.1M522.5 1282.8V1306.3M525.5 1282.6V1306.2M528.5 1282.2V1305.3M531.5 1283.6V1306.2M534.5 1283.4V1305.9M537.5 1283.2V1306.9M540.5 1281.3V1306.8M543.5 1281.0V1307.5M546.5 1281.9V1305.9M549.5 1284.2V1306.3M552.5 1282.4V1307.4M555.5 1281.4V1307.2M558.5 1281.0V1306.9M561.5 1282.7V1306.5M564.5 1281.1V1307.6M567.5 1281.3V1306.6M570.5 1281.8V1304.6M573.5 1281.7V1304.7M576.5 1286.1V1303.9M579.5 1286.6V1303.0M582.5 1285.8V1301.7M585.5 1287.6V1302.1M588.5 1286.1V1301.7M591.5 1286.1V1303.0M594.5 1287.8V1300.9M597.5 1287.8V1302.3M600.5 1285.4V1302.1M603.5 1286.3V1302.9M606.5 1285.9V1301.6M609.5 1287.8V1301.5M612.5 1287.2V1303.3M615.5 1286.0V1303.1M618.5 1285.6V1301.2M621.5 1286.9V1301.5M624.5 1285.5V1302.7M627.5 1281.2V1306.3M630.5 1280.6V1307.3M633.5 1283.7V1305.3M636.5 1282.6V1305.7M639.5 1283.1V1307.3M642.5 1283.5V1306.5M645.5 1281.7V1306.4M648.5 1284.2V1306.7M651.5 1280.9V1304.7M654.5 1282.6V1306.6M657.5 1282.3V1306.0M660.5 1282.6V1305.4M663.5 1283.4V1308.2M666.5 1283.9V1305.8M669.5 1281.2V1306.7M672.5 1283.0V1307.0M675.5 1281.7V1305.5M678.5 1282.4V1305.7M681.5 1282.9V1305.8M684.5 1281.1V1306.7M687.5 1281.6V1306.2M690.5 1282.9V1305.7M693.5 1282.9V1306.7M696.5 1281.0V1307.3M699.5 1283.2V1306.0M702.5 1280.9V1305.6M705.5 1281.7V1307.3M708.5 1281.6V1307.4M711.5 1281.6V1307.0M714.5 1283.2V1307.4M717.5 1282.8V1306.8M720.5 1282.7V1307.1M723.5 1282.7V1307.0M726.5 1283.2V1307.0M729.5 1282.3V1307.0M732.5 1281.1V1306.5M735.5 1282.7V1306.2M738.5 1281.5V1307.0M741.5 1281.6V1305.9M744.5 1280.3V1306.0M747.5 1281.4V1306.7M750.5 1281.2V1306.7M753.5 1283.1V1307.0M756.5 1281.7V1307.4M759.5 1281.7V1307.1M762.5 1281.4V1306.3M765.5 1282.4V1306.5M768.5 1282.6V1306.9M771.5 1281.4V1305.5M774.5 1282.8V1307.2M777.5 1282.8V1307.4M780.5 1282.5V1306.8M783.5 1281.7V1307.6M786.5 1282.3V1305.6M789.5 1281.7V1306.2M792.5 1281.6V1307.5M795.5 1282.9V1306.8M798.5 1282.5V1306.5M801.5 1281.1V1306.1M804.5 1280.7V1306.6M807.5 1281.1V1307.1M810.5 1282.2V1307.0M813.5 1281.4V1305.8M816.5 1282.3V1308.5M819.5 1281.5V1307.3M822.5 1281.4V1305.5M825.5 1282.1V1307.4M828.5 1280.4V1306.5M831.5 1283.2V1306.6M834.5 1281.1V1307.4M837.5 1282.4V1307.6M840.5 1282.1V1305.8M843.5 1282.4V1307.4M846.5 1282.0V1306.5M849.5 1281.4V1305.6M852.5 1280.3V1307.2M855.5 1282.5V1307.5M858.5 1283.2V1307.6M861.5 1281.3V1307.3M864.5 1281.3V1306.3M867.5 1282.9V1305.4M870.5 1283.3V1306.5M873.5 1282.0V1305.5M876.5 1282.4V1305.7M879.5 1282.2V1306.7M882.5 1282.4V1305.8M885.5 1282.3V1305.5M888.5 1281.2V1305.4M891.5 1282.2V1306.2M894.5 1283.1V1306.6M897.5 1282.7V1307.6M900.5 1282.3V1307.1M903.5 1282.5V1306.1M906.5 1282.6V1308.3M909.5 1281.5V1306.8M912.5 1282.3V1305.9M915.5 1282.0V1307.1M918.5 1281.1V1306.5M921.5 1282.7V1306.9M924.5 1282.4V1305.5M927.5 1281.4V1305.7M930.5 1282.4V1305.6M933.5 1281.3V1307.5M936.5 1280.3V1307.2M939.5 1281.6V1306.4M942.5 1281.8V1307.5M945.5 1283.3V1307.9M948.5 1281.7V1307.1M951.5 1283.3V1306.0M954.5 1281.4V1307.0M957.5 1281.1V1307.5M960.5 1282.1V1306.6M963.5 1282.8V1306.6M966.5 1282.2V1306.5M969.5 1281.1V1306.4M972.5 1281.9V1306.9M975.5 1281.4V1305.2M978.5 1281.0V1307.6M981.5 1282.7V1307.5M984.5 1281.0V1305.7M987.5 1281.7V1308.5M990.5 1283.3V1307.4M993.5 1282.3V1306.2M996.5 1282.4V1305.5M999.5 1281.3V1305.4M1002.5 1283.2V1305.9M1005.5 1283.5V1303.8M1008.5 1285.5V1305.5M1011.5 1282.5V1303.3M1014.5 1282.4V1305.3M1017.5 1282.5V1306.6M1020.5 1283.1V1305.7M1023.5 1285.0V1305.4M1026.5 1284.5V1306.4M1029.5 1283.0V1303.1M1032.5 1283.4V1305.0M1035.5 1284.5V1304.4M1038.5 1283.2V1305.7M1041.5 1285.2V1303.1M1044.5 1285.4V1305.7M1047.5 1281.3V1307.6M1050.5 1281.2V1305.8M1053.5 1281.3V1307.6M1056.5 1281.4V1306.7M1059.5 1281.3V1305.3M1062.5 1281.4V1306.7M1065.5 1283.1V1307.5M1068.5 1282.3V1306.9M1071.5 1282.9V1305.8M1074.5 1281.1V1305.5M1077.5 1282.3V1306.7M1080.5 1281.4V1306.8M1083.5 1281.2V1307.3M1086.5 1281.6V1306.1M1089.5 1282.3V1306.3M1092.5 1281.3V1307.3M1095.5 1281.4V1307.0M1098.5 1281.0V1308.1M1101.5 1282.0V1307.3M1104.5 1281.1V1306.4M1107.5 1282.2V1307.5M1110.5 1282.3V1306.1M1113.5 1282.6V1305.3M1116.5 1283.2V1305.6M1119.5 1281.1V1306.9M1122.5 1283.2V1305.4M1125.5 1281.4V1307.1M1128.5 1282.7V1308.3M1131.5 1281.2V1307.2M1134.5 1281.9V1306.0M1137.5 1283.4V1307.4M1140.5 1281.0V1305.9M1143.5 1281.7V1307.5M1146.5 1282.6V1305.9M1149.5 1282.9V1305.7M1152.5 1281.6V1305.9M1155.5 1281.1V1307.5M1158.5 1283.1V1306.0M1161.5 1282.4V1307.3M1164.5 1281.8V1307.5M1167.5 1281.8V1306.9M1170.5 1281.2V1305.3M1173.5 1281.3V1307.6M1176.5 1281.8V1306.4M1179.5 1281.4V1307.2M1182.5 1281.4V1306.6M1185.5 1282.3V1305.2M1188.5 1281.1V1307.3M1191.5 1282.2V1308.3M1194.5 1281.2V1306.5M1197.5 1282.1V1306.2M1200.5 1282.1V1306.9M1203.5 1281.6V1306.5M1206.5 1281.6V1305.5M1209.5 1280.3V1307.2M1212.5 1281.8V1307.3M1215.5 1281.2V1307.6M1218.5 1281.8V1306.9M1221.5 1281.1V1307.4M1224.5 1283.2V1305.6M1227.5 1281.0V1305.8M1230.5 1281.7V1307.2M1233.5 1281.2V1305.6M1236.5 1282.2V1307.7M1239.5 1281.7V1306.2M1242.5 1281.8V1306.4M1245.5 1282.5V1307.5M1248.5 1281.1V1306.6M1251.5 1282.8V1307.4M1254.5 1283.1V1306.3M1257.5 1282.6V1307.2M1260.5 1281.9V1306.6M1263.5 1281.2V1306.4M1266.5 1283.2V1306.1M1269.5 1280.5V1306.2M1272.5 1283.4V1307.1M1275.5 1281.3V1305.7M1278.5 1283.3V1307.8M1281.5 1283.3V1305.2M1284.5 1281.2V1307.4M1287.5 1281.8V1307.2M1290.5 1282.4V1305.7M1293.5 1281.8V1307.1M1296.5 1281.0V1307.4M1299.5 1282.0V1307.4M1302.5 1282.5V1305.2M1305.5 1282.5V1305.4M1308.5 1281.9V1307.4M1311.5 1281.6V1307.5M1314.5 1281.1V1306.0M1317.5 1281.6V1305.6M1320.5 1281.3V1306.6M1323.5 1282.4V1307.3M1326.5 1281.5V1306.9M1329.5 1282.6V1307.3M1332.5 1283.3V1306.6M1335.5 1281.4V1306.7M1338.5 1281.5V1305.4M1341.5 1281.8V1306.9M1344.5 1281.4V1307.3M1347.5 1281.6V1307.6M1350.5 1281.1V1305.2M1353.5 1281.0V1305.2M1356.5 1281.4V1305.9M1359.5 1282.0V1307.1M1362.5 1281.6V1307.0M1365.5 1281.6V1305.7M1368.5 1281.4V1305.8M1371.5 1281.9V1307.3M1374.5 1282.1V1307.4M1377.5 1281.8V1305.7M1380.5 1283.2V1305.3M1383.5 1282.5V1306.5M1386.5 1281.2V1307.1M1389.5 1281.7V1307.2M1392.5 1281.3V1305.3M1395.5 1281.1V1306.6M1398.5 1282.0V1307.4M1401.5 1282.3V1306.7M1404.5 1282.3V1307.4M1407.5 1281.1V1306.8M1410.5 1282.1V1306.8M1413.5 1282.7V1307.1M1416.5 1282.1V1306.0M1419.5 1281.5V1306.7M1422.5 1282.5V1307.3M1425.5 1281.8V1305.9M1428.5 1281.4V1307.4M1431.5 1281.2V1307.1M1434.5 1281.6V1307.4M1437.5 1281.0V1306.0M1440.5 1281.8V1307.2M1443.5 1283.0V1307.3M1446.5 1281.8V1307.6M1449.5 1281.0V1306.9M1452.5 1282.9V1306.8M1455.5 1281.1V1307.5M1458.5 1280.5V1306.2M1461.5 1283.1V1307.2M1464.5 1281.9V1306.5M1467.5 1281.1V1306.7M1470.5 1282.4V1306.9M1473.5 1282.6V1306.0M1476.5 1282.9V1306.2M1479.5 1281.6V1305.7M1482.5 1283.3V1308.1M1485.5 1283.4V1305.5M1488.5 1281.4V1306.9M1491.5 1284.8V1306.3M1494.5 1284.3V1306.2M1497.5 1285.2V1303.1M1500.5 1282.9V1303.3M1503.5 1282.6V1304.9M1506.5 1284.7V1305.9M1509.5 1282.0V1304.3M1512.5 1282.5V1303.5M1515.5 1285.2V1305.0M1518.5 1283.9V1305.1M1521.5 1282.4V1305.7M1524.5 1283.4V1305.7M1527.5 1282.2V1303.8M1530.5 1282.1V1303.9M1533.5 1284.8V1306.5M1536.5 1284.2V1303.7M1539.5 1282.1V1304.0M1542.5 1284.2V1306.3M1545.5 1282.0V1305.8M1548.5 1284.4V1306.2M1551.5 1285.0V1306.0M1554.5 1285.2V1305.6M1557.5 1285.3V1303.4M1560.5 1285.0V1303.8M1563.5 1285.6V1306.0M1566.5 1283.9V1305.2M1569.5 1282.9V1305.0M1572.5 1284.8V1305.2M1575.5 1282.3V1304.7M1578.5 1282.6V1306.0M1581.5 1285.7V1304.2M1584.5 1284.6V1305.5M1587.5 1285.9V1307.2M1590.5 1283.8V1306.2M1593.5 1284.5V1305.7M1596.5 1282.8V1303.8M1599.5 1284.9V1303.9M1602.5 1282.5V1304.2M1605.5 1284.3V1304.8M1608.5 1282.8V1303.9M1611.5 1284.0V1303.9M1614.5 1284.2V1306.5M1617.5 1283.8V1302.6M1620.5 1284.5V1305.7M1623.5 1283.8V1303.2M1626.5 1286.3V1303.3M1629.5 1284.2V1304.9M1632.5 1285.8V1304.1M1635.5 1284.7V1302.1M1638.5 1285.7V1302.3M1641.5 1285.6V1303.9M1644.5 1286.1V1301.9M1647.5 1286.2V1301.9M1650.5 1285.5V1303.1M1653.5 1285.4V1303.1M1656.5 1287.0V1301.8M1659.5 1284.6V1302.7M1662.5 1286.9V1302.4M1665.5 1285.8V1303.6M1668.5 1285.3V1302.7M1671.5 1285.3V1302.3M1674.5 1286.3V1302.1M1677.5 1287.7V1300.5M1680.5 1288.6V1300.3M1683.5 1288.9V1299.6M1686.5 1289.5V1298.7M1689.5 1290.8V1298.8M1692.5 1289.6V1298.1M1695.5 1291.4V1297.2M1698.5 1291.1V1297.0M1701.5 1291.9V1297.2M1704.5 1291.7V1296.7M1707.5 1290.4V1298.6M1710.5 1290.5V1298.0M1713.5 1289.8V1298.8M1716.5 1289.8V1297.9M1719.5 1289.1V1298.4M1722.5 1289.6V1298.8M1725.5 1289.9V1297.6M1728.5 1290.4V1297.8M1731.5 1290.8V1298.4M1734.5 1287.4V1301.5M1737.5 1285.1V1303.0M1740.5 1286.2V1303.1M1743.5 1285.0V1302.6M1746.5 1286.8V1303.5M1749.5 1285.3V1300.9M1752.5 1286.3V1301.8M1755.5 1284.6V1301.4M1758.5 1287.6V1303.4M1761.5 1286.3V1303.0M1764.5 1285.1V1302.3M1767.5 1286.9V1303.3M1770.5 1286.1V1303.0M1773.5 1285.8V1302.4M1776.5 1285.3V1301.5M1779.5 1285.5V1302.4M1782.5 1287.9V1302.6M1785.5 1287.1V1301.9M1788.5 1287.5V1302.5M1791.5 1286.4V1303.3M1794.5 1287.7V1300.9M1797.5 1282.1V1307.6M1800.5 1282.8V1305.8M1803.5 1281.6V1307.6M1806.5 1282.7V1307.3M1809.5 1282.7V1307.0M1812.5 1281.1V1307.5M1815.5 1281.4V1306.5M1818.5 1281.5V1306.5M1821.5 1281.2V1307.5M1824.5 1281.4V1307.2M1827.5 1283.1V1306.7M1830.5 1282.3V1307.2M1833.5 1281.3V1305.6M1836.5 1282.8V1307.3M1839.5 1280.5V1307.4M1842.5 1281.2V1306.4M1845.5 1282.9V1305.2M1848.5 1281.4V1305.9M1851.5 1282.4V1306.6M1854.5 1281.2V1306.8M1857.5 1281.5V1306.0M1860.5 1282.2V1305.3M1863.5 1281.7V1306.2M1866.5 1280.4V1305.8M1869.5 1283.1V1306.7M1872.5 1281.9V1307.5M1875.5 1281.2V1307.2M1878.5 1283.2V1306.3M1881.5 1283.1V1306.7M1884.5 1282.7V1306.8M1887.5 1282.6V1307.6M1890.5 1281.1V1307.2M1893.5 1281.1V1307.3M1896.5 1281.1V1305.8M1899.5 1282.4V1307.5M1902.5 1281.7V1306.8M1905.5 1281.5V1306.4M1908.5 1281.6V1307.2M1911.5 1281.8V1306.1M1914.5 1282.2V1305.4M1917.5 1281.3V1306.3M1920.5 1281.0V1306.7M1923.5 1281.5V1305.8M1926.5 1283.3V1306.3M1929.5 1282.2V1305.9M1932.5 1283.1V1306.6M1935.5 1282.4V1307.5M1938.5 1282.5V1306.3M1941.5 1282.5V1306.6M1944.5 1281.5V1305.8M1947.5 1281.6V1307.5M1950.5 1281.4V1307.3M1953.5 1282.0V1305.3M1956.5 1281.7V1306.8M1959.5 1281.1V1305.5M1962.5 1283.3V1305.7M1965.5 1281.6V1305.6M1968.5 1283.0V1306.5M1971.5 1281.9V1306.8M1974.5 1281.8V1306.8M1977.5 1282.4V1307.0M1980.5 1281.9V1306.5M1983.5 1283.1V1307.2M1986.5 1281.5V1306.8M1989.5 1282.0V1307.2M1992.5 1281.2V1305.3M1995.5 1282.2V1305.6M1998.5 1282.0V1305.8M2001.5 1281.1V1306.7M2004.5 1281.3V1305.4M2007.5 1281.0V1307.4M2010.5 1282.9V1306.7M2013.5 1283.2V1307.1M2016.5 1281.6V1305.7M2019.5 1280.1V1306.7M2022.5 1282.1V1305.4M2025.5 1280.7V1307.5M2028.5 1281.6V1306.6M2031.5 1281.5V1306.6M2034.5 1282.0V1307.6M2037.5 1282.4V1307.5M2040.5 1281.1V1306.8M2043.5 1282.1V1306.2M2046.5 1281.3V1307.6M2049.5 1282.0V1305.3M2052.5 1282.3V1307.0M2055.5 1282.6V1306.4M2058.5 1282.6V1307.5M2061.5 1280.5V1306.5M2064.5 1281.1V1305.7M2067.5 1281.9V1305.5M2070.5 1281.4V1305.7M2073.5 1281.9V1307.5M2076.5 1283.2V1306.5M2079.5 1282.5V1308.0M2082.5 1282.1V1307.4M2085.5 1281.5V1306.5M2088.5 1283.0V1306.1M2091.5 1281.1V1306.7M2094.5 1281.1V1305.7M2097.5 1282.0V1307.6M2100.5 1283.0V1307.6M2103.5 1281.8V1307.6M2106.5 1281.6V1306.3M2109.5 1281.3V1307.6M2112.5 1283.0V1306.6M2115.5 1281.7V1306.1M2118.5 1281.8V1307.0M2121.5 1281.3V1306.7M2124.5 1281.5V1307.2M2127.5 1282.2V1307.5M2130.5 1281.2V1305.4M2133.5 1281.9V1307.9M2136.5 1280.3V1306.0M2139.5 1281.0V1305.7M2142.5 1282.1V1306.8M2145.5 1282.6V1305.9M2148.5 1282.4V1305.9M2151.5 1282.4V1307.2M2154.5 1281.8V1307.1M2157.5 1281.3V1306.8M2160.5 1282.8V1307.5M2163.5 1283.4V1308.5M2166.5 1282.2V1307.2M2169.5 1282.8V1306.0M2172.5 1283.0V1307.5M2175.5 1281.8V1307.4M2178.5 1282.4V1306.8M2181.5 1283.1V1305.5M2184.5 1282.1V1305.3M2187.5 1283.2V1306.3M2190.5 1281.1V1306.3M2193.5 1281.6V1306.6M2196.5 1281.3V1307.6M2199.5 1283.0V1307.6M2202.5 1281.5V1305.7M2205.5 1282.6V1306.4M2208.5 1281.3V1306.3M2211.5 1282.6V1306.8M2214.5 1281.1V1305.4M2217.5 1281.2V1306.5M2220.5 1282.7V1305.6M2223.5 1282.7V1305.7M2226.5 1282.6V1306.1M2229.5 1281.0V1306.2M2232.5 1281.1V1305.7M2235.5 1282.2V1306.0M2238.5 1281.4V1307.1M2241.5 1281.1V1305.3M2244.5 1282.5V1306.6M2247.5 1282.4V1307.6M2250.5 1283.2V1307.1M2253.5 1281.5V1306.5M2256.5 1281.8V1306.2M2259.5 1282.3V1307.6M2262.5 1283.3V1307.0M2265.5 1281.8V1305.8M2268.5 1281.6V1307.6M2271.5 1282.9V1305.9M2274.5 1281.7V1306.2M2277.5 1283.2V1307.5M2280.5 1282.6V1307.3M2283.5 1282.7V1306.9M2286.5 1281.5V1307.6M2289.5 1281.6V1306.8M2292.5 1282.7V1305.6M2295.5 1281.6V1306.4M2298.5 1282.9V1306.5M2301.5 1282.2V1307.6M2304.5 1281.4V1306.6M2307.5 1281.7V1307.4M2310.5 1283.0V1305.5M2313.5 1282.5V1305.3M2316.5 1282.7V1307.5M2319.5 1282.8V1306.9M2322.5 1281.1V1306.1M2325.5 1281.1V1307.0M2328.5 1283.0V1307.1M2331.5 1281.0V1305.8M2334.5 1281.2V1307.2M2337.5 1281.1V1307.5M2340.5 1281.1V1306.2M2343.5 1282.9V1307.8M2346.5 1281.1V1307.0M2349.5 1281.5V1305.7M2352.5 1282.5V1306.8M2355.5 1281.3V1306.8M2358.5 1282.3V1305.7M2361.5 1282.0V1305.4M2364.5 1282.4V1307.5M2367.5 1282.3V1308.4M2370.5 1282.4V1305.3M2373.5 1281.9V1308.3M2376.5 1282.1V1306.3M2379.5 1281.8V1307.6M2382.5 1281.5V1307.5M2385.5 1280.3V1306.4M2388.5 1282.7V1306.1M2391.5 1281.1V1305.7M2394.5 1282.6V1305.4M2397.5 1282.7V1306.9M2400.5 1281.0V1306.4M2403.5 1281.2V1306.4M2406.5 1281.6V1307.5M2409.5 1281.6V1306.5M2412.5 1281.1V1307.6M2415.5 1281.4V1306.8M2418.5 1283.0V1308.4M2421.5 1283.0V1306.4M2424.5 1281.9V1305.8M2427.5 1281.8V1307.5M2430.5 1282.8V1307.4M2433.5 1281.9V1307.1M2436.5 1283.1V1307.5M2439.5 1282.8V1306.8M2442.5 1281.6V1306.5M2445.5 1282.5V1307.3M2448.5 1282.9V1306.5M2451.5 1282.7V1306.1M2454.5 1282.9V1306.4M2457.5 1281.1V1307.6M2460.5 1282.2V1307.3M2463.5 1281.4V1306.0M2466.5 1281.6V1306.6M2469.5 1282.5V1307.4M2472.5 1281.7V1307.5M2475.5 1285.0V1303.2M2478.5 1286.9V1302.2M2481.5 1286.7V1301.7M2484.5 1287.0V1301.6M2487.5 1288.0V1300.7M2490.5 1287.7V1300.4M2493.5 1289.9V1299.1M2496.5 1292.1V1297.0M2499.5 1290.1V1299.0M2502.5 1289.7V1298.6M2505.5 1291.1V1297.4M2508.5 1291.2V1297.5M2511.5 1290.7V1298.2M2514.5 1288.6V1299.7M2517.5 1286.3V1302.6M2520.5 1287.6V1301.6M2523.5 1290.1V1298.2M2526.5 1292.4V1296.4M2529.5 1293.5V1295.1M2532.5 1293.8V1294.8" stroke="#e2e2e2" stroke-width="1" fill="none"/></svg>
<div class="t time" style="left:8px;top:1321.5px;height:12px;line-height:12px;">00:00</div>
<div class="t time" style="right:12.5px;top:1322.1px;height:12px;line-height:12px;">-05:15</div>
<div class="t now" style="left:51.5px;top:1347.5px;height:20px;line-height:20px;">Yell 4 You - Girl (I Need Your Love) (Dj Experience Us Mix)</div>
<svg class="i" style="left:1175.5px;top:1341.7px" width="29.6" height="29.6" viewBox="-14.8 -14.8 29.6 29.6"><circle r="12.3" fill="none" stroke="#fff" stroke-width="3"/><path d="M-5.200 -5.800h2.800v11.600h-2.800zM5.200 -5.800v11.600L-2 0z" fill="#fff"/></svg>
<svg class="i" style="left:1224.9px;top:1328.2px" width="56.6" height="56.6" viewBox="-28.3 -28.3 56.6 56.6"><circle r="24.3" fill="none" stroke="#fff" stroke-width="6"/><path d="M-5.200 -12.500 L11.500 0 L-5.200 12.500Z" fill="#fff"/></svg>
<svg class="i" style="left:1301.3px;top:1341.7px" width="29.6" height="29.6" viewBox="-14.8 -14.8 29.6 29.6"><circle r="12.3" fill="none" stroke="#fff" stroke-width="3"/><rect x="-4.600" y="-4.600" width="9.200" height="9.200" fill="#fff"/></svg>
<svg class="i" style="left:1348.7px;top:1341.7px" width="29.6" height="29.6" viewBox="-14.8 -14.8 29.6 29.6"><circle r="12.3" fill="none" stroke="#fff" stroke-width="3"/><path d="M5.200 -5.800h-2.800v11.600h2.800zM-5.200 -5.800v11.600L2 0z" fill="#fff"/></svg>
<svg class="i" style="left:1728.30px;top:1347.70px" width="21.6" height="21.6" viewBox="0 0 24 24"><path d="M12 17.27L18.18 21l-1.64-7.03L22 9.24l-7.19-.61L12 2 9.19 8.63 2 9.24l5.46 4.73L5.82 21z" fill="#424242" stroke="#656565" stroke-width="1.400" stroke-linejoin="round"/></svg>
<svg class="i" style="left:1754.25px;top:1347.70px" width="21.6" height="21.6" viewBox="0 0 24 24"><path d="M12 17.27L18.18 21l-1.64-7.03L22 9.24l-7.19-.61L12 2 9.19 8.63 2 9.24l5.46 4.73L5.82 21z" fill="#424242" stroke="#656565" stroke-width="1.400" stroke-linejoin="round"/></svg>
<svg class="i" style="left:1780.20px;top:1347.70px" width="21.6" height="21.6" viewBox="0 0 24 24"><path d="M12 17.27L18.18 21l-1.64-7.03L22 9.24l-7.19-.61L12 2 9.19 8.63 2 9.24l5.46 4.73L5.82 21z" fill="#424242" stroke="#656565" stroke-width="1.400" stroke-linejoin="round"/></svg>
<svg class="i" style="left:1806.15px;top:1347.70px" width="21.6" height="21.6" viewBox="0 0 24 24"><path d="M12 17.27L18.18 21l-1.64-7.03L22 9.24l-7.19-.61L12 2 9.19 8.63 2 9.24l5.46 4.73L5.82 21z" fill="#424242" stroke="#656565" stroke-width="1.400" stroke-linejoin="round"/></svg>
<svg class="i" style="left:1832.10px;top:1347.70px" width="21.6" height="21.6" viewBox="0 0 24 24"><path d="M12 17.27L18.18 21l-1.64-7.03L22 9.24l-7.19-.61L12 2 9.19 8.63 2 9.24l5.46 4.73L5.82 21z" fill="#424242" stroke="#656565" stroke-width="1.400" stroke-linejoin="round"/></svg>
<svg class="i" style="left:2193.80px;top:1340.00px;color:#fff;" width="33.00" height="33.00" viewBox="0 0 24 24" fill="currentColor"><path d="M7 7h10v3l4-4-4-4v3H5v6h2V7zm10 10H7v-3l-4 4 4 4v-3h12v-6h-2v4z" /></svg>
<svg class="i" style="left:2240.50px;top:1339.50px;color:#7a7a7a;" width="34.00" height="34.00" viewBox="0 0 24 24" fill="currentColor"><path d="M10.590 9.170L5.410 4 4 5.410l5.170 5.170 1.420-1.410zM14.500 4l2.040 2.040L4 18.590 5.410 20 17.960 7.460 20 9.500V4h-5.500zm.33 9.410l-1.410 1.410 3.130 3.130L14.500 20H20v-5.500l-2.040 2.040-3.130-3.130z" /></svg>
<svg class="i" style="left:2287.50px;top:1339.50px;color:#7a7a7a;" width="34.00" height="34.00" viewBox="0 0 24 24" fill="currentColor"><path d="M10 20h4V4h-4v16zm-6 0h4v-8H4v8zM16 9v11h4V9h-4z" /></svg>
<svg class="i" style="left:2335.00px;top:1340.00px;color:#7a7a7a;" width="33.00" height="33.00" viewBox="0 0 24 24" fill="currentColor"><path d="M21 3H3c-1.100 0-2 .9-2 2v3h2V5h18v14h-7v2h7c1.100 0 2-.9 2-2V5c0-1.100-.9-2-2-2zM1 18v3h3c0-1.660-1.340-3-3-3zm0-4v2c2.760 0 5 2.240 5 5h2c0-3.870-3.130-7-7-7zm0-4v2c4.970 0 9 4.030 9 9h2c0-6.080-4.930-11-11-11z" /></svg>
<div class="b" style="left:2388px;top:1356.7px;width:92px;height:2.6px;background:#fff"></div>
<div class="b" style="left:2473.8px;top:1352px;width:12px;height:12px;background:#fff;border-radius:50%"></div>
</body></html>
